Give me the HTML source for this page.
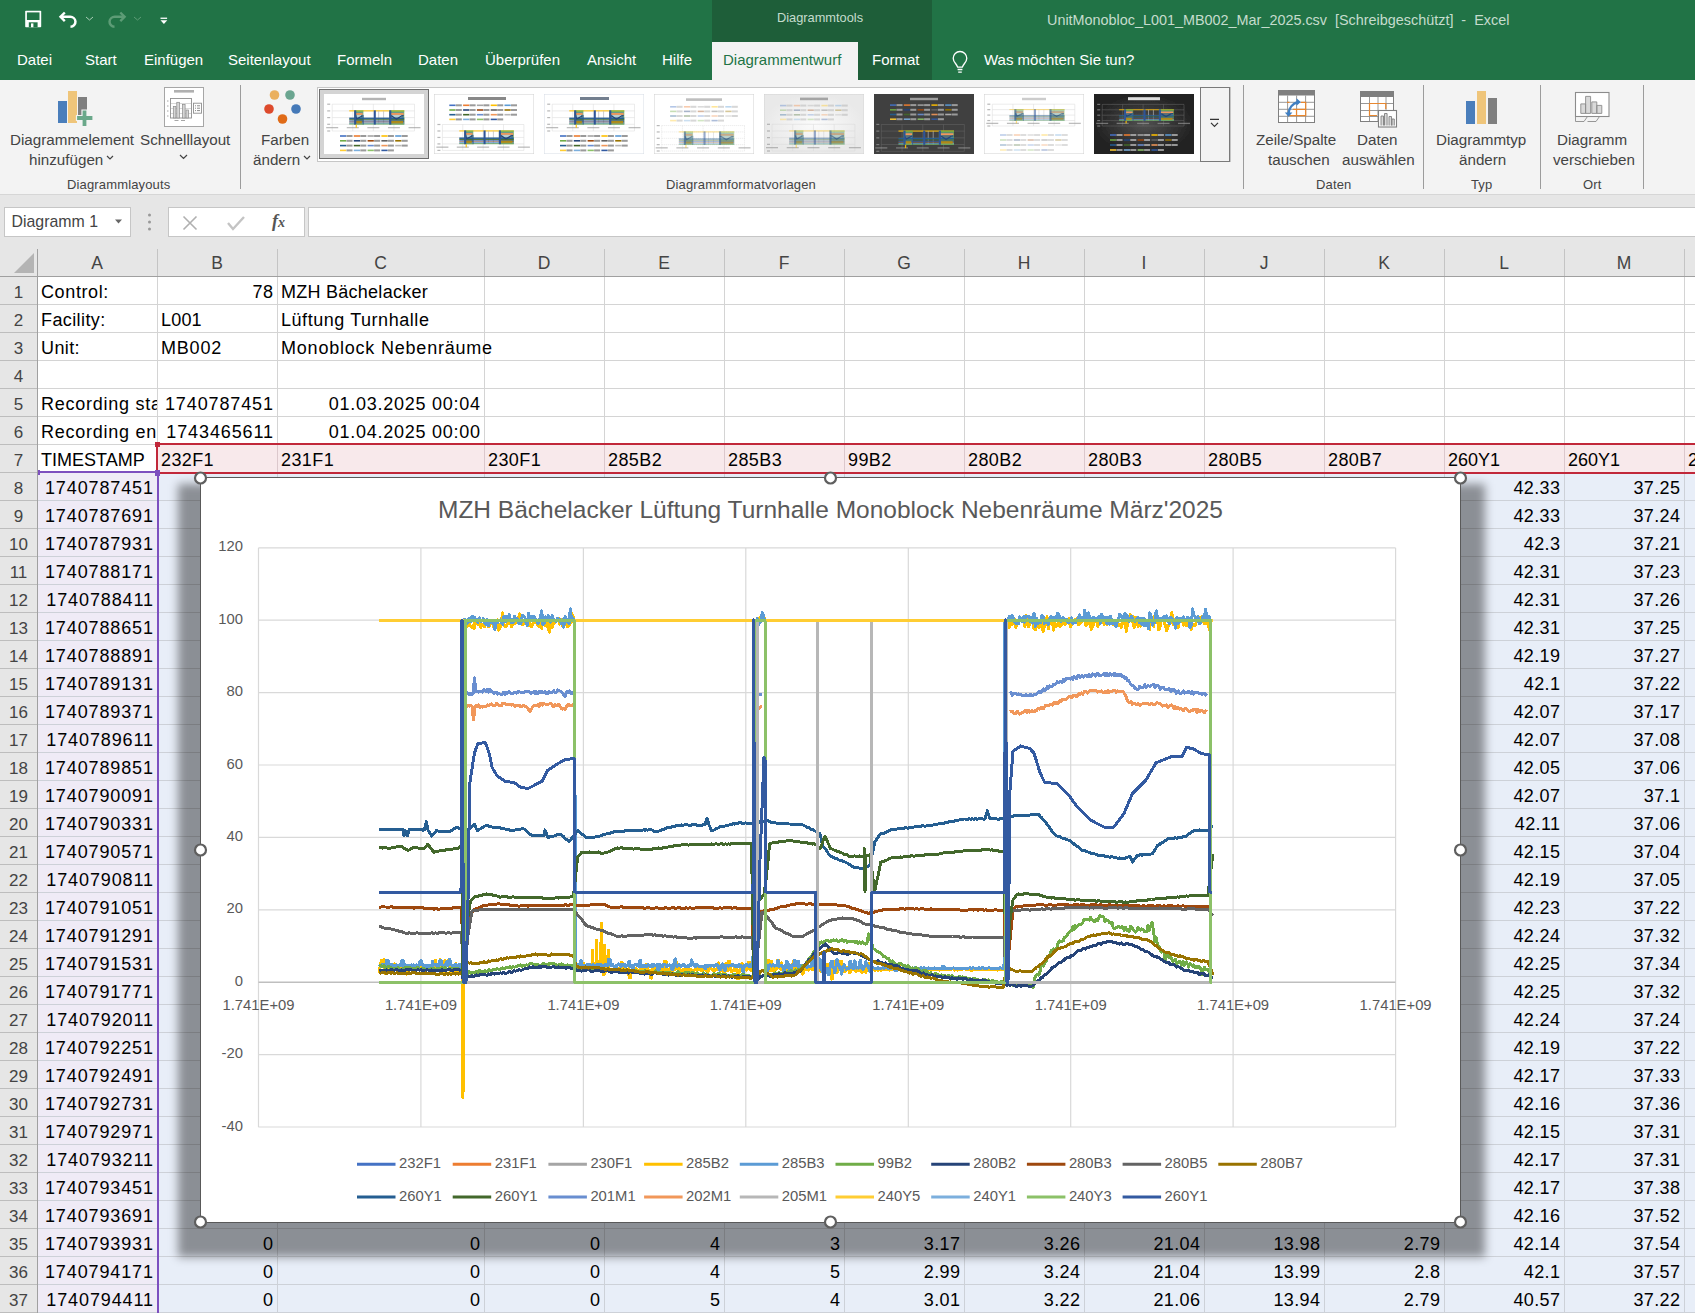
<!DOCTYPE html>
<html><head><meta charset="utf-8">
<style>
*{margin:0;padding:0;box-sizing:border-box}
html,body{width:1695px;height:1313px;overflow:hidden;background:#fff;font-family:"Liberation Sans",sans-serif}
.a{position:absolute}
.t{position:absolute;white-space:nowrap;line-height:1}
#title{left:0;top:0;width:1695px;height:80px;background:#217346}
#ctx{left:712px;top:0;width:220px;height:80px;background:#1e5e39}
#acttab{left:712px;top:42px;width:146px;height:38px;background:#f3f3f3}
.tab{color:#fff;font-size:15px;top:52px}
#ribbon{left:0;top:80px;width:1695px;height:115px;background:#f3f3f3;border-bottom:1px solid #d6d6d6}
.rl{color:#444;font-size:15.2px;text-align:center}
.gl{color:#444;font-size:13px;letter-spacing:0.15px}
.sep{position:absolute;top:85px;width:1px;height:104px;background:#9c9c9c}
#fbar{left:0;top:195px;width:1695px;height:52px;background:#e6e6e6}
.ch{top:255px;font-size:17.5px;color:#444;text-align:center}
.rn{left:0;width:37px;font-size:17px;color:#444;text-align:center}
.cell{font-size:18px;color:#000}
.ax{font-size:14.8px;color:#595959}
</style></head><body>
<div id="title" class="a"></div>
<div id="ctx" class="a"></div>
<div id="acttab" class="a"></div>
<div class="t" style="left:777px;top:12px;font-size:12.8px;color:#c5dccd">Diagrammtools</div>
<div class="t" style="left:1047px;top:13px;font-size:14.4px;color:#c5dccd;white-space:pre">UnitMonobloc_L001_MB002_Mar_2025.csv  [Schreibgeschützt]  -  Excel</div>
<!-- qat icons -->
<svg class="a" style="left:0;top:0" width="180" height="40">
  <rect x="25.2" y="10.8" width="16" height="16.4" rx="0.8" fill="#fff"/>
  <rect x="26.9" y="12.4" width="12.6" height="7.6" fill="#217346"/>
  <rect x="28.8" y="22.3" width="8.8" height="4.9" fill="#217346"/>
  <rect x="31" y="23.4" width="2.4" height="3.8" fill="#fff"/>
  <path d="M64.8 12.5l-4.3 4.3 4.3 4.3" fill="none" stroke="#fff" stroke-width="2.4"/>
  <path d="M61 16.8h9a5.2 5 0 0 1 0.5 10" fill="none" stroke="#fff" stroke-width="2.5"/>
  <path d="M86 17l3.5 3 3.5-3" fill="none" stroke="#a8cdb6" stroke-width="1"/>
  <path d="M120.3 12.5l4.3 4.3-4.3 4.3" fill="none" stroke="#5d9c76" stroke-width="2.4"/>
  <path d="M124 16.8h-9a5.2 5 0 0 0-0.5 10" fill="none" stroke="#5d9c76" stroke-width="2.5"/>
  <path d="M134 17l3.5 3 3.5-3" fill="none" stroke="#5d9c76" stroke-width="1"/>
  <rect x="160.5" y="17.6" width="6.6" height="1.3" fill="#fff"/>
  <path d="M160.5 20.3h6.8l-3.4 3.8z" fill="#fff"/>
</svg>
<div class="t tab" style="left:17px">Datei</div>
<div class="t tab" style="left:85px">Start</div>
<div class="t tab" style="left:144px">Einfügen</div>
<div class="t tab" style="left:228px">Seitenlayout</div>
<div class="t tab" style="left:337px">Formeln</div>
<div class="t tab" style="left:418px">Daten</div>
<div class="t tab" style="left:485px">Überprüfen</div>
<div class="t tab" style="left:587px">Ansicht</div>
<div class="t tab" style="left:662px">Hilfe</div>
<div class="t tab" style="left:723px;color:#217346">Diagrammentwurf</div>
<div class="t tab" style="left:872px">Format</div>
<svg class="a" style="left:948px;top:50px" width="24" height="26">
  <path d="M9.6 17.2C8.8 13.8 5.2 12.4 5.2 8.3A6.8 6.8 0 0 1 18.8 8.3C18.8 12.4 15.2 13.8 14.4 17.2Z" fill="none" stroke="#fff" stroke-width="1.3" stroke-linejoin="round"/>
  <path d="M9.6 19.5h4.8M10.2 22.2h3.6" stroke="#fff" stroke-width="1.3" fill="none"/>
</svg>
<div class="t tab" style="left:984px">Was möchten Sie tun?</div>

<div id="ribbon" class="a"></div>
<!-- ribbon content -->
<svg class="a" style="left:0;top:80px" width="1695" height="113">
  <!-- Diagrammelement icon -->
  <rect x="58" y="21" width="9" height="22" fill="#4a7ebb"/>
  <rect x="68" y="11" width="9" height="32" fill="#efc57a"/>
  <rect x="78" y="17" width="9" height="18" fill="#7f7f7f"/>
  <path d="M82 30h5v5.5h6v5h-6v6h-5v-6h-5.5v-5h5.5z" fill="#6aa88a" stroke="#f3f3f3" stroke-width="1.2"/>
  <!-- Schnelllayout icon -->
  <rect x="164.5" y="7.5" width="39" height="39" fill="#fff" stroke="#a6a6a6"/>
  <rect x="174" y="10" width="20" height="2.6" fill="#b0b0b0"/>
  <rect x="170.5" y="18.5" width="21" height="19.5" fill="#fff" stroke="#8f8f8f" stroke-width="0.9"/>
  <path d="M171 23.5h20M171 28.5h20M171 33.5h20" stroke="#c8c8c8" stroke-width="0.7"/>
  <path d="M167 21h1.5M167 26h1.5M167 31h1.5M167 36h1.5M174.5 40.5h4M181 40.5h4" stroke="#8f8f8f" stroke-width="0.8"/>
  <rect x="173.3" y="26.5" width="2.6" height="11.5" fill="#d6d6d6" stroke="#8a8a8a" stroke-width="0.7"/>
  <rect x="176.8" y="22.3" width="2.6" height="15.7" fill="#d6d6d6" stroke="#8a8a8a" stroke-width="0.7"/>
  <rect x="182.5" y="24.5" width="2.6" height="13.5" fill="#d6d6d6" stroke="#8a8a8a" stroke-width="0.7"/>
  <rect x="186" y="30" width="2.6" height="8" fill="#d6d6d6" stroke="#8a8a8a" stroke-width="0.7"/>
  <rect x="193.5" y="23.2" width="8" height="10" fill="#fff" stroke="#8f8f8f" stroke-width="0.9"/>
  <path d="M195 25.8h1M197 25.8h3M195 28.2h1M197 28.2h3M195 30.6h1M197 30.6h3" stroke="#7f7f7f" stroke-width="0.9"/>
  <!-- Farben icon -->
  <circle cx="274.5" cy="15" r="4.8" fill="#eab05f"/>
  <circle cx="290" cy="15" r="4.8" fill="#6aa590"/>
  <circle cx="269" cy="29" r="4.8" fill="#dd4a2c"/>
  <circle cx="296" cy="29" r="4.8" fill="#4579b8"/>
  <circle cx="282.5" cy="39" r="4.8" fill="#e06b17"/>
  <!-- gallery border -->
  <rect x="317.5" y="7.5" width="913" height="74" fill="#fff" stroke="#c6c6c6"/>
  <rect x="1200.5" y="7.5" width="29" height="74" fill="#f3f3f3" stroke="#7a7a7a"/>
  <path d="M1210 39.4h9M1211 42.8l3.5 3.5 3.5-3.5" fill="none" stroke="#333" stroke-width="1.2"/>
  <rect x="319.5" y="9.5" width="109" height="69" fill="#d4d4d4" stroke="#6d6d6d"/>
  <!-- Zeile/Spalte icon -->
  <rect x="1278.5" y="10.5" width="36" height="32" fill="#fff" stroke="#7f7f7f"/>
  <rect x="1278" y="10" width="37" height="5.5" fill="#7f7f7f"/>
  <path d="M1279 22.3h35M1279 29.3h35M1279 36.3h35M1287.6 15.5v27M1296.6 15.5v27M1305.6 15.5v27" stroke="#8c8c8c" stroke-width="0.9"/>
  <path d="M1287 22.4h2.5M1301 22.4h4.7v13.2h-16.8M1293 29.3h12.7M1296.5 29.3v6.3" fill="none" stroke="#e8872f" stroke-width="1.2"/>
  <path d="M1288.5 33.5a13 13 0 0 1 9.5-11.5" fill="none" stroke="#3f7fc3" stroke-width="2.4"/>
  <path d="M1296.5 18.3l4.3 3.8-4.3 3.6z M1284.8 32.5l3.8 4.3 3.8-4.3z" fill="#3f7fc3"/>
  <!-- Daten auswählen icon -->
  <rect x="1360.5" y="11.5" width="33" height="30" fill="#fff" stroke="#7f7f7f"/>
  <rect x="1360" y="11" width="34" height="6" fill="#7f7f7f"/>
  <path d="M1361 23.5h32M1361 30.5h32M1361 36.5h32M1369.5 17v24M1378 17v24M1386 17v24" stroke="#8c8c8c" stroke-width="0.9"/>
  <path d="M1377 35.5h-7.5v-12h16.3v5.5" fill="none" stroke="#e8872f" stroke-width="1.2"/>
  <rect x="1378.5" y="30.5" width="18" height="16.5" fill="#fff" stroke="#7f7f7f" stroke-width="1.1"/>
  <path d="M1381 45.5v-9.5h2.5v9.5M1384.5 45.5v-12h2.6v12M1389 45.5v-9h2.5v9M1392 45.5v-6.5h2.3v6.5" fill="#d9d9d9" stroke="#7f7f7f" stroke-width="0.9"/>
  <!-- Diagrammtyp icon -->
  <rect x="1466" y="21" width="9" height="23" fill="#4a7ebb"/>
  <rect x="1477" y="11" width="9" height="33" fill="#efc57a"/>
  <rect x="1488" y="18" width="9" height="26" fill="#7f7f7f"/>
  <!-- Diagramm verschieben icon -->
  <rect x="1575.5" y="12.5" width="33.5" height="24" fill="#fff" stroke="#8c8c8c" stroke-width="1.1"/>
  <path d="M1580.8 33.4v-9.5h4.8v9.5zM1585.6 33.4v-17h5v17zM1591.8 33.4v-11.5h5v11.5zM1596.8 33.4v-8h5v8z" fill="#d9d9d9" stroke="#8c8c8c" stroke-width="0.9"/>
  <path d="M1575.5 36.5v5h8.5l3.5-5M1587.5 41.5h8.5l3.5-5" fill="none" stroke="#8c8c8c" stroke-width="0.9"/>
  <!-- chevrons -->
  <path d="M107 76l3 3 3-3M180 75l3.5 3.5 3.5-3.5M304 76l3 3 3-3" fill="none" stroke="#444" stroke-width="1.2"/>
</svg>
<div class="sep" style="left:240px"></div>
<div class="sep" style="left:1243px"></div>
<div class="sep" style="left:1423px"></div>
<div class="sep" style="left:1540px"></div>
<div class="sep" style="left:1643px"></div>
<div class="t rl" style="left:10px;top:132px">Diagrammelement</div>
<div class="t rl" style="left:29px;top:152px">hinzufügen</div>
<div class="t rl" style="left:140px;top:132px">Schnelllayout</div>
<div class="t rl" style="left:261px;top:132px">Farben</div>
<div class="t rl" style="left:253px;top:152px">ändern</div>
<div class="t rl" style="left:1256px;top:132px">Zeile/Spalte</div>
<div class="t rl" style="left:1268px;top:152px">tauschen</div>
<div class="t rl" style="left:1357px;top:132px">Daten</div>
<div class="t rl" style="left:1342px;top:152px">auswählen</div>
<div class="t rl" style="left:1436px;top:132px">Diagrammtyp</div>
<div class="t rl" style="left:1459px;top:152px">ändern</div>
<div class="t rl" style="left:1557px;top:132px">Diagramm</div>
<div class="t rl" style="left:1553px;top:152px">verschieben</div>
<div class="t gl" style="left:67px;top:178px">Diagrammlayouts</div>
<div class="t gl" style="left:666px;top:178px">Diagrammformatvorlagen</div>
<div class="t gl" style="left:1316px;top:178px">Daten</div>
<div class="t gl" style="left:1471px;top:178px">Typ</div>
<div class="t gl" style="left:1583px;top:178px">Ort</div>

<svg width="0" height="0" style="position:absolute"><filter id="tb"><feGaussianBlur stdDeviation="0.35"/></filter></svg>
<svg class="a" style="left:324px;top:94px" width="100" height="60" viewBox="0 0 100 60"><g filter="url(#tb)"><rect width="100" height="60" fill="#fff"/><rect x="38" y="3.8" width="24" height="2.4" fill="#777" opacity="0.55"/><line x1="8.2" y1="10.20" x2="90.5" y2="10.20" stroke="#d9d9d9" stroke-width="0.5"/>
<line x1="8.20" y1="10.2" x2="8.20" y2="37.0" stroke="#d9d9d9" stroke-width="0.5"/>
<line x1="8.2" y1="16.90" x2="90.5" y2="16.90" stroke="#d9d9d9" stroke-width="0.5"/>
<line x1="28.77" y1="10.2" x2="28.77" y2="37.0" stroke="#d9d9d9" stroke-width="0.5"/>
<line x1="8.2" y1="23.60" x2="90.5" y2="23.60" stroke="#d9d9d9" stroke-width="0.5"/>
<line x1="49.35" y1="10.2" x2="49.35" y2="37.0" stroke="#d9d9d9" stroke-width="0.5"/>
<line x1="8.2" y1="30.30" x2="90.5" y2="30.30" stroke="#d9d9d9" stroke-width="0.5"/>
<line x1="69.92" y1="10.2" x2="69.92" y2="37.0" stroke="#d9d9d9" stroke-width="0.5"/>
<line x1="8.2" y1="37.00" x2="90.5" y2="37.00" stroke="#d9d9d9" stroke-width="0.5"/>
<line x1="90.50" y1="10.2" x2="90.50" y2="37.0" stroke="#d9d9d9" stroke-width="0.5"/>
<rect x="3.1999999999999993" y="9.60" width="3" height="1.2" fill="#9a9a9a" opacity="0.7"/>
<rect x="2.20" y="32.98" width="12" height="1.3" fill="#9a9a9a" opacity="0.65"/>
<rect x="3.1999999999999993" y="16.30" width="3" height="1.2" fill="#9a9a9a" opacity="0.7"/>
<rect x="22.77" y="32.98" width="12" height="1.3" fill="#9a9a9a" opacity="0.65"/>
<rect x="3.1999999999999993" y="23.00" width="3" height="1.2" fill="#9a9a9a" opacity="0.7"/>
<rect x="43.35" y="32.98" width="12" height="1.3" fill="#9a9a9a" opacity="0.65"/>
<rect x="3.1999999999999993" y="29.70" width="3" height="1.2" fill="#9a9a9a" opacity="0.7"/>
<rect x="63.92" y="32.98" width="12" height="1.3" fill="#9a9a9a" opacity="0.65"/>
<rect x="3.1999999999999993" y="36.40" width="3" height="1.2" fill="#9a9a9a" opacity="0.7"/>
<rect x="84.50" y="32.98" width="12" height="1.3" fill="#9a9a9a" opacity="0.65"/>
<rect x="25.24" y="16.23" width="55.06" height="1.21" fill="#ffc000" opacity="0.85"/>
<rect x="30.17" y="16.36" width="9.22" height="14.20" fill="#70ad47" opacity="0.85"/>
<rect x="65.23" y="16.36" width="15.06" height="14.20" fill="#70ad47" opacity="0.85"/>
<rect x="30.83" y="18.24" width="7.98" height="11.26" fill="#4472c4" opacity="0.55"/>
<rect x="65.81" y="18.24" width="13.83" height="11.26" fill="#4472c4" opacity="0.55"/>
<rect x="31.24" y="19.04" width="7.41" height="1.88" fill="#f1975a" opacity="1.00"/>
<rect x="65.81" y="19.04" width="13.83" height="1.88" fill="#f1975a" opacity="1.00"/>
<rect x="32.89" y="20.92" width="4.11" height="2.68" fill="#ffffff" opacity="0.55"/>
<rect x="68.28" y="20.92" width="9.05" height="2.68" fill="#ffffff" opacity="0.55"/>
<rect x="54.29" y="16.90" width="0.82" height="13.40" fill="#b7b7b7" opacity="0.80"/>
<rect x="59.23" y="16.90" width="0.82" height="13.40" fill="#b7b7b7" opacity="0.80"/>
<rect x="25.24" y="23.60" width="55.06" height="1.61" fill="#255e91" opacity="0.95"/>
<rect x="25.24" y="25.21" width="55.06" height="1.07" fill="#43682b" opacity="0.90"/>
<rect x="25.24" y="26.55" width="55.06" height="1.07" fill="#335aa1" opacity="0.90"/>
<rect x="25.24" y="27.62" width="55.06" height="1.07" fill="#9e480e" opacity="0.60"/>
<rect x="25.24" y="28.42" width="55.06" height="1.88" fill="#5b9bd5" opacity="0.75"/>
<rect x="25.24" y="29.50" width="55.06" height="1.07" fill="#70ad47" opacity="0.70"/>
<polyline points="31.24,21.46 32.89,24.94 36.18,23.06 38.65,21.72" fill="none" stroke="#264478" stroke-width="1.2" opacity="1.00"/>
<polyline points="65.81,21.46 68.28,22.26 72.39,25.21 77.33,21.99 79.64,21.72" fill="none" stroke="#264478" stroke-width="1.2" opacity="1.00"/>
<rect x="32.07" y="26.82" width="5.76" height="2.68" fill="#bf9000" opacity="0.80"/>
<rect x="66.63" y="26.82" width="12.35" height="2.68" fill="#bf9000" opacity="0.80"/>
<rect x="30.17" y="16.36" width="2.06" height="14.20" fill="#2f5597" opacity="1.00"/>
<rect x="49.76" y="16.36" width="2.06" height="14.20" fill="#2f5597" opacity="1.00"/>
<rect x="65.23" y="16.36" width="2.06" height="14.20" fill="#2f5597" opacity="1.00"/>
<rect x="38.82" y="20.92" width="0.82" height="9.65" fill="#2f5597" opacity="0.90"/>
<rect x="31.66" y="30.57" width="1.23" height="3.22" fill="#ffc000" opacity="0.90"/><rect x="16.00" y="41.20" width="6.2" height="1.6" fill="#4472c4" opacity="1.00"/>
<rect x="22.50" y="41.00" width="6" height="2" fill="#6f6f6f" opacity="0.70"/>
<rect x="29.80" y="41.20" width="6.2" height="1.6" fill="#ed7d31" opacity="1.00"/>
<rect x="36.30" y="41.00" width="6" height="2" fill="#6f6f6f" opacity="0.70"/>
<rect x="43.60" y="41.20" width="6.2" height="1.6" fill="#a5a5a5" opacity="1.00"/>
<rect x="50.10" y="41.00" width="6" height="2" fill="#6f6f6f" opacity="0.70"/>
<rect x="57.40" y="41.20" width="6.2" height="1.6" fill="#ffc000" opacity="1.00"/>
<rect x="63.90" y="41.00" width="6" height="2" fill="#6f6f6f" opacity="0.70"/>
<rect x="71.20" y="41.20" width="6.2" height="1.6" fill="#5b9bd5" opacity="1.00"/>
<rect x="77.70" y="41.00" width="6" height="2" fill="#6f6f6f" opacity="0.70"/>
<rect x="16.00" y="46.00" width="6.2" height="1.6" fill="#70ad47" opacity="1.00"/>
<rect x="22.50" y="45.80" width="6" height="2" fill="#6f6f6f" opacity="0.70"/>
<rect x="29.80" y="46.00" width="6.2" height="1.6" fill="#264478" opacity="1.00"/>
<rect x="36.30" y="45.80" width="6" height="2" fill="#6f6f6f" opacity="0.70"/>
<rect x="43.60" y="46.00" width="6.2" height="1.6" fill="#9e480e" opacity="1.00"/>
<rect x="50.10" y="45.80" width="6" height="2" fill="#6f6f6f" opacity="0.70"/>
<rect x="57.40" y="46.00" width="6.2" height="1.6" fill="#636363" opacity="1.00"/>
<rect x="63.90" y="45.80" width="6" height="2" fill="#6f6f6f" opacity="0.70"/>
<rect x="71.20" y="46.00" width="6.2" height="1.6" fill="#997300" opacity="1.00"/>
<rect x="77.70" y="45.80" width="6" height="2" fill="#6f6f6f" opacity="0.70"/>
<rect x="16.00" y="50.80" width="6.2" height="1.6" fill="#255e91" opacity="1.00"/>
<rect x="22.50" y="50.60" width="6" height="2" fill="#6f6f6f" opacity="0.70"/>
<rect x="29.80" y="50.80" width="6.2" height="1.6" fill="#43682b" opacity="1.00"/>
<rect x="36.30" y="50.60" width="6" height="2" fill="#6f6f6f" opacity="0.70"/>
<rect x="43.60" y="50.80" width="6.2" height="1.6" fill="#698ed0" opacity="1.00"/>
<rect x="50.10" y="50.60" width="6" height="2" fill="#6f6f6f" opacity="0.70"/>
<rect x="57.40" y="50.80" width="6.2" height="1.6" fill="#f1975a" opacity="1.00"/>
<rect x="63.90" y="50.60" width="6" height="2" fill="#6f6f6f" opacity="0.70"/>
<rect x="71.20" y="50.80" width="6.2" height="1.6" fill="#b7b7b7" opacity="1.00"/>
<rect x="77.70" y="50.60" width="6" height="2" fill="#6f6f6f" opacity="0.70"/>
<rect x="16.00" y="55.60" width="6.2" height="1.6" fill="#ffcd33" opacity="1.00"/>
<rect x="22.50" y="55.40" width="6" height="2" fill="#6f6f6f" opacity="0.70"/>
<rect x="29.80" y="55.60" width="6.2" height="1.6" fill="#7cafdd" opacity="1.00"/>
<rect x="36.30" y="55.40" width="6" height="2" fill="#6f6f6f" opacity="0.70"/>
<rect x="43.60" y="55.60" width="6.2" height="1.6" fill="#8cc168" opacity="1.00"/>
<rect x="50.10" y="55.40" width="6" height="2" fill="#6f6f6f" opacity="0.70"/>
<rect x="57.40" y="55.60" width="6.2" height="1.6" fill="#335aa1" opacity="1.00"/>
<rect x="63.90" y="55.40" width="6" height="2" fill="#6f6f6f" opacity="0.70"/></g></svg>
<svg class="a" style="left:434px;top:94px" width="100" height="60" viewBox="0 0 100 60"><g filter="url(#tb)"><rect x="0.25" y="0.25" width="99.5" height="59.5" fill="#fff" stroke="#d0d0d0" stroke-width="0.5"/><rect x="34" y="3" width="38" height="3" fill="#555" opacity="0.7"/><rect x="15.30" y="10.50" width="6.2" height="1.6" fill="#4472c4" opacity="1.00"/>
<rect x="21.80" y="10.30" width="6" height="2" fill="#6f6f6f" opacity="0.70"/>
<rect x="29.10" y="10.50" width="6.2" height="1.6" fill="#ed7d31" opacity="1.00"/>
<rect x="35.60" y="10.30" width="6" height="2" fill="#6f6f6f" opacity="0.70"/>
<rect x="42.90" y="10.50" width="6.2" height="1.6" fill="#a5a5a5" opacity="1.00"/>
<rect x="49.40" y="10.30" width="6" height="2" fill="#6f6f6f" opacity="0.70"/>
<rect x="56.70" y="10.50" width="6.2" height="1.6" fill="#ffc000" opacity="1.00"/>
<rect x="63.20" y="10.30" width="6" height="2" fill="#6f6f6f" opacity="0.70"/>
<rect x="70.50" y="10.50" width="6.2" height="1.6" fill="#5b9bd5" opacity="1.00"/>
<rect x="77.00" y="10.30" width="6" height="2" fill="#6f6f6f" opacity="0.70"/>
<rect x="15.30" y="15.20" width="6.2" height="1.6" fill="#70ad47" opacity="1.00"/>
<rect x="21.80" y="15.00" width="6" height="2" fill="#6f6f6f" opacity="0.70"/>
<rect x="29.10" y="15.20" width="6.2" height="1.6" fill="#264478" opacity="1.00"/>
<rect x="35.60" y="15.00" width="6" height="2" fill="#6f6f6f" opacity="0.70"/>
<rect x="42.90" y="15.20" width="6.2" height="1.6" fill="#9e480e" opacity="1.00"/>
<rect x="49.40" y="15.00" width="6" height="2" fill="#6f6f6f" opacity="0.70"/>
<rect x="56.70" y="15.20" width="6.2" height="1.6" fill="#636363" opacity="1.00"/>
<rect x="63.20" y="15.00" width="6" height="2" fill="#6f6f6f" opacity="0.70"/>
<rect x="70.50" y="15.20" width="6.2" height="1.6" fill="#997300" opacity="1.00"/>
<rect x="77.00" y="15.00" width="6" height="2" fill="#6f6f6f" opacity="0.70"/>
<rect x="15.30" y="19.90" width="6.2" height="1.6" fill="#255e91" opacity="1.00"/>
<rect x="21.80" y="19.70" width="6" height="2" fill="#6f6f6f" opacity="0.70"/>
<rect x="29.10" y="19.90" width="6.2" height="1.6" fill="#43682b" opacity="1.00"/>
<rect x="35.60" y="19.70" width="6" height="2" fill="#6f6f6f" opacity="0.70"/>
<rect x="42.90" y="19.90" width="6.2" height="1.6" fill="#698ed0" opacity="1.00"/>
<rect x="49.40" y="19.70" width="6" height="2" fill="#6f6f6f" opacity="0.70"/>
<rect x="56.70" y="19.90" width="6.2" height="1.6" fill="#f1975a" opacity="1.00"/>
<rect x="63.20" y="19.70" width="6" height="2" fill="#6f6f6f" opacity="0.70"/>
<rect x="70.50" y="19.90" width="6.2" height="1.6" fill="#b7b7b7" opacity="1.00"/>
<rect x="77.00" y="19.70" width="6" height="2" fill="#6f6f6f" opacity="0.70"/>
<rect x="15.30" y="24.60" width="6.2" height="1.6" fill="#ffcd33" opacity="1.00"/>
<rect x="21.80" y="24.40" width="6" height="2" fill="#6f6f6f" opacity="0.70"/>
<rect x="29.10" y="24.60" width="6.2" height="1.6" fill="#7cafdd" opacity="1.00"/>
<rect x="35.60" y="24.40" width="6" height="2" fill="#6f6f6f" opacity="0.70"/>
<rect x="42.90" y="24.60" width="6.2" height="1.6" fill="#8cc168" opacity="1.00"/>
<rect x="49.40" y="24.40" width="6" height="2" fill="#6f6f6f" opacity="0.70"/>
<rect x="56.70" y="24.60" width="6.2" height="1.6" fill="#335aa1" opacity="1.00"/>
<rect x="63.20" y="24.40" width="6" height="2" fill="#6f6f6f" opacity="0.70"/><line x1="8.4" y1="30.50" x2="89.9" y2="30.50" stroke="#d9d9d9" stroke-width="0.5"/>
<line x1="8.40" y1="30.5" x2="8.40" y2="56.4" stroke="#d9d9d9" stroke-width="0.5"/>
<line x1="8.4" y1="36.98" x2="89.9" y2="36.98" stroke="#d9d9d9" stroke-width="0.5"/>
<line x1="28.77" y1="30.5" x2="28.77" y2="56.4" stroke="#d9d9d9" stroke-width="0.5"/>
<line x1="8.4" y1="43.45" x2="89.9" y2="43.45" stroke="#d9d9d9" stroke-width="0.5"/>
<line x1="49.15" y1="30.5" x2="49.15" y2="56.4" stroke="#d9d9d9" stroke-width="0.5"/>
<line x1="8.4" y1="49.92" x2="89.9" y2="49.92" stroke="#d9d9d9" stroke-width="0.5"/>
<line x1="69.53" y1="30.5" x2="69.53" y2="56.4" stroke="#d9d9d9" stroke-width="0.5"/>
<line x1="8.4" y1="56.40" x2="89.9" y2="56.40" stroke="#d9d9d9" stroke-width="0.5"/>
<line x1="89.90" y1="30.5" x2="89.90" y2="56.4" stroke="#d9d9d9" stroke-width="0.5"/>
<rect x="3.4000000000000004" y="29.90" width="3" height="1.2" fill="#9a9a9a" opacity="0.7"/>
<rect x="2.40" y="52.52" width="12" height="1.3" fill="#9a9a9a" opacity="0.65"/>
<rect x="3.4000000000000004" y="36.38" width="3" height="1.2" fill="#9a9a9a" opacity="0.7"/>
<rect x="22.77" y="52.52" width="12" height="1.3" fill="#9a9a9a" opacity="0.65"/>
<rect x="3.4000000000000004" y="42.85" width="3" height="1.2" fill="#9a9a9a" opacity="0.7"/>
<rect x="43.15" y="52.52" width="12" height="1.3" fill="#9a9a9a" opacity="0.65"/>
<rect x="3.4000000000000004" y="49.32" width="3" height="1.2" fill="#9a9a9a" opacity="0.7"/>
<rect x="63.53" y="52.52" width="12" height="1.3" fill="#9a9a9a" opacity="0.65"/>
<rect x="3.4000000000000004" y="55.80" width="3" height="1.2" fill="#9a9a9a" opacity="0.7"/>
<rect x="83.90" y="52.52" width="12" height="1.3" fill="#9a9a9a" opacity="0.65"/>
<rect x="25.27" y="36.33" width="54.52" height="1.17" fill="#ffc000" opacity="0.85"/>
<rect x="30.16" y="36.46" width="9.13" height="13.73" fill="#70ad47" opacity="0.85"/>
<rect x="64.88" y="36.46" width="14.91" height="13.73" fill="#70ad47" opacity="0.85"/>
<rect x="30.81" y="38.27" width="7.91" height="10.88" fill="#4472c4" opacity="0.55"/>
<rect x="65.45" y="38.27" width="13.69" height="10.88" fill="#4472c4" opacity="0.55"/>
<rect x="31.22" y="39.05" width="7.33" height="1.81" fill="#f1975a" opacity="1.00"/>
<rect x="65.45" y="39.05" width="13.69" height="1.81" fill="#f1975a" opacity="1.00"/>
<rect x="32.85" y="40.86" width="4.07" height="2.59" fill="#ffffff" opacity="0.55"/>
<rect x="67.89" y="40.86" width="8.96" height="2.59" fill="#ffffff" opacity="0.55"/>
<rect x="54.04" y="36.98" width="0.81" height="12.95" fill="#b7b7b7" opacity="0.80"/>
<rect x="58.93" y="36.98" width="0.82" height="12.95" fill="#b7b7b7" opacity="0.80"/>
<rect x="25.27" y="43.45" width="54.52" height="1.55" fill="#255e91" opacity="0.95"/>
<rect x="25.27" y="45.00" width="54.52" height="1.04" fill="#43682b" opacity="0.90"/>
<rect x="25.27" y="46.30" width="54.52" height="1.04" fill="#335aa1" opacity="0.90"/>
<rect x="25.27" y="47.34" width="54.52" height="1.04" fill="#9e480e" opacity="0.60"/>
<rect x="25.27" y="48.11" width="54.52" height="1.81" fill="#5b9bd5" opacity="0.75"/>
<rect x="25.27" y="49.15" width="54.52" height="1.04" fill="#70ad47" opacity="0.70"/>
<polyline points="31.22,41.38 32.85,44.75 36.11,42.93 38.55,41.64" fill="none" stroke="#264478" stroke-width="1.2" opacity="1.00"/>
<polyline points="65.45,41.38 67.89,42.16 71.97,45.00 76.86,41.90 79.14,41.64" fill="none" stroke="#264478" stroke-width="1.2" opacity="1.00"/>
<rect x="32.03" y="46.56" width="5.71" height="2.59" fill="#bf9000" opacity="0.80"/>
<rect x="66.27" y="46.56" width="12.23" height="2.59" fill="#bf9000" opacity="0.80"/>
<rect x="30.16" y="36.46" width="2.04" height="13.73" fill="#2f5597" opacity="1.00"/>
<rect x="49.56" y="36.46" width="2.04" height="13.73" fill="#2f5597" opacity="1.00"/>
<rect x="64.88" y="36.46" width="2.04" height="13.73" fill="#2f5597" opacity="1.00"/>
<rect x="38.72" y="40.86" width="0.82" height="9.32" fill="#2f5597" opacity="0.90"/>
<rect x="31.63" y="50.18" width="1.22" height="3.11" fill="#ffc000" opacity="0.90"/></g></svg>
<svg class="a" style="left:544px;top:94px" width="100" height="60" viewBox="0 0 100 60"><g filter="url(#tb)"><rect x="0.25" y="0.25" width="99.5" height="59.5" fill="#fff" stroke="#d6dce5" stroke-width="0.5"/><rect x="36" y="3" width="29" height="3" fill="#44546a" opacity="0.75"/><line x1="8.2" y1="10.20" x2="90.5" y2="10.20" stroke="#d9d9d9" stroke-width="0.5"/>
<line x1="8.20" y1="10.2" x2="8.20" y2="37.0" stroke="#d9d9d9" stroke-width="0.5"/>
<line x1="8.2" y1="16.90" x2="90.5" y2="16.90" stroke="#d9d9d9" stroke-width="0.5"/>
<line x1="28.77" y1="10.2" x2="28.77" y2="37.0" stroke="#d9d9d9" stroke-width="0.5"/>
<line x1="8.2" y1="23.60" x2="90.5" y2="23.60" stroke="#d9d9d9" stroke-width="0.5"/>
<line x1="49.35" y1="10.2" x2="49.35" y2="37.0" stroke="#d9d9d9" stroke-width="0.5"/>
<line x1="8.2" y1="30.30" x2="90.5" y2="30.30" stroke="#d9d9d9" stroke-width="0.5"/>
<line x1="69.92" y1="10.2" x2="69.92" y2="37.0" stroke="#d9d9d9" stroke-width="0.5"/>
<line x1="8.2" y1="37.00" x2="90.5" y2="37.00" stroke="#d9d9d9" stroke-width="0.5"/>
<line x1="90.50" y1="10.2" x2="90.50" y2="37.0" stroke="#d9d9d9" stroke-width="0.5"/>
<rect x="3.1999999999999993" y="9.60" width="3" height="1.2" fill="#9a9a9a" opacity="0.7"/>
<rect x="2.20" y="32.98" width="12" height="1.3" fill="#9a9a9a" opacity="0.65"/>
<rect x="3.1999999999999993" y="16.30" width="3" height="1.2" fill="#9a9a9a" opacity="0.7"/>
<rect x="22.77" y="32.98" width="12" height="1.3" fill="#9a9a9a" opacity="0.65"/>
<rect x="3.1999999999999993" y="23.00" width="3" height="1.2" fill="#9a9a9a" opacity="0.7"/>
<rect x="43.35" y="32.98" width="12" height="1.3" fill="#9a9a9a" opacity="0.65"/>
<rect x="3.1999999999999993" y="29.70" width="3" height="1.2" fill="#9a9a9a" opacity="0.7"/>
<rect x="63.92" y="32.98" width="12" height="1.3" fill="#9a9a9a" opacity="0.65"/>
<rect x="3.1999999999999993" y="36.40" width="3" height="1.2" fill="#9a9a9a" opacity="0.7"/>
<rect x="84.50" y="32.98" width="12" height="1.3" fill="#9a9a9a" opacity="0.65"/>
<rect x="25.24" y="16.23" width="55.06" height="1.21" fill="#ffc000" opacity="0.85"/>
<rect x="30.17" y="16.36" width="9.22" height="14.20" fill="#70ad47" opacity="0.85"/>
<rect x="65.23" y="16.36" width="15.06" height="14.20" fill="#70ad47" opacity="0.85"/>
<rect x="30.83" y="18.24" width="7.98" height="11.26" fill="#4472c4" opacity="0.55"/>
<rect x="65.81" y="18.24" width="13.83" height="11.26" fill="#4472c4" opacity="0.55"/>
<rect x="31.24" y="19.04" width="7.41" height="1.88" fill="#f1975a" opacity="1.00"/>
<rect x="65.81" y="19.04" width="13.83" height="1.88" fill="#f1975a" opacity="1.00"/>
<rect x="32.89" y="20.92" width="4.11" height="2.68" fill="#ffffff" opacity="0.55"/>
<rect x="68.28" y="20.92" width="9.05" height="2.68" fill="#ffffff" opacity="0.55"/>
<rect x="54.29" y="16.90" width="0.82" height="13.40" fill="#b7b7b7" opacity="0.80"/>
<rect x="59.23" y="16.90" width="0.82" height="13.40" fill="#b7b7b7" opacity="0.80"/>
<rect x="25.24" y="23.60" width="55.06" height="1.61" fill="#255e91" opacity="0.95"/>
<rect x="25.24" y="25.21" width="55.06" height="1.07" fill="#43682b" opacity="0.90"/>
<rect x="25.24" y="26.55" width="55.06" height="1.07" fill="#335aa1" opacity="0.90"/>
<rect x="25.24" y="27.62" width="55.06" height="1.07" fill="#9e480e" opacity="0.60"/>
<rect x="25.24" y="28.42" width="55.06" height="1.88" fill="#5b9bd5" opacity="0.75"/>
<rect x="25.24" y="29.50" width="55.06" height="1.07" fill="#70ad47" opacity="0.70"/>
<polyline points="31.24,21.46 32.89,24.94 36.18,23.06 38.65,21.72" fill="none" stroke="#264478" stroke-width="1.2" opacity="1.00"/>
<polyline points="65.81,21.46 68.28,22.26 72.39,25.21 77.33,21.99 79.64,21.72" fill="none" stroke="#264478" stroke-width="1.2" opacity="1.00"/>
<rect x="32.07" y="26.82" width="5.76" height="2.68" fill="#bf9000" opacity="0.80"/>
<rect x="66.63" y="26.82" width="12.35" height="2.68" fill="#bf9000" opacity="0.80"/>
<rect x="30.17" y="16.36" width="2.06" height="14.20" fill="#2f5597" opacity="1.00"/>
<rect x="49.76" y="16.36" width="2.06" height="14.20" fill="#2f5597" opacity="1.00"/>
<rect x="65.23" y="16.36" width="2.06" height="14.20" fill="#2f5597" opacity="1.00"/>
<rect x="38.82" y="20.92" width="0.82" height="9.65" fill="#2f5597" opacity="0.90"/>
<rect x="31.66" y="30.57" width="1.23" height="3.22" fill="#ffc000" opacity="0.90"/><rect x="16.00" y="41.20" width="6.2" height="1.6" fill="#4472c4" opacity="1.00"/>
<rect x="22.50" y="41.00" width="6" height="2" fill="#6f6f6f" opacity="0.70"/>
<rect x="29.80" y="41.20" width="6.2" height="1.6" fill="#ed7d31" opacity="1.00"/>
<rect x="36.30" y="41.00" width="6" height="2" fill="#6f6f6f" opacity="0.70"/>
<rect x="43.60" y="41.20" width="6.2" height="1.6" fill="#a5a5a5" opacity="1.00"/>
<rect x="50.10" y="41.00" width="6" height="2" fill="#6f6f6f" opacity="0.70"/>
<rect x="57.40" y="41.20" width="6.2" height="1.6" fill="#ffc000" opacity="1.00"/>
<rect x="63.90" y="41.00" width="6" height="2" fill="#6f6f6f" opacity="0.70"/>
<rect x="71.20" y="41.20" width="6.2" height="1.6" fill="#5b9bd5" opacity="1.00"/>
<rect x="77.70" y="41.00" width="6" height="2" fill="#6f6f6f" opacity="0.70"/>
<rect x="16.00" y="46.00" width="6.2" height="1.6" fill="#70ad47" opacity="1.00"/>
<rect x="22.50" y="45.80" width="6" height="2" fill="#6f6f6f" opacity="0.70"/>
<rect x="29.80" y="46.00" width="6.2" height="1.6" fill="#264478" opacity="1.00"/>
<rect x="36.30" y="45.80" width="6" height="2" fill="#6f6f6f" opacity="0.70"/>
<rect x="43.60" y="46.00" width="6.2" height="1.6" fill="#9e480e" opacity="1.00"/>
<rect x="50.10" y="45.80" width="6" height="2" fill="#6f6f6f" opacity="0.70"/>
<rect x="57.40" y="46.00" width="6.2" height="1.6" fill="#636363" opacity="1.00"/>
<rect x="63.90" y="45.80" width="6" height="2" fill="#6f6f6f" opacity="0.70"/>
<rect x="71.20" y="46.00" width="6.2" height="1.6" fill="#997300" opacity="1.00"/>
<rect x="77.70" y="45.80" width="6" height="2" fill="#6f6f6f" opacity="0.70"/>
<rect x="16.00" y="50.80" width="6.2" height="1.6" fill="#255e91" opacity="1.00"/>
<rect x="22.50" y="50.60" width="6" height="2" fill="#6f6f6f" opacity="0.70"/>
<rect x="29.80" y="50.80" width="6.2" height="1.6" fill="#43682b" opacity="1.00"/>
<rect x="36.30" y="50.60" width="6" height="2" fill="#6f6f6f" opacity="0.70"/>
<rect x="43.60" y="50.80" width="6.2" height="1.6" fill="#698ed0" opacity="1.00"/>
<rect x="50.10" y="50.60" width="6" height="2" fill="#6f6f6f" opacity="0.70"/>
<rect x="57.40" y="50.80" width="6.2" height="1.6" fill="#f1975a" opacity="1.00"/>
<rect x="63.90" y="50.60" width="6" height="2" fill="#6f6f6f" opacity="0.70"/>
<rect x="71.20" y="50.80" width="6.2" height="1.6" fill="#b7b7b7" opacity="1.00"/>
<rect x="77.70" y="50.60" width="6" height="2" fill="#6f6f6f" opacity="0.70"/>
<rect x="16.00" y="55.60" width="6.2" height="1.6" fill="#ffcd33" opacity="1.00"/>
<rect x="22.50" y="55.40" width="6" height="2" fill="#6f6f6f" opacity="0.70"/>
<rect x="29.80" y="55.60" width="6.2" height="1.6" fill="#7cafdd" opacity="1.00"/>
<rect x="36.30" y="55.40" width="6" height="2" fill="#6f6f6f" opacity="0.70"/>
<rect x="43.60" y="55.60" width="6.2" height="1.6" fill="#8cc168" opacity="1.00"/>
<rect x="50.10" y="55.40" width="6" height="2" fill="#6f6f6f" opacity="0.70"/>
<rect x="57.40" y="55.60" width="6.2" height="1.6" fill="#335aa1" opacity="1.00"/>
<rect x="63.90" y="55.40" width="6" height="2" fill="#6f6f6f" opacity="0.70"/></g></svg>
<svg class="a" style="left:654px;top:94px" width="100" height="60" viewBox="0 0 100 60"><g filter="url(#tb)"><rect x="0.25" y="0.25" width="99.5" height="59.5" fill="#fff" stroke="#d0d0d0" stroke-width="0.5"/><rect x="32" y="4.3" width="36" height="2.6" fill="#888" opacity="0.55"/><rect x="16.10" y="12.00" width="6.2" height="1.6" fill="#4472c4" opacity="0.40"/>
<rect x="22.60" y="11.80" width="6" height="2" fill="#6f6f6f" opacity="0.28"/>
<rect x="29.90" y="12.00" width="6.2" height="1.6" fill="#ed7d31" opacity="0.40"/>
<rect x="36.40" y="11.80" width="6" height="2" fill="#6f6f6f" opacity="0.28"/>
<rect x="43.70" y="12.00" width="6.2" height="1.6" fill="#a5a5a5" opacity="0.40"/>
<rect x="50.20" y="11.80" width="6" height="2" fill="#6f6f6f" opacity="0.28"/>
<rect x="57.50" y="12.00" width="6.2" height="1.6" fill="#ffc000" opacity="0.40"/>
<rect x="64.00" y="11.80" width="6" height="2" fill="#6f6f6f" opacity="0.28"/>
<rect x="71.30" y="12.00" width="6.2" height="1.6" fill="#5b9bd5" opacity="0.40"/>
<rect x="77.80" y="11.80" width="6" height="2" fill="#6f6f6f" opacity="0.28"/>
<rect x="16.10" y="16.60" width="6.2" height="1.6" fill="#70ad47" opacity="0.40"/>
<rect x="22.60" y="16.40" width="6" height="2" fill="#6f6f6f" opacity="0.28"/>
<rect x="29.90" y="16.60" width="6.2" height="1.6" fill="#264478" opacity="0.40"/>
<rect x="36.40" y="16.40" width="6" height="2" fill="#6f6f6f" opacity="0.28"/>
<rect x="43.70" y="16.60" width="6.2" height="1.6" fill="#9e480e" opacity="0.40"/>
<rect x="50.20" y="16.40" width="6" height="2" fill="#6f6f6f" opacity="0.28"/>
<rect x="57.50" y="16.60" width="6.2" height="1.6" fill="#636363" opacity="0.40"/>
<rect x="64.00" y="16.40" width="6" height="2" fill="#6f6f6f" opacity="0.28"/>
<rect x="71.30" y="16.60" width="6.2" height="1.6" fill="#997300" opacity="0.40"/>
<rect x="77.80" y="16.40" width="6" height="2" fill="#6f6f6f" opacity="0.28"/>
<rect x="16.10" y="21.20" width="6.2" height="1.6" fill="#255e91" opacity="0.40"/>
<rect x="22.60" y="21.00" width="6" height="2" fill="#6f6f6f" opacity="0.28"/>
<rect x="29.90" y="21.20" width="6.2" height="1.6" fill="#43682b" opacity="0.40"/>
<rect x="36.40" y="21.00" width="6" height="2" fill="#6f6f6f" opacity="0.28"/>
<rect x="43.70" y="21.20" width="6.2" height="1.6" fill="#698ed0" opacity="0.40"/>
<rect x="50.20" y="21.00" width="6" height="2" fill="#6f6f6f" opacity="0.28"/>
<rect x="57.50" y="21.20" width="6.2" height="1.6" fill="#f1975a" opacity="0.40"/>
<rect x="64.00" y="21.00" width="6" height="2" fill="#6f6f6f" opacity="0.28"/>
<rect x="71.30" y="21.20" width="6.2" height="1.6" fill="#b7b7b7" opacity="0.40"/>
<rect x="77.80" y="21.00" width="6" height="2" fill="#6f6f6f" opacity="0.28"/>
<rect x="16.10" y="25.80" width="6.2" height="1.6" fill="#ffcd33" opacity="0.40"/>
<rect x="22.60" y="25.60" width="6" height="2" fill="#6f6f6f" opacity="0.28"/>
<rect x="29.90" y="25.80" width="6.2" height="1.6" fill="#7cafdd" opacity="0.40"/>
<rect x="36.40" y="25.60" width="6" height="2" fill="#6f6f6f" opacity="0.28"/>
<rect x="43.70" y="25.80" width="6.2" height="1.6" fill="#8cc168" opacity="0.40"/>
<rect x="50.20" y="25.60" width="6" height="2" fill="#6f6f6f" opacity="0.28"/>
<rect x="57.50" y="25.80" width="6.2" height="1.6" fill="#335aa1" opacity="0.40"/>
<rect x="64.00" y="25.60" width="6" height="2" fill="#6f6f6f" opacity="0.28"/><line x1="7.7" y1="31.60" x2="90.5" y2="31.60" stroke="#d9d9d9" stroke-width="0.5" stroke-dasharray="1.2 0.8"/>
<line x1="7.70" y1="31.6" x2="7.70" y2="57.0" stroke="#d9d9d9" stroke-width="0.5" stroke-dasharray="1.2 0.8"/>
<line x1="7.7" y1="37.95" x2="90.5" y2="37.95" stroke="#d9d9d9" stroke-width="0.5" stroke-dasharray="1.2 0.8"/>
<line x1="28.40" y1="31.6" x2="28.40" y2="57.0" stroke="#d9d9d9" stroke-width="0.5" stroke-dasharray="1.2 0.8"/>
<line x1="7.7" y1="44.30" x2="90.5" y2="44.30" stroke="#d9d9d9" stroke-width="0.5" stroke-dasharray="1.2 0.8"/>
<line x1="49.10" y1="31.6" x2="49.10" y2="57.0" stroke="#d9d9d9" stroke-width="0.5" stroke-dasharray="1.2 0.8"/>
<line x1="7.7" y1="50.65" x2="90.5" y2="50.65" stroke="#d9d9d9" stroke-width="0.5" stroke-dasharray="1.2 0.8"/>
<line x1="69.80" y1="31.6" x2="69.80" y2="57.0" stroke="#d9d9d9" stroke-width="0.5" stroke-dasharray="1.2 0.8"/>
<line x1="7.7" y1="57.00" x2="90.5" y2="57.00" stroke="#d9d9d9" stroke-width="0.5" stroke-dasharray="1.2 0.8"/>
<line x1="90.50" y1="31.6" x2="90.50" y2="57.0" stroke="#d9d9d9" stroke-width="0.5" stroke-dasharray="1.2 0.8"/>
<rect x="2.7" y="31.00" width="3" height="1.2" fill="#9a9a9a" opacity="0.7"/>
<rect x="1.70" y="53.19" width="12" height="1.3" fill="#9a9a9a" opacity="0.65"/>
<rect x="2.7" y="37.35" width="3" height="1.2" fill="#9a9a9a" opacity="0.7"/>
<rect x="22.40" y="53.19" width="12" height="1.3" fill="#9a9a9a" opacity="0.65"/>
<rect x="2.7" y="43.70" width="3" height="1.2" fill="#9a9a9a" opacity="0.7"/>
<rect x="43.10" y="53.19" width="12" height="1.3" fill="#9a9a9a" opacity="0.65"/>
<rect x="2.7" y="50.05" width="3" height="1.2" fill="#9a9a9a" opacity="0.7"/>
<rect x="63.80" y="53.19" width="12" height="1.3" fill="#9a9a9a" opacity="0.65"/>
<rect x="2.7" y="56.40" width="3" height="1.2" fill="#9a9a9a" opacity="0.7"/>
<rect x="84.50" y="53.19" width="12" height="1.3" fill="#9a9a9a" opacity="0.65"/>
<rect x="24.84" y="37.31" width="55.39" height="1.14" fill="#ffc000" opacity="0.42"/>
<rect x="29.81" y="37.44" width="9.27" height="13.46" fill="#70ad47" opacity="0.42"/>
<rect x="65.08" y="37.44" width="15.15" height="13.46" fill="#70ad47" opacity="0.42"/>
<rect x="30.47" y="39.22" width="8.03" height="10.67" fill="#4472c4" opacity="0.28"/>
<rect x="65.66" y="39.22" width="13.91" height="10.67" fill="#4472c4" opacity="0.28"/>
<rect x="30.88" y="39.98" width="7.45" height="1.78" fill="#f1975a" opacity="0.50"/>
<rect x="65.66" y="39.98" width="13.91" height="1.78" fill="#f1975a" opacity="0.50"/>
<rect x="32.54" y="41.76" width="4.14" height="2.54" fill="#ffffff" opacity="0.28"/>
<rect x="68.14" y="41.76" width="9.11" height="2.54" fill="#ffffff" opacity="0.28"/>
<rect x="54.07" y="37.95" width="0.83" height="12.70" fill="#b7b7b7" opacity="0.40"/>
<rect x="59.04" y="37.95" width="0.83" height="12.70" fill="#b7b7b7" opacity="0.40"/>
<rect x="24.84" y="44.30" width="55.39" height="1.52" fill="#255e91" opacity="0.47"/>
<rect x="24.84" y="45.82" width="55.39" height="1.02" fill="#43682b" opacity="0.45"/>
<rect x="24.84" y="47.09" width="55.39" height="1.02" fill="#335aa1" opacity="0.45"/>
<rect x="24.84" y="48.11" width="55.39" height="1.02" fill="#9e480e" opacity="0.30"/>
<rect x="24.84" y="48.87" width="55.39" height="1.78" fill="#5b9bd5" opacity="0.38"/>
<rect x="24.84" y="49.89" width="55.39" height="1.02" fill="#70ad47" opacity="0.35"/>
<polyline points="30.88,42.27 32.54,45.57 35.85,43.79 38.34,42.52" fill="none" stroke="#264478" stroke-width="1.2" opacity="0.50"/>
<polyline points="65.66,42.27 68.14,43.03 72.28,45.82 77.25,42.78 79.57,42.52" fill="none" stroke="#264478" stroke-width="1.2" opacity="0.50"/>
<rect x="31.71" y="47.35" width="5.80" height="2.54" fill="#bf9000" opacity="0.40"/>
<rect x="66.49" y="47.35" width="12.42" height="2.54" fill="#bf9000" opacity="0.40"/>
<rect x="29.81" y="37.44" width="2.07" height="13.46" fill="#2f5597" opacity="0.50"/>
<rect x="49.51" y="37.44" width="2.07" height="13.46" fill="#2f5597" opacity="0.50"/>
<rect x="65.08" y="37.44" width="2.07" height="13.46" fill="#2f5597" opacity="0.50"/>
<rect x="38.50" y="41.76" width="0.83" height="9.14" fill="#2f5597" opacity="0.45"/>
<rect x="31.30" y="50.90" width="1.24" height="3.05" fill="#ffc000" opacity="0.45"/></g></svg>
<svg class="a" style="left:764px;top:94px" width="100" height="60" viewBox="0 0 100 60"><g filter="url(#tb)"><defs><radialGradient id="lg"><stop offset="0" stop-color="#fbfbfb"/><stop offset="1" stop-color="#e9e9e9"/></radialGradient></defs><rect x="0.25" y="0.25" width="99.5" height="59.5" fill="url(#lg)" stroke="#d0d0d0" stroke-width="0.5"/><rect x="36" y="3.6" width="28" height="2.6" fill="#777" opacity="0.6"/><rect x="16.00" y="10.80" width="6.2" height="1.6" fill="#4472c4" opacity="0.35"/>
<rect x="22.50" y="10.60" width="6" height="2" fill="#6f6f6f" opacity="0.24"/>
<rect x="29.80" y="10.80" width="6.2" height="1.6" fill="#ed7d31" opacity="0.35"/>
<rect x="36.30" y="10.60" width="6" height="2" fill="#6f6f6f" opacity="0.24"/>
<rect x="43.60" y="10.80" width="6.2" height="1.6" fill="#a5a5a5" opacity="0.35"/>
<rect x="50.10" y="10.60" width="6" height="2" fill="#6f6f6f" opacity="0.24"/>
<rect x="57.40" y="10.80" width="6.2" height="1.6" fill="#ffc000" opacity="0.35"/>
<rect x="63.90" y="10.60" width="6" height="2" fill="#6f6f6f" opacity="0.24"/>
<rect x="71.20" y="10.80" width="6.2" height="1.6" fill="#5b9bd5" opacity="0.35"/>
<rect x="77.70" y="10.60" width="6" height="2" fill="#6f6f6f" opacity="0.24"/>
<rect x="16.00" y="15.40" width="6.2" height="1.6" fill="#70ad47" opacity="0.35"/>
<rect x="22.50" y="15.20" width="6" height="2" fill="#6f6f6f" opacity="0.24"/>
<rect x="29.80" y="15.40" width="6.2" height="1.6" fill="#264478" opacity="0.35"/>
<rect x="36.30" y="15.20" width="6" height="2" fill="#6f6f6f" opacity="0.24"/>
<rect x="43.60" y="15.40" width="6.2" height="1.6" fill="#9e480e" opacity="0.35"/>
<rect x="50.10" y="15.20" width="6" height="2" fill="#6f6f6f" opacity="0.24"/>
<rect x="57.40" y="15.40" width="6.2" height="1.6" fill="#636363" opacity="0.35"/>
<rect x="63.90" y="15.20" width="6" height="2" fill="#6f6f6f" opacity="0.24"/>
<rect x="71.20" y="15.40" width="6.2" height="1.6" fill="#997300" opacity="0.35"/>
<rect x="77.70" y="15.20" width="6" height="2" fill="#6f6f6f" opacity="0.24"/>
<rect x="16.00" y="20.00" width="6.2" height="1.6" fill="#255e91" opacity="0.35"/>
<rect x="22.50" y="19.80" width="6" height="2" fill="#6f6f6f" opacity="0.24"/>
<rect x="29.80" y="20.00" width="6.2" height="1.6" fill="#43682b" opacity="0.35"/>
<rect x="36.30" y="19.80" width="6" height="2" fill="#6f6f6f" opacity="0.24"/>
<rect x="43.60" y="20.00" width="6.2" height="1.6" fill="#698ed0" opacity="0.35"/>
<rect x="50.10" y="19.80" width="6" height="2" fill="#6f6f6f" opacity="0.24"/>
<rect x="57.40" y="20.00" width="6.2" height="1.6" fill="#f1975a" opacity="0.35"/>
<rect x="63.90" y="19.80" width="6" height="2" fill="#6f6f6f" opacity="0.24"/>
<rect x="71.20" y="20.00" width="6.2" height="1.6" fill="#b7b7b7" opacity="0.35"/>
<rect x="77.70" y="19.80" width="6" height="2" fill="#6f6f6f" opacity="0.24"/>
<rect x="16.00" y="24.60" width="6.2" height="1.6" fill="#ffcd33" opacity="0.35"/>
<rect x="22.50" y="24.40" width="6" height="2" fill="#6f6f6f" opacity="0.24"/>
<rect x="29.80" y="24.60" width="6.2" height="1.6" fill="#7cafdd" opacity="0.35"/>
<rect x="36.30" y="24.40" width="6" height="2" fill="#6f6f6f" opacity="0.24"/>
<rect x="43.60" y="24.60" width="6.2" height="1.6" fill="#8cc168" opacity="0.35"/>
<rect x="50.10" y="24.40" width="6" height="2" fill="#6f6f6f" opacity="0.24"/>
<rect x="57.40" y="24.60" width="6.2" height="1.6" fill="#335aa1" opacity="0.35"/>
<rect x="63.90" y="24.40" width="6" height="2" fill="#6f6f6f" opacity="0.24"/><line x1="8" y1="30.30" x2="90.9" y2="30.30" stroke="#d9d9d9" stroke-width="0.5"/>
<line x1="8.00" y1="30.3" x2="8.00" y2="57.0" stroke="#d9d9d9" stroke-width="0.5"/>
<line x1="8" y1="36.98" x2="90.9" y2="36.98" stroke="#d9d9d9" stroke-width="0.5"/>
<line x1="28.73" y1="30.3" x2="28.73" y2="57.0" stroke="#d9d9d9" stroke-width="0.5"/>
<line x1="8" y1="43.65" x2="90.9" y2="43.65" stroke="#d9d9d9" stroke-width="0.5"/>
<line x1="49.45" y1="30.3" x2="49.45" y2="57.0" stroke="#d9d9d9" stroke-width="0.5"/>
<line x1="8" y1="50.33" x2="90.9" y2="50.33" stroke="#d9d9d9" stroke-width="0.5"/>
<line x1="70.18" y1="30.3" x2="70.18" y2="57.0" stroke="#d9d9d9" stroke-width="0.5"/>
<line x1="8" y1="57.00" x2="90.9" y2="57.00" stroke="#d9d9d9" stroke-width="0.5"/>
<line x1="90.90" y1="30.3" x2="90.90" y2="57.0" stroke="#d9d9d9" stroke-width="0.5"/>
<rect x="3" y="29.70" width="3" height="1.2" fill="#9a9a9a" opacity="0.7"/>
<rect x="2.00" y="53.00" width="12" height="1.3" fill="#9a9a9a" opacity="0.65"/>
<rect x="3" y="36.38" width="3" height="1.2" fill="#9a9a9a" opacity="0.7"/>
<rect x="22.73" y="53.00" width="12" height="1.3" fill="#9a9a9a" opacity="0.65"/>
<rect x="3" y="43.05" width="3" height="1.2" fill="#9a9a9a" opacity="0.7"/>
<rect x="43.45" y="53.00" width="12" height="1.3" fill="#9a9a9a" opacity="0.65"/>
<rect x="3" y="49.73" width="3" height="1.2" fill="#9a9a9a" opacity="0.7"/>
<rect x="64.18" y="53.00" width="12" height="1.3" fill="#9a9a9a" opacity="0.65"/>
<rect x="3" y="56.40" width="3" height="1.2" fill="#9a9a9a" opacity="0.7"/>
<rect x="84.90" y="53.00" width="12" height="1.3" fill="#9a9a9a" opacity="0.65"/>
<rect x="25.16" y="36.31" width="55.46" height="1.20" fill="#ffc000" opacity="0.42"/>
<rect x="30.13" y="36.44" width="9.28" height="14.15" fill="#70ad47" opacity="0.42"/>
<rect x="65.45" y="36.44" width="15.17" height="14.15" fill="#70ad47" opacity="0.42"/>
<rect x="30.80" y="38.31" width="8.04" height="11.21" fill="#4472c4" opacity="0.28"/>
<rect x="66.03" y="38.31" width="13.93" height="11.21" fill="#4472c4" opacity="0.28"/>
<rect x="31.21" y="39.11" width="7.46" height="1.87" fill="#f1975a" opacity="0.50"/>
<rect x="66.03" y="39.11" width="13.93" height="1.87" fill="#f1975a" opacity="0.50"/>
<rect x="32.87" y="40.98" width="4.14" height="2.67" fill="#ffffff" opacity="0.28"/>
<rect x="68.52" y="40.98" width="9.12" height="2.67" fill="#ffffff" opacity="0.28"/>
<rect x="54.42" y="36.98" width="0.83" height="13.35" fill="#b7b7b7" opacity="0.40"/>
<rect x="59.40" y="36.98" width="0.83" height="13.35" fill="#b7b7b7" opacity="0.40"/>
<rect x="25.16" y="43.65" width="55.46" height="1.60" fill="#255e91" opacity="0.47"/>
<rect x="25.16" y="45.25" width="55.46" height="1.07" fill="#43682b" opacity="0.45"/>
<rect x="25.16" y="46.59" width="55.46" height="1.07" fill="#335aa1" opacity="0.45"/>
<rect x="25.16" y="47.66" width="55.46" height="1.07" fill="#9e480e" opacity="0.30"/>
<rect x="25.16" y="48.46" width="55.46" height="1.87" fill="#5b9bd5" opacity="0.38"/>
<rect x="25.16" y="49.52" width="55.46" height="1.07" fill="#70ad47" opacity="0.35"/>
<polyline points="31.21,41.51 32.87,44.98 36.19,43.12 38.67,41.78" fill="none" stroke="#264478" stroke-width="1.2" opacity="0.50"/>
<polyline points="66.03,41.51 68.52,42.31 72.66,45.25 77.64,42.05 79.96,41.78" fill="none" stroke="#264478" stroke-width="1.2" opacity="0.50"/>
<rect x="32.04" y="46.85" width="5.80" height="2.67" fill="#bf9000" opacity="0.40"/>
<rect x="66.86" y="46.85" width="12.44" height="2.67" fill="#bf9000" opacity="0.40"/>
<rect x="30.13" y="36.44" width="2.07" height="14.15" fill="#2f5597" opacity="0.50"/>
<rect x="49.86" y="36.44" width="2.07" height="14.15" fill="#2f5597" opacity="0.50"/>
<rect x="65.45" y="36.44" width="2.07" height="14.15" fill="#2f5597" opacity="0.50"/>
<rect x="38.84" y="40.98" width="0.83" height="9.61" fill="#2f5597" opacity="0.45"/>
<rect x="31.63" y="50.59" width="1.24" height="3.20" fill="#ffc000" opacity="0.45"/></g></svg>
<svg class="a" style="left:874px;top:94px" width="100" height="60" viewBox="0 0 100 60"><g filter="url(#tb)"><rect width="100" height="60" fill="#404040"/><rect x="36" y="3.8" width="28" height="2.4" fill="#ddd" opacity="0.6"/><rect x="16.00" y="10.30" width="6.2" height="1.6" fill="#4472c4" opacity="0.90"/>
<rect x="22.50" y="10.10" width="6" height="2" fill="#d0d0d0" opacity="0.63"/>
<rect x="29.80" y="10.30" width="6.2" height="1.6" fill="#ed7d31" opacity="0.90"/>
<rect x="36.30" y="10.10" width="6" height="2" fill="#d0d0d0" opacity="0.63"/>
<rect x="43.60" y="10.30" width="6.2" height="1.6" fill="#a5a5a5" opacity="0.90"/>
<rect x="50.10" y="10.10" width="6" height="2" fill="#d0d0d0" opacity="0.63"/>
<rect x="57.40" y="10.30" width="6.2" height="1.6" fill="#ffc000" opacity="0.90"/>
<rect x="63.90" y="10.10" width="6" height="2" fill="#d0d0d0" opacity="0.63"/>
<rect x="71.20" y="10.30" width="6.2" height="1.6" fill="#5b9bd5" opacity="0.90"/>
<rect x="77.70" y="10.10" width="6" height="2" fill="#d0d0d0" opacity="0.63"/>
<rect x="16.00" y="15.00" width="6.2" height="1.6" fill="#70ad47" opacity="0.90"/>
<rect x="22.50" y="14.80" width="6" height="2" fill="#d0d0d0" opacity="0.63"/>
<rect x="29.80" y="15.00" width="6.2" height="1.6" fill="#264478" opacity="0.90"/>
<rect x="36.30" y="14.80" width="6" height="2" fill="#d0d0d0" opacity="0.63"/>
<rect x="43.60" y="15.00" width="6.2" height="1.6" fill="#9e480e" opacity="0.90"/>
<rect x="50.10" y="14.80" width="6" height="2" fill="#d0d0d0" opacity="0.63"/>
<rect x="57.40" y="15.00" width="6.2" height="1.6" fill="#636363" opacity="0.90"/>
<rect x="63.90" y="14.80" width="6" height="2" fill="#d0d0d0" opacity="0.63"/>
<rect x="71.20" y="15.00" width="6.2" height="1.6" fill="#997300" opacity="0.90"/>
<rect x="77.70" y="14.80" width="6" height="2" fill="#d0d0d0" opacity="0.63"/>
<rect x="16.00" y="19.70" width="6.2" height="1.6" fill="#255e91" opacity="0.90"/>
<rect x="22.50" y="19.50" width="6" height="2" fill="#d0d0d0" opacity="0.63"/>
<rect x="29.80" y="19.70" width="6.2" height="1.6" fill="#43682b" opacity="0.90"/>
<rect x="36.30" y="19.50" width="6" height="2" fill="#d0d0d0" opacity="0.63"/>
<rect x="43.60" y="19.70" width="6.2" height="1.6" fill="#698ed0" opacity="0.90"/>
<rect x="50.10" y="19.50" width="6" height="2" fill="#d0d0d0" opacity="0.63"/>
<rect x="57.40" y="19.70" width="6.2" height="1.6" fill="#f1975a" opacity="0.90"/>
<rect x="63.90" y="19.50" width="6" height="2" fill="#d0d0d0" opacity="0.63"/>
<rect x="71.20" y="19.70" width="6.2" height="1.6" fill="#b7b7b7" opacity="0.90"/>
<rect x="77.70" y="19.50" width="6" height="2" fill="#d0d0d0" opacity="0.63"/>
<rect x="16.00" y="24.40" width="6.2" height="1.6" fill="#ffcd33" opacity="0.90"/>
<rect x="22.50" y="24.20" width="6" height="2" fill="#d0d0d0" opacity="0.63"/>
<rect x="29.80" y="24.40" width="6.2" height="1.6" fill="#7cafdd" opacity="0.90"/>
<rect x="36.30" y="24.20" width="6" height="2" fill="#d0d0d0" opacity="0.63"/>
<rect x="43.60" y="24.40" width="6.2" height="1.6" fill="#8cc168" opacity="0.90"/>
<rect x="50.10" y="24.20" width="6" height="2" fill="#d0d0d0" opacity="0.63"/>
<rect x="57.40" y="24.40" width="6.2" height="1.6" fill="#335aa1" opacity="0.90"/>
<rect x="63.90" y="24.20" width="6" height="2" fill="#d0d0d0" opacity="0.63"/><line x1="7.3" y1="30.40" x2="90.3" y2="30.40" stroke="#6a6a6a" stroke-width="0.5"/>
<line x1="7.30" y1="30.4" x2="7.30" y2="57.3" stroke="#6a6a6a" stroke-width="0.5"/>
<line x1="7.3" y1="37.12" x2="90.3" y2="37.12" stroke="#6a6a6a" stroke-width="0.5"/>
<line x1="28.05" y1="30.4" x2="28.05" y2="57.3" stroke="#6a6a6a" stroke-width="0.5"/>
<line x1="7.3" y1="43.85" x2="90.3" y2="43.85" stroke="#6a6a6a" stroke-width="0.5"/>
<line x1="48.80" y1="30.4" x2="48.80" y2="57.3" stroke="#6a6a6a" stroke-width="0.5"/>
<line x1="7.3" y1="50.57" x2="90.3" y2="50.57" stroke="#6a6a6a" stroke-width="0.5"/>
<line x1="69.55" y1="30.4" x2="69.55" y2="57.3" stroke="#6a6a6a" stroke-width="0.5"/>
<line x1="7.3" y1="57.30" x2="90.3" y2="57.30" stroke="#6a6a6a" stroke-width="0.5"/>
<line x1="90.30" y1="30.4" x2="90.30" y2="57.3" stroke="#6a6a6a" stroke-width="0.5"/>
<rect x="2.3" y="29.80" width="3" height="1.2" fill="#999" opacity="0.7"/>
<rect x="1.30" y="53.27" width="12" height="1.3" fill="#999" opacity="0.65"/>
<rect x="2.3" y="36.52" width="3" height="1.2" fill="#999" opacity="0.7"/>
<rect x="22.05" y="53.27" width="12" height="1.3" fill="#999" opacity="0.65"/>
<rect x="2.3" y="43.25" width="3" height="1.2" fill="#999" opacity="0.7"/>
<rect x="42.80" y="53.27" width="12" height="1.3" fill="#999" opacity="0.65"/>
<rect x="2.3" y="49.97" width="3" height="1.2" fill="#999" opacity="0.7"/>
<rect x="63.55" y="53.27" width="12" height="1.3" fill="#999" opacity="0.65"/>
<rect x="2.3" y="56.70" width="3" height="1.2" fill="#999" opacity="0.7"/>
<rect x="84.30" y="53.27" width="12" height="1.3" fill="#999" opacity="0.65"/>
<rect x="24.48" y="36.45" width="55.53" height="1.21" fill="#ffc000" opacity="0.85"/>
<rect x="29.46" y="36.59" width="9.30" height="14.26" fill="#70ad47" opacity="0.85"/>
<rect x="64.82" y="36.59" width="15.19" height="14.26" fill="#70ad47" opacity="0.85"/>
<rect x="30.13" y="38.47" width="8.05" height="11.30" fill="#4472c4" opacity="0.55"/>
<rect x="65.40" y="38.47" width="13.94" height="11.30" fill="#4472c4" opacity="0.55"/>
<rect x="30.54" y="39.28" width="7.47" height="1.88" fill="#f1975a" opacity="1.00"/>
<rect x="65.40" y="39.28" width="13.94" height="1.88" fill="#f1975a" opacity="1.00"/>
<rect x="32.20" y="41.16" width="4.15" height="2.69" fill="#606060" opacity="0.55"/>
<rect x="67.89" y="41.16" width="9.13" height="2.69" fill="#606060" opacity="0.55"/>
<rect x="53.78" y="37.12" width="0.83" height="13.45" fill="#b7b7b7" opacity="0.80"/>
<rect x="58.76" y="37.12" width="0.83" height="13.45" fill="#b7b7b7" opacity="0.80"/>
<rect x="24.48" y="43.85" width="55.53" height="1.61" fill="#255e91" opacity="0.95"/>
<rect x="24.48" y="45.46" width="55.53" height="1.08" fill="#43682b" opacity="0.90"/>
<rect x="24.48" y="46.81" width="55.53" height="1.08" fill="#335aa1" opacity="0.90"/>
<rect x="24.48" y="47.88" width="55.53" height="1.08" fill="#9e480e" opacity="0.60"/>
<rect x="24.48" y="48.69" width="55.53" height="1.88" fill="#5b9bd5" opacity="0.75"/>
<rect x="24.48" y="49.77" width="55.53" height="1.08" fill="#70ad47" opacity="0.70"/>
<polyline points="30.54,41.70 32.20,45.20 35.52,43.31 38.01,41.97" fill="none" stroke="#264478" stroke-width="1.2" opacity="1.00"/>
<polyline points="65.40,41.70 67.89,42.50 72.04,45.46 77.02,42.24 79.34,41.97" fill="none" stroke="#264478" stroke-width="1.2" opacity="1.00"/>
<rect x="31.37" y="47.08" width="5.81" height="2.69" fill="#bf9000" opacity="0.80"/>
<rect x="66.23" y="47.08" width="12.45" height="2.69" fill="#bf9000" opacity="0.80"/>
<rect x="29.46" y="36.59" width="2.08" height="14.26" fill="#2f5597" opacity="1.00"/>
<rect x="49.21" y="36.59" width="2.08" height="14.26" fill="#2f5597" opacity="1.00"/>
<rect x="64.82" y="36.59" width="2.08" height="14.26" fill="#2f5597" opacity="1.00"/>
<rect x="38.18" y="41.16" width="0.83" height="9.68" fill="#2f5597" opacity="0.90"/>
<rect x="30.95" y="50.84" width="1.25" height="3.23" fill="#ffc000" opacity="0.90"/></g></svg>
<svg class="a" style="left:984px;top:94px" width="100" height="60" viewBox="0 0 100 60"><g filter="url(#tb)"><rect x="0.25" y="0.25" width="99.5" height="59.5" fill="#fff" stroke="#d0d0d0" stroke-width="0.5"/><rect x="38" y="3.8" width="24" height="2.4" fill="#999" opacity="0.5"/><line x1="8.3" y1="10.20" x2="90.8" y2="10.20" stroke="#d9d9d9" stroke-width="0.5"/>
<line x1="8.30" y1="10.2" x2="8.30" y2="32.0" stroke="#d9d9d9" stroke-width="0.5"/>
<line x1="8.3" y1="15.65" x2="90.8" y2="15.65" stroke="#d9d9d9" stroke-width="0.5"/>
<line x1="28.93" y1="10.2" x2="28.93" y2="32.0" stroke="#d9d9d9" stroke-width="0.5"/>
<line x1="8.3" y1="21.10" x2="90.8" y2="21.10" stroke="#d9d9d9" stroke-width="0.5"/>
<line x1="49.55" y1="10.2" x2="49.55" y2="32.0" stroke="#d9d9d9" stroke-width="0.5"/>
<line x1="8.3" y1="26.55" x2="90.8" y2="26.55" stroke="#d9d9d9" stroke-width="0.5"/>
<line x1="70.17" y1="10.2" x2="70.17" y2="32.0" stroke="#d9d9d9" stroke-width="0.5"/>
<line x1="8.3" y1="32.00" x2="90.8" y2="32.00" stroke="#d9d9d9" stroke-width="0.5"/>
<line x1="90.80" y1="10.2" x2="90.80" y2="32.0" stroke="#d9d9d9" stroke-width="0.5"/>
<rect x="3.3000000000000007" y="9.60" width="3" height="1.2" fill="#9a9a9a" opacity="0.7"/>
<rect x="2.30" y="28.73" width="12" height="1.3" fill="#9a9a9a" opacity="0.65"/>
<rect x="3.3000000000000007" y="15.05" width="3" height="1.2" fill="#9a9a9a" opacity="0.7"/>
<rect x="22.93" y="28.73" width="12" height="1.3" fill="#9a9a9a" opacity="0.65"/>
<rect x="3.3000000000000007" y="20.50" width="3" height="1.2" fill="#9a9a9a" opacity="0.7"/>
<rect x="43.55" y="28.73" width="12" height="1.3" fill="#9a9a9a" opacity="0.65"/>
<rect x="3.3000000000000007" y="25.95" width="3" height="1.2" fill="#9a9a9a" opacity="0.7"/>
<rect x="64.17" y="28.73" width="12" height="1.3" fill="#9a9a9a" opacity="0.65"/>
<rect x="3.3000000000000007" y="31.40" width="3" height="1.2" fill="#9a9a9a" opacity="0.7"/>
<rect x="84.80" y="28.73" width="12" height="1.3" fill="#9a9a9a" opacity="0.65"/>
<rect x="25.38" y="15.11" width="55.19" height="0.98" fill="#ffc000" opacity="0.47"/>
<rect x="30.33" y="15.21" width="9.24" height="11.55" fill="#70ad47" opacity="0.47"/>
<rect x="65.47" y="15.21" width="15.10" height="11.55" fill="#70ad47" opacity="0.47"/>
<rect x="30.99" y="16.74" width="8.00" height="9.16" fill="#4472c4" opacity="0.30"/>
<rect x="66.05" y="16.74" width="13.86" height="9.16" fill="#4472c4" opacity="0.30"/>
<rect x="31.40" y="17.39" width="7.42" height="1.53" fill="#f1975a" opacity="0.55"/>
<rect x="66.05" y="17.39" width="13.86" height="1.53" fill="#f1975a" opacity="0.55"/>
<rect x="33.05" y="18.92" width="4.12" height="2.18" fill="#ffffff" opacity="0.30"/>
<rect x="68.53" y="18.92" width="9.07" height="2.18" fill="#ffffff" opacity="0.30"/>
<rect x="54.50" y="15.65" width="0.82" height="10.90" fill="#b7b7b7" opacity="0.44"/>
<rect x="59.45" y="15.65" width="0.83" height="10.90" fill="#b7b7b7" opacity="0.44"/>
<rect x="25.38" y="21.10" width="55.19" height="1.31" fill="#255e91" opacity="0.52"/>
<rect x="25.38" y="22.41" width="55.19" height="0.87" fill="#43682b" opacity="0.50"/>
<rect x="25.38" y="23.50" width="55.19" height="0.87" fill="#335aa1" opacity="0.50"/>
<rect x="25.38" y="24.37" width="55.19" height="0.87" fill="#9e480e" opacity="0.33"/>
<rect x="25.38" y="25.02" width="55.19" height="1.53" fill="#5b9bd5" opacity="0.41"/>
<rect x="25.38" y="25.90" width="55.19" height="0.87" fill="#70ad47" opacity="0.39"/>
<polyline points="31.40,19.36 33.05,22.19 36.35,20.66 38.83,19.57" fill="none" stroke="#264478" stroke-width="1.2" opacity="0.55"/>
<polyline points="66.05,19.36 68.53,20.01 72.65,22.41 77.60,19.79 79.91,19.57" fill="none" stroke="#264478" stroke-width="1.2" opacity="0.55"/>
<rect x="32.22" y="23.72" width="5.78" height="2.18" fill="#bf9000" opacity="0.44"/>
<rect x="66.88" y="23.72" width="12.38" height="2.18" fill="#bf9000" opacity="0.44"/>
<rect x="30.33" y="15.21" width="2.06" height="11.55" fill="#2f5597" opacity="0.55"/>
<rect x="49.96" y="15.21" width="2.06" height="11.55" fill="#2f5597" opacity="0.55"/>
<rect x="65.47" y="15.21" width="2.06" height="11.55" fill="#2f5597" opacity="0.55"/>
<rect x="38.99" y="18.92" width="0.83" height="7.85" fill="#2f5597" opacity="0.50"/>
<rect x="31.81" y="26.77" width="1.24" height="2.62" fill="#ffc000" opacity="0.50"/><rect x="16.00" y="40.20" width="6.2" height="1.6" fill="#4472c4" opacity="0.35"/>
<rect x="22.50" y="40.00" width="6" height="2" fill="#6f6f6f" opacity="0.24"/>
<rect x="29.80" y="40.20" width="6.2" height="1.6" fill="#ed7d31" opacity="0.35"/>
<rect x="36.30" y="40.00" width="6" height="2" fill="#6f6f6f" opacity="0.24"/>
<rect x="43.60" y="40.20" width="6.2" height="1.6" fill="#a5a5a5" opacity="0.35"/>
<rect x="50.10" y="40.00" width="6" height="2" fill="#6f6f6f" opacity="0.24"/>
<rect x="57.40" y="40.20" width="6.2" height="1.6" fill="#ffc000" opacity="0.35"/>
<rect x="63.90" y="40.00" width="6" height="2" fill="#6f6f6f" opacity="0.24"/>
<rect x="71.20" y="40.20" width="6.2" height="1.6" fill="#5b9bd5" opacity="0.35"/>
<rect x="77.70" y="40.00" width="6" height="2" fill="#6f6f6f" opacity="0.24"/>
<rect x="16.00" y="45.20" width="6.2" height="1.6" fill="#70ad47" opacity="0.35"/>
<rect x="22.50" y="45.00" width="6" height="2" fill="#6f6f6f" opacity="0.24"/>
<rect x="29.80" y="45.20" width="6.2" height="1.6" fill="#264478" opacity="0.35"/>
<rect x="36.30" y="45.00" width="6" height="2" fill="#6f6f6f" opacity="0.24"/>
<rect x="43.60" y="45.20" width="6.2" height="1.6" fill="#9e480e" opacity="0.35"/>
<rect x="50.10" y="45.00" width="6" height="2" fill="#6f6f6f" opacity="0.24"/>
<rect x="57.40" y="45.20" width="6.2" height="1.6" fill="#636363" opacity="0.35"/>
<rect x="63.90" y="45.00" width="6" height="2" fill="#6f6f6f" opacity="0.24"/>
<rect x="71.20" y="45.20" width="6.2" height="1.6" fill="#997300" opacity="0.35"/>
<rect x="77.70" y="45.00" width="6" height="2" fill="#6f6f6f" opacity="0.24"/>
<rect x="16.00" y="50.20" width="6.2" height="1.6" fill="#255e91" opacity="0.35"/>
<rect x="22.50" y="50.00" width="6" height="2" fill="#6f6f6f" opacity="0.24"/>
<rect x="29.80" y="50.20" width="6.2" height="1.6" fill="#43682b" opacity="0.35"/>
<rect x="36.30" y="50.00" width="6" height="2" fill="#6f6f6f" opacity="0.24"/>
<rect x="43.60" y="50.20" width="6.2" height="1.6" fill="#698ed0" opacity="0.35"/>
<rect x="50.10" y="50.00" width="6" height="2" fill="#6f6f6f" opacity="0.24"/>
<rect x="57.40" y="50.20" width="6.2" height="1.6" fill="#f1975a" opacity="0.35"/>
<rect x="63.90" y="50.00" width="6" height="2" fill="#6f6f6f" opacity="0.24"/>
<rect x="71.20" y="50.20" width="6.2" height="1.6" fill="#b7b7b7" opacity="0.35"/>
<rect x="77.70" y="50.00" width="6" height="2" fill="#6f6f6f" opacity="0.24"/>
<rect x="16.00" y="55.20" width="6.2" height="1.6" fill="#ffcd33" opacity="0.35"/>
<rect x="22.50" y="55.00" width="6" height="2" fill="#6f6f6f" opacity="0.24"/>
<rect x="29.80" y="55.20" width="6.2" height="1.6" fill="#7cafdd" opacity="0.35"/>
<rect x="36.30" y="55.00" width="6" height="2" fill="#6f6f6f" opacity="0.24"/>
<rect x="43.60" y="55.20" width="6.2" height="1.6" fill="#8cc168" opacity="0.35"/>
<rect x="50.10" y="55.00" width="6" height="2" fill="#6f6f6f" opacity="0.24"/>
<rect x="57.40" y="55.20" width="6.2" height="1.6" fill="#335aa1" opacity="0.35"/>
<rect x="63.90" y="55.00" width="6" height="2" fill="#6f6f6f" opacity="0.24"/></g></svg>
<svg class="a" style="left:1094px;top:94px" width="100" height="60" viewBox="0 0 100 60"><g filter="url(#tb)"><defs><radialGradient id="dg"><stop offset="0" stop-color="#505050"/><stop offset="1" stop-color="#222"/></radialGradient></defs><rect width="100" height="60" fill="url(#dg)"/><rect x="34" y="3.2" width="32" height="3" fill="#fff" opacity="0.85"/><line x1="8.2" y1="10.40" x2="90.0" y2="10.40" stroke="#6a6a6a" stroke-width="0.5"/>
<line x1="8.20" y1="10.4" x2="8.20" y2="32.0" stroke="#6a6a6a" stroke-width="0.5"/>
<line x1="8.2" y1="15.80" x2="90.0" y2="15.80" stroke="#6a6a6a" stroke-width="0.5"/>
<line x1="28.65" y1="10.4" x2="28.65" y2="32.0" stroke="#6a6a6a" stroke-width="0.5"/>
<line x1="8.2" y1="21.20" x2="90.0" y2="21.20" stroke="#6a6a6a" stroke-width="0.5"/>
<line x1="49.10" y1="10.4" x2="49.10" y2="32.0" stroke="#6a6a6a" stroke-width="0.5"/>
<line x1="8.2" y1="26.60" x2="90.0" y2="26.60" stroke="#6a6a6a" stroke-width="0.5"/>
<line x1="69.55" y1="10.4" x2="69.55" y2="32.0" stroke="#6a6a6a" stroke-width="0.5"/>
<line x1="8.2" y1="32.00" x2="90.0" y2="32.00" stroke="#6a6a6a" stroke-width="0.5"/>
<line x1="90.00" y1="10.4" x2="90.00" y2="32.0" stroke="#6a6a6a" stroke-width="0.5"/>
<rect x="3.1999999999999993" y="9.80" width="3" height="1.2" fill="#999" opacity="0.7"/>
<rect x="2.20" y="28.76" width="12" height="1.3" fill="#999" opacity="0.65"/>
<rect x="3.1999999999999993" y="15.20" width="3" height="1.2" fill="#999" opacity="0.7"/>
<rect x="22.65" y="28.76" width="12" height="1.3" fill="#999" opacity="0.65"/>
<rect x="3.1999999999999993" y="20.60" width="3" height="1.2" fill="#999" opacity="0.7"/>
<rect x="43.10" y="28.76" width="12" height="1.3" fill="#999" opacity="0.65"/>
<rect x="3.1999999999999993" y="26.00" width="3" height="1.2" fill="#999" opacity="0.7"/>
<rect x="63.55" y="28.76" width="12" height="1.3" fill="#999" opacity="0.65"/>
<rect x="3.1999999999999993" y="31.40" width="3" height="1.2" fill="#999" opacity="0.7"/>
<rect x="84.00" y="28.76" width="12" height="1.3" fill="#999" opacity="0.65"/>
<rect x="25.13" y="15.26" width="54.72" height="0.97" fill="#ffc000" opacity="0.85"/>
<rect x="30.04" y="15.37" width="9.16" height="11.45" fill="#70ad47" opacity="0.85"/>
<rect x="64.89" y="15.37" width="14.97" height="11.45" fill="#70ad47" opacity="0.85"/>
<rect x="30.70" y="16.88" width="7.93" height="9.07" fill="#4472c4" opacity="0.55"/>
<rect x="65.46" y="16.88" width="13.74" height="9.07" fill="#4472c4" opacity="0.55"/>
<rect x="31.10" y="17.53" width="7.36" height="1.51" fill="#f1975a" opacity="1.00"/>
<rect x="65.46" y="17.53" width="13.74" height="1.51" fill="#f1975a" opacity="1.00"/>
<rect x="32.74" y="19.04" width="4.09" height="2.16" fill="#606060" opacity="0.55"/>
<rect x="67.91" y="19.04" width="9.00" height="2.16" fill="#606060" opacity="0.55"/>
<rect x="54.01" y="15.80" width="0.82" height="10.80" fill="#b7b7b7" opacity="0.80"/>
<rect x="58.92" y="15.80" width="0.82" height="10.80" fill="#b7b7b7" opacity="0.80"/>
<rect x="25.13" y="21.20" width="54.72" height="1.30" fill="#255e91" opacity="0.95"/>
<rect x="25.13" y="22.50" width="54.72" height="0.86" fill="#43682b" opacity="0.90"/>
<rect x="25.13" y="23.58" width="54.72" height="0.86" fill="#335aa1" opacity="0.90"/>
<rect x="25.13" y="24.44" width="54.72" height="0.86" fill="#9e480e" opacity="0.60"/>
<rect x="25.13" y="25.09" width="54.72" height="1.51" fill="#5b9bd5" opacity="0.75"/>
<rect x="25.13" y="25.95" width="54.72" height="0.86" fill="#70ad47" opacity="0.70"/>
<polyline points="31.10,19.47 32.74,22.28 36.01,20.77 38.47,19.69" fill="none" stroke="#264478" stroke-width="1.2" opacity="1.00"/>
<polyline points="65.46,19.47 67.91,20.12 72.00,22.50 76.91,19.90 79.20,19.69" fill="none" stroke="#264478" stroke-width="1.2" opacity="1.00"/>
<rect x="31.92" y="23.79" width="5.73" height="2.16" fill="#bf9000" opacity="0.80"/>
<rect x="66.28" y="23.79" width="12.27" height="2.16" fill="#bf9000" opacity="0.80"/>
<rect x="30.04" y="15.37" width="2.05" height="11.45" fill="#2f5597" opacity="1.00"/>
<rect x="49.51" y="15.37" width="2.05" height="11.45" fill="#2f5597" opacity="1.00"/>
<rect x="64.89" y="15.37" width="2.05" height="11.45" fill="#2f5597" opacity="1.00"/>
<rect x="38.63" y="19.04" width="0.82" height="7.78" fill="#2f5597" opacity="0.90"/>
<rect x="31.51" y="26.82" width="1.23" height="2.59" fill="#ffc000" opacity="0.90"/><rect x="16.00" y="40.20" width="6.2" height="1.6" fill="#4472c4" opacity="0.95"/>
<rect x="22.50" y="40.00" width="6" height="2" fill="#d0d0d0" opacity="0.66"/>
<rect x="29.80" y="40.20" width="6.2" height="1.6" fill="#ed7d31" opacity="0.95"/>
<rect x="36.30" y="40.00" width="6" height="2" fill="#d0d0d0" opacity="0.66"/>
<rect x="43.60" y="40.20" width="6.2" height="1.6" fill="#a5a5a5" opacity="0.95"/>
<rect x="50.10" y="40.00" width="6" height="2" fill="#d0d0d0" opacity="0.66"/>
<rect x="57.40" y="40.20" width="6.2" height="1.6" fill="#ffc000" opacity="0.95"/>
<rect x="63.90" y="40.00" width="6" height="2" fill="#d0d0d0" opacity="0.66"/>
<rect x="71.20" y="40.20" width="6.2" height="1.6" fill="#5b9bd5" opacity="0.95"/>
<rect x="77.70" y="40.00" width="6" height="2" fill="#d0d0d0" opacity="0.66"/>
<rect x="16.00" y="45.20" width="6.2" height="1.6" fill="#70ad47" opacity="0.95"/>
<rect x="22.50" y="45.00" width="6" height="2" fill="#d0d0d0" opacity="0.66"/>
<rect x="29.80" y="45.20" width="6.2" height="1.6" fill="#264478" opacity="0.95"/>
<rect x="36.30" y="45.00" width="6" height="2" fill="#d0d0d0" opacity="0.66"/>
<rect x="43.60" y="45.20" width="6.2" height="1.6" fill="#9e480e" opacity="0.95"/>
<rect x="50.10" y="45.00" width="6" height="2" fill="#d0d0d0" opacity="0.66"/>
<rect x="57.40" y="45.20" width="6.2" height="1.6" fill="#636363" opacity="0.95"/>
<rect x="63.90" y="45.00" width="6" height="2" fill="#d0d0d0" opacity="0.66"/>
<rect x="71.20" y="45.20" width="6.2" height="1.6" fill="#997300" opacity="0.95"/>
<rect x="77.70" y="45.00" width="6" height="2" fill="#d0d0d0" opacity="0.66"/>
<rect x="16.00" y="50.20" width="6.2" height="1.6" fill="#255e91" opacity="0.95"/>
<rect x="22.50" y="50.00" width="6" height="2" fill="#d0d0d0" opacity="0.66"/>
<rect x="29.80" y="50.20" width="6.2" height="1.6" fill="#43682b" opacity="0.95"/>
<rect x="36.30" y="50.00" width="6" height="2" fill="#d0d0d0" opacity="0.66"/>
<rect x="43.60" y="50.20" width="6.2" height="1.6" fill="#698ed0" opacity="0.95"/>
<rect x="50.10" y="50.00" width="6" height="2" fill="#d0d0d0" opacity="0.66"/>
<rect x="57.40" y="50.20" width="6.2" height="1.6" fill="#f1975a" opacity="0.95"/>
<rect x="63.90" y="50.00" width="6" height="2" fill="#d0d0d0" opacity="0.66"/>
<rect x="71.20" y="50.20" width="6.2" height="1.6" fill="#b7b7b7" opacity="0.95"/>
<rect x="77.70" y="50.00" width="6" height="2" fill="#d0d0d0" opacity="0.66"/>
<rect x="16.00" y="55.20" width="6.2" height="1.6" fill="#ffcd33" opacity="0.95"/>
<rect x="22.50" y="55.00" width="6" height="2" fill="#d0d0d0" opacity="0.66"/>
<rect x="29.80" y="55.20" width="6.2" height="1.6" fill="#7cafdd" opacity="0.95"/>
<rect x="36.30" y="55.00" width="6" height="2" fill="#d0d0d0" opacity="0.66"/>
<rect x="43.60" y="55.20" width="6.2" height="1.6" fill="#8cc168" opacity="0.95"/>
<rect x="50.10" y="55.00" width="6" height="2" fill="#d0d0d0" opacity="0.66"/>
<rect x="57.40" y="55.20" width="6.2" height="1.6" fill="#335aa1" opacity="0.95"/>
<rect x="63.90" y="55.00" width="6" height="2" fill="#d0d0d0" opacity="0.66"/></g></svg>
<div id="fbar" class="a"></div>
<div class="a" style="left:4px;top:207px;width:127px;height:30px;background:#fff;border:1px solid #c6c6c6"></div>
<div class="t" style="left:11.5px;top:214px;font-size:15.9px;color:#444">Diagramm 1</div>
<svg class="a" style="left:110px;top:215px" width="16" height="12"><path d="M5 4.5h7l-3.5 4z" fill="#666"/></svg>
<svg class="a" style="left:145px;top:210px" width="10" height="24"><circle cx="4.5" cy="5" r="1.5" fill="#999"/><circle cx="4.5" cy="12" r="1.5" fill="#999"/><circle cx="4.5" cy="19" r="1.5" fill="#999"/></svg>
<div class="a" style="left:168px;top:207px;width:137px;height:30px;background:#fff;border:1px solid #c6c6c6"></div>
<svg class="a" style="left:168px;top:207px" width="137" height="30">
<path d="M15.5 9.5l13 13M28.5 9.5l-13 13" stroke="#b0b0b0" stroke-width="1.6"/>
<path d="M60 16l5 6 11-12" fill="none" stroke="#c4c4c4" stroke-width="2.4"/>
</svg>
<div class="t" style="left:272px;top:212px;font-size:18px;color:#555;font-family:'Liberation Serif',serif;font-style:italic;font-weight:bold">f<span style="font-size:14px">x</span></div>
<div class="a" style="left:308px;top:207px;width:1387px;height:30px;background:#fff;border:1px solid #c6c6c6;border-right:none"></div>

<div class="a" style="left:0;top:247px;width:1695px;height:30px;background:#e6e6e6"></div>
<div class="a" style="left:0;top:276px;width:1695px;height:1px;background:#a0a0a0"></div>
<div class="a" style="left:0;top:277px;width:37px;height:1036px;background:#e6e6e6"></div>
<div class="a" style="left:37px;top:249px;width:1px;height:1064px;background:#a0a0a0"></div>
<svg class="a" style="left:14px;top:253px" width="21" height="21"><path d="M20 0V20H0z" fill="#b4b4b4"/></svg>
<div class="t ch" style="left:37px;width:120px">A</div>
<div class="a" style="left:157px;top:249px;width:1px;height:27px;background:#c4c4c4"></div>
<div class="t ch" style="left:157px;width:120px">B</div>
<div class="a" style="left:277px;top:249px;width:1px;height:27px;background:#c4c4c4"></div>
<div class="t ch" style="left:277px;width:207px">C</div>
<div class="a" style="left:484px;top:249px;width:1px;height:27px;background:#c4c4c4"></div>
<div class="t ch" style="left:484px;width:120px">D</div>
<div class="a" style="left:604px;top:249px;width:1px;height:27px;background:#c4c4c4"></div>
<div class="t ch" style="left:604px;width:120px">E</div>
<div class="a" style="left:724px;top:249px;width:1px;height:27px;background:#c4c4c4"></div>
<div class="t ch" style="left:724px;width:120px">F</div>
<div class="a" style="left:844px;top:249px;width:1px;height:27px;background:#c4c4c4"></div>
<div class="t ch" style="left:844px;width:120px">G</div>
<div class="a" style="left:964px;top:249px;width:1px;height:27px;background:#c4c4c4"></div>
<div class="t ch" style="left:964px;width:120px">H</div>
<div class="a" style="left:1084px;top:249px;width:1px;height:27px;background:#c4c4c4"></div>
<div class="t ch" style="left:1084px;width:120px">I</div>
<div class="a" style="left:1204px;top:249px;width:1px;height:27px;background:#c4c4c4"></div>
<div class="t ch" style="left:1204px;width:120px">J</div>
<div class="a" style="left:1324px;top:249px;width:1px;height:27px;background:#c4c4c4"></div>
<div class="t ch" style="left:1324px;width:120px">K</div>
<div class="a" style="left:1444px;top:249px;width:1px;height:27px;background:#c4c4c4"></div>
<div class="t ch" style="left:1444px;width:120px">L</div>
<div class="a" style="left:1564px;top:249px;width:1px;height:27px;background:#c4c4c4"></div>
<div class="t ch" style="left:1564px;width:120px">M</div>
<div class="a" style="left:1684px;top:249px;width:1px;height:27px;background:#c4c4c4"></div>
<div class="t ch" style="left:1684px;width:120px">N</div>
<div class="a" style="left:38px;top:277px;width:1657px;height:1036px;background:#fff"></div>
<div class="a" style="left:158px;top:445px;width:1537px;height:28px;background:#f8e9eb"></div>
<div class="a" style="left:38px;top:473px;width:120px;height:840px;background:#efebf6"></div>
<div class="a" style="left:158px;top:473px;width:1537px;height:840px;background:#e8eef8"></div>
<div class="a" style="left:0;top:304px;width:37px;height:1px;background:#bdbdbd"></div>
<div class="a" style="left:38px;top:304px;width:1657px;height:1px;background:#d4d4d4"></div>
<div class="a" style="left:0;top:332px;width:37px;height:1px;background:#bdbdbd"></div>
<div class="a" style="left:38px;top:332px;width:1657px;height:1px;background:#d4d4d4"></div>
<div class="a" style="left:0;top:360px;width:37px;height:1px;background:#bdbdbd"></div>
<div class="a" style="left:38px;top:360px;width:1657px;height:1px;background:#d4d4d4"></div>
<div class="a" style="left:0;top:388px;width:37px;height:1px;background:#bdbdbd"></div>
<div class="a" style="left:38px;top:388px;width:1657px;height:1px;background:#d4d4d4"></div>
<div class="a" style="left:0;top:416px;width:37px;height:1px;background:#bdbdbd"></div>
<div class="a" style="left:38px;top:416px;width:1657px;height:1px;background:#d4d4d4"></div>
<div class="a" style="left:0;top:444px;width:37px;height:1px;background:#bdbdbd"></div>
<div class="a" style="left:38px;top:444px;width:1657px;height:1px;background:#d4d4d4"></div>
<div class="a" style="left:0;top:472px;width:37px;height:1px;background:#bdbdbd"></div>
<div class="a" style="left:0;top:500px;width:37px;height:1px;background:#bdbdbd"></div>
<div class="a" style="left:38px;top:500px;width:1657px;height:1px;background:#cdd1d8"></div>
<div class="a" style="left:0;top:528px;width:37px;height:1px;background:#bdbdbd"></div>
<div class="a" style="left:38px;top:528px;width:1657px;height:1px;background:#cdd1d8"></div>
<div class="a" style="left:0;top:556px;width:37px;height:1px;background:#bdbdbd"></div>
<div class="a" style="left:38px;top:556px;width:1657px;height:1px;background:#cdd1d8"></div>
<div class="a" style="left:0;top:584px;width:37px;height:1px;background:#bdbdbd"></div>
<div class="a" style="left:38px;top:584px;width:1657px;height:1px;background:#cdd1d8"></div>
<div class="a" style="left:0;top:612px;width:37px;height:1px;background:#bdbdbd"></div>
<div class="a" style="left:38px;top:612px;width:1657px;height:1px;background:#cdd1d8"></div>
<div class="a" style="left:0;top:640px;width:37px;height:1px;background:#bdbdbd"></div>
<div class="a" style="left:38px;top:640px;width:1657px;height:1px;background:#cdd1d8"></div>
<div class="a" style="left:0;top:668px;width:37px;height:1px;background:#bdbdbd"></div>
<div class="a" style="left:38px;top:668px;width:1657px;height:1px;background:#cdd1d8"></div>
<div class="a" style="left:0;top:696px;width:37px;height:1px;background:#bdbdbd"></div>
<div class="a" style="left:38px;top:696px;width:1657px;height:1px;background:#cdd1d8"></div>
<div class="a" style="left:0;top:724px;width:37px;height:1px;background:#bdbdbd"></div>
<div class="a" style="left:38px;top:724px;width:1657px;height:1px;background:#cdd1d8"></div>
<div class="a" style="left:0;top:752px;width:37px;height:1px;background:#bdbdbd"></div>
<div class="a" style="left:38px;top:752px;width:1657px;height:1px;background:#cdd1d8"></div>
<div class="a" style="left:0;top:780px;width:37px;height:1px;background:#bdbdbd"></div>
<div class="a" style="left:38px;top:780px;width:1657px;height:1px;background:#cdd1d8"></div>
<div class="a" style="left:0;top:808px;width:37px;height:1px;background:#bdbdbd"></div>
<div class="a" style="left:38px;top:808px;width:1657px;height:1px;background:#cdd1d8"></div>
<div class="a" style="left:0;top:836px;width:37px;height:1px;background:#bdbdbd"></div>
<div class="a" style="left:38px;top:836px;width:1657px;height:1px;background:#cdd1d8"></div>
<div class="a" style="left:0;top:864px;width:37px;height:1px;background:#bdbdbd"></div>
<div class="a" style="left:38px;top:864px;width:1657px;height:1px;background:#cdd1d8"></div>
<div class="a" style="left:0;top:892px;width:37px;height:1px;background:#bdbdbd"></div>
<div class="a" style="left:38px;top:892px;width:1657px;height:1px;background:#cdd1d8"></div>
<div class="a" style="left:0;top:920px;width:37px;height:1px;background:#bdbdbd"></div>
<div class="a" style="left:38px;top:920px;width:1657px;height:1px;background:#cdd1d8"></div>
<div class="a" style="left:0;top:948px;width:37px;height:1px;background:#bdbdbd"></div>
<div class="a" style="left:38px;top:948px;width:1657px;height:1px;background:#cdd1d8"></div>
<div class="a" style="left:0;top:976px;width:37px;height:1px;background:#bdbdbd"></div>
<div class="a" style="left:38px;top:976px;width:1657px;height:1px;background:#cdd1d8"></div>
<div class="a" style="left:0;top:1004px;width:37px;height:1px;background:#bdbdbd"></div>
<div class="a" style="left:38px;top:1004px;width:1657px;height:1px;background:#cdd1d8"></div>
<div class="a" style="left:0;top:1032px;width:37px;height:1px;background:#bdbdbd"></div>
<div class="a" style="left:38px;top:1032px;width:1657px;height:1px;background:#cdd1d8"></div>
<div class="a" style="left:0;top:1060px;width:37px;height:1px;background:#bdbdbd"></div>
<div class="a" style="left:38px;top:1060px;width:1657px;height:1px;background:#cdd1d8"></div>
<div class="a" style="left:0;top:1088px;width:37px;height:1px;background:#bdbdbd"></div>
<div class="a" style="left:38px;top:1088px;width:1657px;height:1px;background:#cdd1d8"></div>
<div class="a" style="left:0;top:1116px;width:37px;height:1px;background:#bdbdbd"></div>
<div class="a" style="left:38px;top:1116px;width:1657px;height:1px;background:#cdd1d8"></div>
<div class="a" style="left:0;top:1144px;width:37px;height:1px;background:#bdbdbd"></div>
<div class="a" style="left:38px;top:1144px;width:1657px;height:1px;background:#cdd1d8"></div>
<div class="a" style="left:0;top:1172px;width:37px;height:1px;background:#bdbdbd"></div>
<div class="a" style="left:38px;top:1172px;width:1657px;height:1px;background:#cdd1d8"></div>
<div class="a" style="left:0;top:1200px;width:37px;height:1px;background:#bdbdbd"></div>
<div class="a" style="left:38px;top:1200px;width:1657px;height:1px;background:#cdd1d8"></div>
<div class="a" style="left:0;top:1228px;width:37px;height:1px;background:#bdbdbd"></div>
<div class="a" style="left:38px;top:1228px;width:1657px;height:1px;background:#cdd1d8"></div>
<div class="a" style="left:0;top:1256px;width:37px;height:1px;background:#bdbdbd"></div>
<div class="a" style="left:38px;top:1256px;width:1657px;height:1px;background:#cdd1d8"></div>
<div class="a" style="left:0;top:1284px;width:37px;height:1px;background:#bdbdbd"></div>
<div class="a" style="left:38px;top:1284px;width:1657px;height:1px;background:#cdd1d8"></div>
<div class="a" style="left:0;top:1312px;width:37px;height:1px;background:#bdbdbd"></div>
<div class="a" style="left:38px;top:1312px;width:1657px;height:1px;background:#cdd1d8"></div>
<div class="a" style="left:157px;top:277px;width:1px;height:168px;background:#d4d4d4"></div>
<div class="a" style="left:157px;top:445px;width:1px;height:28px;background:#dcc8cc"></div>
<div class="a" style="left:157px;top:473px;width:1px;height:840px;background:#cdd1d8"></div>
<div class="a" style="left:277px;top:277px;width:1px;height:168px;background:#d4d4d4"></div>
<div class="a" style="left:277px;top:445px;width:1px;height:28px;background:#dcc8cc"></div>
<div class="a" style="left:277px;top:473px;width:1px;height:840px;background:#cdd1d8"></div>
<div class="a" style="left:484px;top:277px;width:1px;height:168px;background:#d4d4d4"></div>
<div class="a" style="left:484px;top:445px;width:1px;height:28px;background:#dcc8cc"></div>
<div class="a" style="left:484px;top:473px;width:1px;height:840px;background:#cdd1d8"></div>
<div class="a" style="left:604px;top:277px;width:1px;height:168px;background:#d4d4d4"></div>
<div class="a" style="left:604px;top:445px;width:1px;height:28px;background:#dcc8cc"></div>
<div class="a" style="left:604px;top:473px;width:1px;height:840px;background:#cdd1d8"></div>
<div class="a" style="left:724px;top:277px;width:1px;height:168px;background:#d4d4d4"></div>
<div class="a" style="left:724px;top:445px;width:1px;height:28px;background:#dcc8cc"></div>
<div class="a" style="left:724px;top:473px;width:1px;height:840px;background:#cdd1d8"></div>
<div class="a" style="left:844px;top:277px;width:1px;height:168px;background:#d4d4d4"></div>
<div class="a" style="left:844px;top:445px;width:1px;height:28px;background:#dcc8cc"></div>
<div class="a" style="left:844px;top:473px;width:1px;height:840px;background:#cdd1d8"></div>
<div class="a" style="left:964px;top:277px;width:1px;height:168px;background:#d4d4d4"></div>
<div class="a" style="left:964px;top:445px;width:1px;height:28px;background:#dcc8cc"></div>
<div class="a" style="left:964px;top:473px;width:1px;height:840px;background:#cdd1d8"></div>
<div class="a" style="left:1084px;top:277px;width:1px;height:168px;background:#d4d4d4"></div>
<div class="a" style="left:1084px;top:445px;width:1px;height:28px;background:#dcc8cc"></div>
<div class="a" style="left:1084px;top:473px;width:1px;height:840px;background:#cdd1d8"></div>
<div class="a" style="left:1204px;top:277px;width:1px;height:168px;background:#d4d4d4"></div>
<div class="a" style="left:1204px;top:445px;width:1px;height:28px;background:#dcc8cc"></div>
<div class="a" style="left:1204px;top:473px;width:1px;height:840px;background:#cdd1d8"></div>
<div class="a" style="left:1324px;top:277px;width:1px;height:168px;background:#d4d4d4"></div>
<div class="a" style="left:1324px;top:445px;width:1px;height:28px;background:#dcc8cc"></div>
<div class="a" style="left:1324px;top:473px;width:1px;height:840px;background:#cdd1d8"></div>
<div class="a" style="left:1444px;top:277px;width:1px;height:168px;background:#d4d4d4"></div>
<div class="a" style="left:1444px;top:445px;width:1px;height:28px;background:#dcc8cc"></div>
<div class="a" style="left:1444px;top:473px;width:1px;height:840px;background:#cdd1d8"></div>
<div class="a" style="left:1564px;top:277px;width:1px;height:168px;background:#d4d4d4"></div>
<div class="a" style="left:1564px;top:445px;width:1px;height:28px;background:#dcc8cc"></div>
<div class="a" style="left:1564px;top:473px;width:1px;height:840px;background:#cdd1d8"></div>
<div class="a" style="left:1684px;top:277px;width:1px;height:168px;background:#d4d4d4"></div>
<div class="a" style="left:1684px;top:445px;width:1px;height:28px;background:#dcc8cc"></div>
<div class="a" style="left:1684px;top:473px;width:1px;height:840px;background:#cdd1d8"></div>
<div class="t rn" style="top:283.5px">1</div>
<div class="t rn" style="top:311.5px">2</div>
<div class="t rn" style="top:339.5px">3</div>
<div class="t rn" style="top:367.5px">4</div>
<div class="t rn" style="top:395.5px">5</div>
<div class="t rn" style="top:423.5px">6</div>
<div class="t rn" style="top:451.5px">7</div>
<div class="t rn" style="top:479.5px">8</div>
<div class="t rn" style="top:507.5px">9</div>
<div class="t rn" style="top:535.5px">10</div>
<div class="t rn" style="top:563.5px">11</div>
<div class="t rn" style="top:591.5px">12</div>
<div class="t rn" style="top:619.5px">13</div>
<div class="t rn" style="top:647.5px">14</div>
<div class="t rn" style="top:675.5px">15</div>
<div class="t rn" style="top:703.5px">16</div>
<div class="t rn" style="top:731.5px">17</div>
<div class="t rn" style="top:759.5px">18</div>
<div class="t rn" style="top:787.5px">19</div>
<div class="t rn" style="top:815.5px">20</div>
<div class="t rn" style="top:843.5px">21</div>
<div class="t rn" style="top:871.5px">22</div>
<div class="t rn" style="top:899.5px">23</div>
<div class="t rn" style="top:927.5px">24</div>
<div class="t rn" style="top:955.5px">25</div>
<div class="t rn" style="top:983.5px">26</div>
<div class="t rn" style="top:1011.5px">27</div>
<div class="t rn" style="top:1039.5px">28</div>
<div class="t rn" style="top:1067.5px">29</div>
<div class="t rn" style="top:1095.5px">30</div>
<div class="t rn" style="top:1123.5px">31</div>
<div class="t rn" style="top:1151.5px">32</div>
<div class="t rn" style="top:1179.5px">33</div>
<div class="t rn" style="top:1207.5px">34</div>
<div class="t rn" style="top:1235.5px">35</div>
<div class="t rn" style="top:1263.5px">36</div>
<div class="t rn" style="top:1291.5px">37</div>
<div class="t cell" style="left:41px;top:283px;letter-spacing:0.62px">Control:</div>
<div class="t cell" style="right:1421.63px;top:283px;letter-spacing:0.37px">78</div>
<div class="t cell" style="left:281px;top:283px;letter-spacing:0.26px">MZH Bächelacker</div>
<div class="t cell" style="left:41px;top:311px;letter-spacing:0.4px">Facility:</div>
<div class="t cell" style="left:161px;top:311px;letter-spacing:0.18px">L001</div>
<div class="t cell" style="left:281px;top:311px;letter-spacing:0.55px">Lüftung Turnhalle</div>
<div class="t cell" style="left:41px;top:339px;letter-spacing:0.4px">Unit:</div>
<div class="t cell" style="left:161px;top:339px;letter-spacing:0.79px">MB002</div>
<div class="t cell" style="left:281px;top:339px;letter-spacing:0.79px">Monoblock Nebenräume</div>
<div class="a" style="left:38px;top:389px;width:119px;height:27px;overflow:hidden"><div class="t cell" style="left:3px;top:6px;letter-spacing:0.75px">Recording start:</div></div>
<div class="a" style="left:38px;top:417px;width:119px;height:27px;overflow:hidden"><div class="t cell" style="left:3px;top:6px;letter-spacing:0.75px">Recording end:</div></div>
<div class="t cell" style="right:1421.12px;top:395px;letter-spacing:0.88px">1740787451</div>
<div class="t cell" style="right:1214.26px;top:395px;letter-spacing:0.74px">01.03.2025 00:04</div>
<div class="t cell" style="right:1421.12px;top:423px;letter-spacing:0.88px">1743465611</div>
<div class="t cell" style="right:1214.26px;top:423px;letter-spacing:0.74px">01.04.2025 00:00</div>
<div class="t cell" style="left:41px;top:451px;letter-spacing:0px">TIMESTAMP</div>
<div class="t cell" style="left:161px;top:451px;letter-spacing:0.39px">232F1</div>
<div class="t cell" style="left:281px;top:451px;letter-spacing:0.4px">231F1</div>
<div class="t cell" style="left:488px;top:451px;letter-spacing:0.4px">230F1</div>
<div class="t cell" style="left:608px;top:451px;letter-spacing:0.4px">285B2</div>
<div class="t cell" style="left:728px;top:451px;letter-spacing:0.4px">285B3</div>
<div class="t cell" style="left:848px;top:451px;letter-spacing:0.4px">99B2</div>
<div class="t cell" style="left:968px;top:451px;letter-spacing:0.4px">280B2</div>
<div class="t cell" style="left:1088px;top:451px;letter-spacing:0.4px">280B3</div>
<div class="t cell" style="left:1208px;top:451px;letter-spacing:0.4px">280B5</div>
<div class="t cell" style="left:1328px;top:451px;letter-spacing:0.4px">280B7</div>
<div class="t cell" style="left:1448px;top:451px;letter-spacing:0px">260Y1</div>
<div class="t cell" style="left:1568px;top:451px;letter-spacing:0px">260Y1</div>
<div class="t cell" style="left:1688px;top:451px;letter-spacing:0.4px">201M1</div>
<div class="t cell" style="right:1541.12px;top:479px;letter-spacing:0.88px">1740787451</div>
<div class="t cell" style="right:1541.12px;top:507px;letter-spacing:0.88px">1740787691</div>
<div class="t cell" style="right:1541.12px;top:535px;letter-spacing:0.88px">1740787931</div>
<div class="t cell" style="right:1541.12px;top:563px;letter-spacing:0.88px">1740788171</div>
<div class="t cell" style="right:1541.12px;top:591px;letter-spacing:0.88px">1740788411</div>
<div class="t cell" style="right:1541.12px;top:619px;letter-spacing:0.88px">1740788651</div>
<div class="t cell" style="right:1541.12px;top:647px;letter-spacing:0.88px">1740788891</div>
<div class="t cell" style="right:1541.12px;top:675px;letter-spacing:0.88px">1740789131</div>
<div class="t cell" style="right:1541.12px;top:703px;letter-spacing:0.88px">1740789371</div>
<div class="t cell" style="right:1541.12px;top:731px;letter-spacing:0.88px">1740789611</div>
<div class="t cell" style="right:1541.12px;top:759px;letter-spacing:0.88px">1740789851</div>
<div class="t cell" style="right:1541.12px;top:787px;letter-spacing:0.88px">1740790091</div>
<div class="t cell" style="right:1541.12px;top:815px;letter-spacing:0.88px">1740790331</div>
<div class="t cell" style="right:1541.12px;top:843px;letter-spacing:0.88px">1740790571</div>
<div class="t cell" style="right:1541.12px;top:871px;letter-spacing:0.88px">1740790811</div>
<div class="t cell" style="right:1541.12px;top:899px;letter-spacing:0.88px">1740791051</div>
<div class="t cell" style="right:1541.12px;top:927px;letter-spacing:0.88px">1740791291</div>
<div class="t cell" style="right:1541.12px;top:955px;letter-spacing:0.88px">1740791531</div>
<div class="t cell" style="right:1541.12px;top:983px;letter-spacing:0.88px">1740791771</div>
<div class="t cell" style="right:1541.12px;top:1011px;letter-spacing:0.88px">1740792011</div>
<div class="t cell" style="right:1541.12px;top:1039px;letter-spacing:0.88px">1740792251</div>
<div class="t cell" style="right:1541.12px;top:1067px;letter-spacing:0.88px">1740792491</div>
<div class="t cell" style="right:1541.12px;top:1095px;letter-spacing:0.88px">1740792731</div>
<div class="t cell" style="right:1541.12px;top:1123px;letter-spacing:0.88px">1740792971</div>
<div class="t cell" style="right:1541.12px;top:1151px;letter-spacing:0.88px">1740793211</div>
<div class="t cell" style="right:1541.12px;top:1179px;letter-spacing:0.88px">1740793451</div>
<div class="t cell" style="right:1541.12px;top:1207px;letter-spacing:0.88px">1740793691</div>
<div class="t cell" style="right:1541.12px;top:1235px;letter-spacing:0.88px">1740793931</div>
<div class="t cell" style="right:1541.12px;top:1263px;letter-spacing:0.88px">1740794171</div>
<div class="t cell" style="right:1541.12px;top:1291px;letter-spacing:0.88px">1740794411</div>
<div class="t cell" style="right:134.63px;top:479px;letter-spacing:0.37px">42.33</div>
<div class="t cell" style="right:14.63px;top:479px;letter-spacing:0.37px">37.25</div>
<div class="t cell" style="right:134.63px;top:507px;letter-spacing:0.37px">42.33</div>
<div class="t cell" style="right:14.63px;top:507px;letter-spacing:0.37px">37.24</div>
<div class="t cell" style="right:134.63px;top:535px;letter-spacing:0.37px">42.3</div>
<div class="t cell" style="right:14.63px;top:535px;letter-spacing:0.37px">37.21</div>
<div class="t cell" style="right:134.63px;top:563px;letter-spacing:0.37px">42.31</div>
<div class="t cell" style="right:14.63px;top:563px;letter-spacing:0.37px">37.23</div>
<div class="t cell" style="right:134.63px;top:591px;letter-spacing:0.37px">42.31</div>
<div class="t cell" style="right:14.63px;top:591px;letter-spacing:0.37px">37.26</div>
<div class="t cell" style="right:134.63px;top:619px;letter-spacing:0.37px">42.31</div>
<div class="t cell" style="right:14.63px;top:619px;letter-spacing:0.37px">37.25</div>
<div class="t cell" style="right:134.63px;top:647px;letter-spacing:0.37px">42.19</div>
<div class="t cell" style="right:14.63px;top:647px;letter-spacing:0.37px">37.27</div>
<div class="t cell" style="right:134.63px;top:675px;letter-spacing:0.37px">42.1</div>
<div class="t cell" style="right:14.63px;top:675px;letter-spacing:0.37px">37.22</div>
<div class="t cell" style="right:134.63px;top:703px;letter-spacing:0.37px">42.07</div>
<div class="t cell" style="right:14.63px;top:703px;letter-spacing:0.37px">37.17</div>
<div class="t cell" style="right:134.63px;top:731px;letter-spacing:0.37px">42.07</div>
<div class="t cell" style="right:14.63px;top:731px;letter-spacing:0.37px">37.08</div>
<div class="t cell" style="right:134.63px;top:759px;letter-spacing:0.37px">42.05</div>
<div class="t cell" style="right:14.63px;top:759px;letter-spacing:0.37px">37.06</div>
<div class="t cell" style="right:134.63px;top:787px;letter-spacing:0.37px">42.07</div>
<div class="t cell" style="right:14.63px;top:787px;letter-spacing:0.37px">37.1</div>
<div class="t cell" style="right:134.63px;top:815px;letter-spacing:0.37px">42.11</div>
<div class="t cell" style="right:14.63px;top:815px;letter-spacing:0.37px">37.06</div>
<div class="t cell" style="right:134.63px;top:843px;letter-spacing:0.37px">42.15</div>
<div class="t cell" style="right:14.63px;top:843px;letter-spacing:0.37px">37.04</div>
<div class="t cell" style="right:134.63px;top:871px;letter-spacing:0.37px">42.19</div>
<div class="t cell" style="right:14.63px;top:871px;letter-spacing:0.37px">37.05</div>
<div class="t cell" style="right:134.63px;top:899px;letter-spacing:0.37px">42.23</div>
<div class="t cell" style="right:14.63px;top:899px;letter-spacing:0.37px">37.22</div>
<div class="t cell" style="right:134.63px;top:927px;letter-spacing:0.37px">42.24</div>
<div class="t cell" style="right:14.63px;top:927px;letter-spacing:0.37px">37.32</div>
<div class="t cell" style="right:134.63px;top:955px;letter-spacing:0.37px">42.25</div>
<div class="t cell" style="right:14.63px;top:955px;letter-spacing:0.37px">37.34</div>
<div class="t cell" style="right:134.63px;top:983px;letter-spacing:0.37px">42.25</div>
<div class="t cell" style="right:14.63px;top:983px;letter-spacing:0.37px">37.32</div>
<div class="t cell" style="right:134.63px;top:1011px;letter-spacing:0.37px">42.24</div>
<div class="t cell" style="right:14.63px;top:1011px;letter-spacing:0.37px">37.24</div>
<div class="t cell" style="right:134.63px;top:1039px;letter-spacing:0.37px">42.19</div>
<div class="t cell" style="right:14.63px;top:1039px;letter-spacing:0.37px">37.22</div>
<div class="t cell" style="right:134.63px;top:1067px;letter-spacing:0.37px">42.17</div>
<div class="t cell" style="right:14.63px;top:1067px;letter-spacing:0.37px">37.33</div>
<div class="t cell" style="right:134.63px;top:1095px;letter-spacing:0.37px">42.16</div>
<div class="t cell" style="right:14.63px;top:1095px;letter-spacing:0.37px">37.36</div>
<div class="t cell" style="right:134.63px;top:1123px;letter-spacing:0.37px">42.15</div>
<div class="t cell" style="right:14.63px;top:1123px;letter-spacing:0.37px">37.31</div>
<div class="t cell" style="right:134.63px;top:1151px;letter-spacing:0.37px">42.17</div>
<div class="t cell" style="right:14.63px;top:1151px;letter-spacing:0.37px">37.31</div>
<div class="t cell" style="right:134.63px;top:1179px;letter-spacing:0.37px">42.17</div>
<div class="t cell" style="right:14.63px;top:1179px;letter-spacing:0.37px">37.38</div>
<div class="t cell" style="right:134.63px;top:1207px;letter-spacing:0.37px">42.16</div>
<div class="t cell" style="right:14.63px;top:1207px;letter-spacing:0.37px">37.52</div>
<div class="t cell" style="right:134.63px;top:1235px;letter-spacing:0.37px">42.14</div>
<div class="t cell" style="right:14.63px;top:1235px;letter-spacing:0.37px">37.54</div>
<div class="t cell" style="right:134.63px;top:1263px;letter-spacing:0.37px">42.1</div>
<div class="t cell" style="right:14.63px;top:1263px;letter-spacing:0.37px">37.57</div>
<div class="t cell" style="right:134.63px;top:1291px;letter-spacing:0.37px">40.57</div>
<div class="t cell" style="right:14.63px;top:1291px;letter-spacing:0.37px">37.22</div>
<div class="t cell" style="right:1421.63px;top:1235px;letter-spacing:0.37px">0</div>
<div class="t cell" style="right:1214.63px;top:1235px;letter-spacing:0.37px">0</div>
<div class="t cell" style="right:1094.63px;top:1235px;letter-spacing:0.37px">0</div>
<div class="t cell" style="right:974.63px;top:1235px;letter-spacing:0.37px">4</div>
<div class="t cell" style="right:854.63px;top:1235px;letter-spacing:0.37px">3</div>
<div class="t cell" style="right:734.63px;top:1235px;letter-spacing:0.37px">3.17</div>
<div class="t cell" style="right:614.63px;top:1235px;letter-spacing:0.37px">3.26</div>
<div class="t cell" style="right:494.63px;top:1235px;letter-spacing:0.37px">21.04</div>
<div class="t cell" style="right:374.63px;top:1235px;letter-spacing:0.37px">13.98</div>
<div class="t cell" style="right:254.63px;top:1235px;letter-spacing:0.37px">2.79</div>
<div class="t cell" style="right:1421.63px;top:1263px;letter-spacing:0.37px">0</div>
<div class="t cell" style="right:1214.63px;top:1263px;letter-spacing:0.37px">0</div>
<div class="t cell" style="right:1094.63px;top:1263px;letter-spacing:0.37px">0</div>
<div class="t cell" style="right:974.63px;top:1263px;letter-spacing:0.37px">4</div>
<div class="t cell" style="right:854.63px;top:1263px;letter-spacing:0.37px">5</div>
<div class="t cell" style="right:734.63px;top:1263px;letter-spacing:0.37px">2.99</div>
<div class="t cell" style="right:614.63px;top:1263px;letter-spacing:0.37px">3.24</div>
<div class="t cell" style="right:494.63px;top:1263px;letter-spacing:0.37px">21.04</div>
<div class="t cell" style="right:374.63px;top:1263px;letter-spacing:0.37px">13.99</div>
<div class="t cell" style="right:254.63px;top:1263px;letter-spacing:0.37px">2.8</div>
<div class="t cell" style="right:1421.63px;top:1291px;letter-spacing:0.37px">0</div>
<div class="t cell" style="right:1214.63px;top:1291px;letter-spacing:0.37px">0</div>
<div class="t cell" style="right:1094.63px;top:1291px;letter-spacing:0.37px">0</div>
<div class="t cell" style="right:974.63px;top:1291px;letter-spacing:0.37px">5</div>
<div class="t cell" style="right:854.63px;top:1291px;letter-spacing:0.37px">4</div>
<div class="t cell" style="right:734.63px;top:1291px;letter-spacing:0.37px">3.01</div>
<div class="t cell" style="right:614.63px;top:1291px;letter-spacing:0.37px">3.22</div>
<div class="t cell" style="right:494.63px;top:1291px;letter-spacing:0.37px">21.06</div>
<div class="t cell" style="right:374.63px;top:1291px;letter-spacing:0.37px">13.94</div>
<div class="t cell" style="right:254.63px;top:1291px;letter-spacing:0.37px">2.79</div>
<div class="a" style="left:156px;top:443px;width:1539px;height:2px;background:#c1283a"></div>
<div class="a" style="left:156px;top:472px;width:1539px;height:2px;background:#c1283a"></div>
<div class="a" style="left:156px;top:445px;width:2px;height:27px;background:#c1283a"></div>
<div class="a" style="left:155px;top:442px;width:5px;height:5px;background:#c1283a"></div>
<div class="a" style="left:38px;top:471px;width:121px;height:2px;background:#7d4fbf"></div>
<div class="a" style="left:157px;top:473px;width:2px;height:840px;background:#7d4fbf"></div>
<div class="a" style="left:38px;top:470px;width:2px;height:5px;background:#7d4fbf"></div>
<div class="a" style="left:155px;top:470px;width:5px;height:6px;background:#7d4fbf"></div>
<div class="a" style="left:178px;top:484px;width:1307px;height:773px;background:rgba(0,0,0,0.40);filter:blur(5px)"></div>
<div class="a" style="left:200px;top:477px;width:1261px;height:746px;background:#fff;border:1px solid #595959"></div>
<svg class="a" style="left:0;top:0" width="1695" height="1313">
<path d="M258.5 547.8H1395.5 M258.5 620.2H1395.5 M258.5 692.6H1395.5 M258.5 765.0H1395.5 M258.5 837.4H1395.5 M258.5 909.8H1395.5 M258.5 1054.6H1395.5 M258.5 1127.0H1395.5 M258.5 547.8V1127.3 M420.9 547.8V1127.3 M583.4 547.8V1127.3 M745.8 547.8V1127.3 M908.3 547.8V1127.3 M1070.7 547.8V1127.3 M1233.1 547.8V1127.3 M1395.6 547.8V1127.3" stroke="#d9d9d9" stroke-width="1.2" fill="none"/>
<path d="M258.5 982.2H1395.5" stroke="#bfbfbf" stroke-width="1.5"/>
<g fill="none" stroke-width="3" stroke-linejoin="round" stroke-linecap="butt" shape-rendering="crispEdges">
<polyline points="379.0,982.2 1212.0,982.2" stroke="#4472C4"/>
<polyline points="379.0,982.2 1212.0,982.2" stroke="#ED7D31"/>
<polyline points="379.0,982.2 1212.0,982.2" stroke="#A5A5A5"/>
<polyline points="379.0,972.7 380.2,965.9 381.4,960.3 382.6,965.7 383.8,959.3 385.0,973.4 386.2,968.6 387.4,968.4 388.6,961.2 389.8,970.2 391.0,967.0 392.2,966.4 393.4,968.7 394.6,963.9 395.8,966.5 397.0,967.6 398.2,968.4 399.4,967.0 400.6,969.0 401.8,968.4 403.0,969.9 404.2,966.9 405.4,966.1 406.6,974.1 407.8,965.7 409.0,969.3 410.2,969.9 411.4,969.0 412.6,968.4 413.8,969.7 415.0,967.9 416.2,965.8 417.4,968.7 418.6,969.6 419.8,967.4 421.0,965.6 422.2,969.4 423.4,973.2 424.6,967.5 425.8,965.9 427.0,968.2 428.2,969.6 429.4,966.9 430.6,967.3 431.8,973.8 433.0,966.7 434.2,967.9 435.4,960.3 436.6,967.3 437.8,970.3 439.0,968.1 440.2,959.5 441.4,969.4 442.6,969.5 443.8,973.0 445.0,960.6 446.2,966.3 447.4,960.9 448.6,966.0 449.8,965.6 451.0,972.4 452.2,967.2 453.4,966.1 454.6,970.5 455.8,963.3 457.0,967.2 458.2,972.5 459.4,970.3 460.6,966.2 461.8,965.6 462.0,968.0 462.5,969.0 463.0,1098.0 463.5,1000.0 464.0,620.0 465.0,627.3 466.3,624.8 467.6,626.0 468.9,623.3 470.2,625.8 471.5,627.4 472.8,625.8 474.1,628.6 475.4,618.8 476.7,621.0 478.0,624.7 479.3,622.5 480.6,627.4 481.9,624.4 483.2,624.1 484.5,626.6 485.8,622.8 487.1,620.1 488.4,626.7 489.7,625.3 491.0,620.1 492.3,621.5 493.6,627.2 494.9,622.1 496.2,627.4 497.5,619.9 498.8,630.1 500.1,627.3 501.4,621.7 502.7,612.8 504.0,624.3 505.3,626.9 506.6,626.3 507.9,620.4 509.2,621.1 510.5,623.8 511.8,626.9 513.1,621.7 514.4,623.8 515.7,622.3 517.0,623.0 518.3,618.6 519.6,614.0 520.9,620.1 522.2,625.0 523.5,621.4 524.8,623.5 526.1,619.5 527.4,620.7 528.7,625.5 530.0,623.6 531.3,626.7 532.6,624.0 533.9,623.1 535.2,622.6 536.5,622.8 537.8,624.8 539.1,627.0 540.4,623.5 541.7,628.4 543.0,618.7 544.3,619.2 545.6,625.6 546.9,619.9 548.2,629.0 549.5,632.0 550.8,622.1 552.1,627.4 553.4,620.0 554.7,623.1 556.0,620.3 557.3,619.9 558.6,618.3 559.9,624.1 561.2,619.1 562.5,625.6 563.8,619.4 565.1,618.9 566.4,624.1 567.7,626.7 569.0,625.5 570.3,623.6 571.6,613.6 572.9,615.6 574.0,623.0 574.5,630.0 575.5,960.0 576.0,969.9 577.0,968.9 577.5,964.2 578.1,964.2 578.6,968.5 579.6,970.3 580.6,967.9 581.6,968.2 582.6,968.1 583.1,963.3 583.7,963.3 584.2,968.4 585.2,969.8 586.2,969.0 587.2,968.5 588.2,969.7 588.7,964.3 589.7,964.3 590.2,969.2 591.2,968.9 592.2,967.8 593.2,968.8 594.2,970.0 595.2,969.0 596.2,970.4 597.2,970.0 598.2,969.4 599.2,968.5 600.0,969.0 592.0,968.0 592.6,950.0 593.2,968.0 596.0,968.0 596.6,940.0 597.2,968.0 600.5,968.0 601.4,923.0 602.3,968.0 604.0,968.0 604.7,945.0 605.4,968.0 607.5,968.0 608.2,950.0 609.0,968.0 603.0,970.7 603.5,974.6 604.1,974.6 604.6,969.3 605.6,968.8 606.6,971.1 607.6,969.3 608.6,969.4 609.6,969.0 610.6,969.3 611.6,971.4 612.6,969.2 613.6,969.4 614.6,968.5 615.6,969.9 616.6,969.1 617.6,968.5 618.6,968.8 619.6,968.6 620.6,970.3 621.1,962.7 622.1,962.7 622.6,970.1 623.6,970.5 624.6,971.1 625.6,969.5 626.6,968.9 627.6,970.4 628.6,968.9 629.1,977.8 630.6,977.8 631.1,970.1 632.1,971.0 633.1,971.0 634.1,971.2 635.1,970.6 636.1,968.6 637.1,969.6 638.1,971.0 639.1,970.4 640.1,970.5 641.1,968.5 642.1,970.7 643.1,970.1 644.1,968.7 645.1,969.3 646.1,969.2 646.6,964.4 647.6,964.4 648.1,970.4 649.1,971.0 650.1,970.4 650.6,978.0 651.6,978.0 652.1,969.1 653.1,969.5 654.1,970.6 655.1,968.9 656.1,970.0 657.1,968.8 658.1,970.0 659.1,969.4 660.1,970.8 661.1,970.1 662.1,968.8 663.1,969.4 664.1,969.1 664.6,961.0 666.1,961.0 666.6,971.3 667.6,970.2 668.6,970.1 669.6,968.9 670.6,970.0 671.6,970.6 672.6,971.2 673.6,968.6 674.6,969.4 675.1,962.4 676.6,962.4 677.1,968.9 678.1,969.4 679.1,968.5 680.1,971.0 681.1,971.3 682.1,971.2 683.1,969.6 684.1,971.5 685.1,969.6 686.1,969.3 687.1,969.4 687.6,974.7 687.9,974.7 688.4,971.3 689.4,969.3 690.4,969.1 691.4,971.4 692.4,970.9 693.4,971.2 694.4,970.1 695.4,968.6 696.4,969.9 697.4,970.4 698.4,968.6 699.4,968.9 700.4,969.5 701.4,970.7 702.4,969.3 703.4,969.4 704.4,969.7 705.4,969.0 706.4,971.2 707.4,969.2 708.4,971.5 709.4,968.9 710.4,968.8 711.4,968.8 712.4,969.3 713.4,971.2 714.4,969.7 715.4,970.1 716.4,969.5 717.4,968.9 717.9,962.9 718.9,962.9 719.4,970.0 720.4,971.1 721.4,969.3 722.4,969.7 723.4,971.4 724.4,971.1 725.4,971.4 725.9,963.6 726.2,963.6 726.7,970.0 727.7,970.8 728.2,961.1 729.7,961.1 730.2,969.2 731.2,971.4 732.2,971.0 733.2,971.0 734.2,968.8 735.2,968.5 736.2,970.2 737.2,969.3 737.7,978.8 738.7,978.8 739.2,970.4 740.2,968.8 741.2,970.9 741.7,963.8 742.3,963.8 742.8,968.5 743.8,971.5 744.8,969.4 745.8,969.2 746.8,970.1 747.8,968.7 748.3,962.3 749.8,962.3 750.3,969.1 751.3,970.4 752.3,969.2 753.0,970.0 753.5,620.0 755.0,622.5 756.2,621.2 757.4,620.9 758.6,618.8 759.8,617.4 761.0,618.2 762.2,618.2 763.4,618.6 764.6,617.7 765.0,620.0 765.5,965.0 766.0,970.6 767.0,970.6 768.0,967.9 768.5,960.4 769.1,960.4 769.6,970.9 770.6,968.6 771.1,961.3 771.4,961.3 771.9,970.6 772.9,969.9 773.9,970.7 774.9,967.7 775.9,970.0 776.9,968.8 777.4,960.7 778.9,960.7 779.4,967.4 780.4,969.2 780.9,962.9 781.2,962.9 781.7,970.0 782.7,970.1 783.7,970.2 784.7,970.7 785.2,974.4 786.7,974.4 787.2,967.8 788.2,970.6 789.2,970.1 789.7,974.6 791.2,974.6 791.7,967.2 792.7,968.0 793.2,960.9 793.5,960.9 794.0,970.0 795.0,968.4 796.0,970.8 797.0,968.0 798.0,968.3 799.0,967.0 800.0,970.7 801.0,970.8 802.0,970.8 802.5,974.0 803.1,974.0 803.6,970.8 804.6,968.0 805.6,969.0 806.6,967.7 807.6,970.0 808.6,970.1 809.6,968.3 810.6,968.4 811.6,967.3 812.6,969.6 813.1,963.4 813.7,963.4 814.2,968.9 815.0,969.0 815.0,968.0 816.0,967.6 817.0,970.0 817.5,964.6 817.8,964.6 818.3,971.3 819.3,968.4 820.3,970.7 821.3,971.5 822.3,971.0 823.3,968.6 823.8,975.8 824.8,975.8 825.3,968.5 826.3,968.4 826.8,964.4 828.3,964.4 828.8,968.7 829.8,968.1 830.8,970.2 831.3,979.0 832.3,979.0 832.8,970.9 833.8,967.0 834.3,961.0 835.8,961.0 836.3,972.3 837.3,972.3 837.8,961.4 839.3,961.4 839.8,968.4 840.8,970.1 841.3,961.3 841.9,961.3 842.4,968.1 843.4,971.6 844.4,967.0 845.4,971.3 846.4,967.2 847.4,967.3 848.4,967.2 849.4,972.5 850.4,971.9 851.4,969.2 852.4,967.5 853.4,969.4 853.9,963.0 855.4,963.0 855.9,971.8 856.9,967.9 857.9,970.9 858.9,968.6 859.9,971.0 860.9,967.3 861.9,972.3 862.9,967.1 863.9,971.8 864.9,969.3 865.9,972.7 866.9,967.9 867.9,969.8 868.4,963.7 868.7,963.7 869.2,968.0 870.2,967.5 870.7,962.6 871.3,962.6 871.8,970.7 872.0,970.0 872.0,969.5 873.5,969.2 875.0,970.2 876.5,969.5 878.0,970.2 879.5,968.9 881.0,970.3 882.5,968.8 884.0,969.3 885.5,969.7 887.0,969.0 888.5,969.1 890.0,970.1 891.5,969.0 893.0,969.3 894.5,969.3 896.0,969.1 897.5,970.1 899.0,968.9 899.5,966.2 899.8,966.2 900.3,969.7 901.8,969.7 903.3,969.4 904.8,969.4 906.3,969.4 907.8,968.7 909.3,969.5 910.8,969.9 912.3,969.4 913.8,969.5 915.3,968.9 916.8,968.8 918.3,969.5 919.8,969.2 920.3,971.7 920.9,971.7 921.4,969.9 922.9,969.9 924.4,969.7 925.9,968.7 927.4,969.7 928.9,968.9 930.4,970.1 931.9,970.0 933.4,969.8 934.9,969.1 936.4,969.7 937.9,969.2 939.4,970.1 940.9,969.1 942.4,969.5 943.9,969.7 945.4,969.3 946.9,969.3 948.4,969.1 949.9,969.3 951.4,969.1 952.9,968.8 954.4,970.2 955.9,969.5 957.4,970.1 958.9,969.6 960.4,969.9 961.9,969.3 963.4,968.9 964.9,968.8 966.4,969.7 967.9,969.2 969.4,969.2 970.9,970.1 972.4,970.1 973.9,969.9 975.4,969.2 976.9,969.4 978.4,968.8 979.9,969.7 981.4,969.2 981.9,967.5 982.2,967.5 982.7,969.5 984.2,969.4 985.7,968.9 987.2,970.0 988.7,968.7 990.2,969.8 991.7,968.8 993.2,969.8 994.7,970.0 996.2,968.8 997.7,970.1 999.2,969.6 1000.7,969.5 1002.2,969.0 1003.7,969.0 1004.2,966.4 1004.5,966.4 1005.0,969.0 1004.0,969.5 1005.0,620.0 1008.0,621.3 1009.3,627.6 1010.6,623.2 1011.9,624.3 1013.2,624.0 1014.5,619.1 1015.8,627.4 1017.1,622.8 1018.4,621.9 1019.7,621.2 1021.0,620.1 1022.3,620.9 1023.6,619.6 1024.9,626.8 1026.2,615.4 1027.5,624.6 1028.8,626.8 1030.1,621.2 1031.4,621.6 1032.7,620.0 1034.0,628.5 1035.3,629.8 1036.6,623.9 1037.9,626.2 1039.2,627.3 1040.5,623.3 1041.8,620.4 1043.1,631.7 1044.4,625.6 1045.7,623.8 1047.0,616.8 1048.3,628.9 1049.6,621.4 1050.9,621.2 1052.2,618.9 1053.5,630.1 1054.8,623.3 1056.1,626.4 1057.4,624.9 1058.7,622.8 1060.0,627.0 1061.3,619.3 1062.6,624.2 1063.9,619.7 1065.2,624.3 1066.5,621.5 1067.8,621.7 1069.1,618.9 1070.4,626.7 1071.7,623.9 1073.0,621.1 1074.3,620.6 1075.6,619.4 1076.9,618.9 1078.2,624.9 1079.5,623.7 1080.8,622.4 1082.1,621.1 1083.4,619.0 1084.7,619.4 1086.0,625.9 1087.3,623.8 1088.6,623.1 1089.9,619.9 1091.2,629.4 1092.5,626.9 1093.8,622.9 1095.1,619.4 1096.4,619.4 1097.7,626.5 1099.0,622.3 1100.3,621.8 1101.6,622.4 1102.9,620.0 1104.2,624.2 1105.5,619.6 1106.8,624.7 1108.1,618.8 1109.4,623.2 1110.7,622.6 1112.0,621.4 1113.3,624.7 1114.6,620.6 1115.9,624.3 1117.2,623.1 1118.5,625.3 1119.8,624.1 1121.1,627.3 1122.4,623.9 1123.7,620.6 1125.0,620.8 1126.3,631.3 1127.6,622.7 1128.9,621.2 1130.2,614.3 1131.5,621.0 1132.8,616.3 1134.1,627.3 1135.4,617.3 1136.7,621.3 1138.0,626.2 1139.3,623.8 1140.6,626.1 1141.9,624.4 1143.2,624.3 1144.5,622.9 1145.8,622.4 1147.1,624.8 1148.4,620.7 1149.7,629.4 1151.0,616.4 1152.3,623.2 1153.6,626.4 1154.9,615.2 1156.2,622.8 1157.5,620.5 1158.8,630.0 1160.1,626.1 1161.4,620.3 1162.7,618.6 1164.0,621.8 1165.3,625.2 1166.6,630.9 1167.9,626.9 1169.2,624.0 1170.5,620.8 1171.8,612.4 1173.1,624.2 1174.4,619.6 1175.7,622.1 1177.0,627.2 1178.3,627.1 1179.6,620.0 1180.9,619.1 1182.2,620.2 1183.5,625.0 1184.8,619.8 1186.1,626.0 1187.4,622.2 1188.7,625.3 1190.0,625.5 1191.3,629.6 1192.6,624.7 1193.9,624.6 1195.2,625.7 1196.5,621.7 1197.8,621.4 1199.1,617.5 1200.4,619.9 1201.7,616.8 1203.0,621.4 1204.3,623.3 1205.6,623.7 1206.9,616.4 1208.2,624.0 1209.5,629.5 1210.0,623.0 1211.0,620.5" stroke="#FFC000"/>
<polyline points="379.0,964.6 380.0,965.6 381.0,966.1 382.0,964.2 383.0,965.7 384.0,964.9 385.0,964.6 386.0,965.7 386.5,960.5 388.0,960.5 388.5,964.7 389.5,964.3 390.5,964.1 391.5,964.4 392.5,965.5 393.5,966.7 394.5,965.5 395.0,969.9 396.0,969.9 396.5,964.8 397.5,965.3 398.5,966.1 399.5,965.1 400.5,964.0 401.5,965.5 402.0,960.1 403.0,960.1 403.5,965.5 404.5,964.0 405.5,965.9 406.5,966.7 407.5,965.4 408.5,966.4 409.5,965.3 410.5,965.7 411.5,964.8 412.5,965.2 413.5,964.8 414.5,967.0 415.5,966.4 416.5,964.9 417.5,965.8 418.5,966.4 419.5,965.2 420.0,960.9 421.5,960.9 422.0,964.2 423.0,964.1 423.5,970.3 425.0,970.3 425.5,965.5 426.5,965.1 427.5,965.9 428.0,969.1 428.3,969.1 428.8,965.9 429.8,966.0 430.8,965.2 431.8,966.4 432.3,961.4 432.6,961.4 433.1,965.7 434.1,964.9 435.1,964.9 436.1,966.0 437.1,964.1 438.1,964.0 439.1,965.3 439.6,960.8 441.1,960.8 441.6,963.9 442.6,965.8 443.6,967.0 444.6,965.2 445.6,965.9 446.1,961.9 447.6,961.9 448.1,965.3 449.1,964.6 449.6,959.5 449.9,959.5 450.4,964.3 451.4,964.8 452.4,965.3 453.4,966.9 454.4,966.3 455.4,964.4 456.4,964.8 457.4,965.5 458.4,966.7 459.4,964.1 460.4,966.1 460.9,968.5 461.2,968.5 461.7,965.9 462.0,965.5 463.0,966.0 464.0,620.0 465.0,619.0 466.3,620.9 467.6,623.0 468.9,618.3 470.2,622.0 471.5,617.0 472.8,616.6 474.1,617.0 475.4,619.8 476.7,619.6 478.0,622.3 479.3,618.0 480.6,621.4 481.9,620.9 483.2,618.6 484.5,623.0 485.8,624.3 487.1,619.0 488.4,625.7 489.7,621.7 491.0,622.6 492.3,622.4 493.6,622.7 494.9,629.3 496.2,622.7 497.5,622.5 498.8,620.3 500.1,619.9 501.4,622.6 502.7,624.3 504.0,616.0 505.3,621.9 506.6,616.4 507.9,620.4 509.2,614.2 510.5,620.2 511.8,623.0 513.1,622.6 514.4,616.3 515.7,618.1 517.0,618.7 518.3,623.2 519.6,623.8 520.9,623.3 522.2,615.5 523.5,615.8 524.8,617.3 526.1,623.3 527.4,625.5 528.7,613.3 530.0,620.8 531.3,616.7 532.6,618.5 533.9,616.0 535.2,618.8 536.5,619.9 537.8,623.6 539.1,621.3 540.4,617.7 541.7,610.9 543.0,624.5 544.3,622.9 545.6,617.0 546.9,618.8 548.2,615.8 549.5,617.8 550.8,622.2 552.1,615.7 553.4,619.7 554.7,620.8 556.0,621.4 557.3,618.8 558.6,618.9 559.9,619.5 561.2,623.7 562.5,619.7 563.8,627.1 565.1,616.2 566.4,618.9 567.7,622.5 569.0,623.8 570.3,608.8 571.6,620.7 572.9,618.8 574.0,620.0 574.5,621.0 575.5,966.0 576.0,964.5 577.0,966.7 578.0,964.4 579.0,964.7 580.0,964.8 580.5,960.8 581.5,960.8 582.0,964.3 583.0,965.4 584.0,965.5 585.0,966.4 586.0,965.7 587.0,964.4 588.0,966.9 589.0,964.8 590.0,964.7 591.0,965.2 592.0,966.5 593.0,964.4 594.0,965.3 595.0,965.5 596.0,966.4 597.0,964.9 598.0,964.1 599.0,964.8 600.0,966.5 601.0,964.7 602.0,965.8 603.0,966.7 604.0,966.3 605.0,964.4 606.0,965.9 607.0,964.9 608.0,965.6 608.5,959.1 610.0,959.1 610.5,965.0 611.5,965.9 612.5,964.3 613.5,966.3 614.5,966.5 615.0,969.9 616.0,969.9 616.5,965.1 617.5,965.1 618.5,964.0 619.5,965.3 620.5,964.4 621.5,966.4 622.5,965.0 623.5,965.1 624.5,964.2 625.5,966.9 626.5,965.5 627.5,965.6 628.5,964.5 629.0,961.2 629.3,961.2 629.8,964.9 630.8,966.9 631.8,965.9 632.3,969.9 632.9,969.9 633.4,965.4 634.4,965.3 635.4,964.3 636.4,964.8 637.4,965.8 638.4,964.3 639.4,966.6 639.9,960.1 640.5,960.1 641.0,964.4 642.0,966.2 643.0,966.5 644.0,965.2 645.0,966.5 646.0,965.2 647.0,966.3 648.0,964.7 649.0,965.3 650.0,966.4 651.0,966.4 652.0,964.2 653.0,966.9 654.0,964.7 655.0,965.9 656.0,965.6 657.0,964.1 657.5,969.7 659.0,969.7 659.5,964.4 660.5,966.3 661.5,965.9 662.5,966.7 663.5,964.1 664.5,964.8 665.5,964.8 666.5,966.8 667.5,964.8 668.5,965.3 669.5,964.9 670.5,965.9 671.5,965.6 672.0,969.3 673.0,969.3 673.5,964.4 674.5,965.7 675.0,958.9 675.6,958.9 676.1,964.8 677.1,966.2 678.1,965.4 679.1,964.7 680.1,965.6 681.1,966.7 682.1,965.4 683.1,964.1 684.1,964.6 685.1,966.9 686.1,966.8 687.1,966.9 688.1,965.0 689.1,966.6 690.1,964.2 691.1,965.3 691.6,959.9 691.9,959.9 692.4,964.2 693.4,965.3 694.4,964.3 695.4,966.9 696.4,964.5 697.4,965.1 698.4,965.8 699.4,966.5 700.4,966.2 701.4,966.3 702.4,966.4 703.4,966.7 704.4,965.8 704.9,969.0 705.2,969.0 705.7,965.5 706.7,965.7 707.7,966.4 708.7,965.8 709.7,965.4 710.7,966.2 711.7,965.2 712.7,965.2 713.7,966.4 714.7,965.5 715.7,964.6 716.7,964.4 717.7,965.7 718.7,966.5 719.2,970.1 720.2,970.1 720.7,966.9 721.7,965.3 722.7,964.0 723.7,966.3 724.2,970.0 725.7,970.0 726.2,965.6 727.2,965.6 728.2,966.1 729.2,965.1 730.2,965.1 731.2,966.0 732.2,964.3 733.2,965.2 734.2,965.7 735.2,966.9 736.2,965.3 737.2,967.0 738.2,965.6 739.2,964.5 740.2,966.9 741.2,965.5 742.2,966.7 742.7,971.4 743.7,971.4 744.2,965.3 745.2,964.9 746.2,965.5 747.2,964.5 748.2,965.8 749.2,967.0 750.2,964.1 751.2,966.4 752.2,966.1 753.0,965.5 753.5,620.0 755.0,620.8 756.2,621.7 757.4,618.6 758.6,624.7 759.8,621.3 761.0,621.6 762.2,612.8 763.4,614.8 764.6,621.2 765.0,621.0 765.5,966.0 766.0,966.9 767.0,965.5 767.5,972.7 767.8,972.7 768.3,966.6 769.3,965.0 770.3,964.8 771.3,966.2 772.3,965.8 773.3,964.7 774.3,966.2 775.3,965.8 776.3,965.2 777.3,965.4 777.8,960.7 778.4,960.7 778.9,966.3 779.9,966.0 780.9,965.2 781.9,966.7 782.9,966.0 783.4,971.6 784.4,971.6 784.9,966.9 785.9,965.1 786.4,961.3 787.0,961.3 787.5,967.4 788.5,966.2 789.5,964.7 790.0,971.3 791.5,971.3 792.0,964.9 793.0,965.6 794.0,965.2 794.5,960.1 795.1,960.1 795.6,964.6 796.6,965.5 797.6,966.1 798.1,961.6 798.7,961.6 799.2,966.9 800.2,965.9 801.2,965.2 802.2,965.1 803.2,966.4 804.2,965.4 805.2,965.1 806.2,966.5 807.2,967.5 808.2,965.8 809.2,966.1 810.2,966.0 811.2,966.1 811.7,959.3 812.0,959.3 812.5,965.3 813.5,965.7 814.5,966.2 815.0,966.0 815.0,966.3 816.0,965.9 816.5,959.0 817.1,959.0 817.6,968.0 818.6,965.2 819.1,958.9 820.1,958.9 820.6,968.3 821.6,966.4 822.1,972.1 823.1,972.1 823.6,966.1 824.6,966.8 825.6,967.8 826.6,969.6 827.6,968.1 828.1,974.6 829.1,974.6 829.6,969.4 830.6,966.1 831.1,961.4 832.6,961.4 833.1,967.8 834.1,968.4 834.6,972.7 834.9,972.7 835.4,968.3 836.4,965.2 836.9,959.8 837.2,959.8 837.7,965.8 838.7,964.2 839.7,967.8 840.7,967.1 841.2,974.1 841.8,974.1 842.3,969.6 843.3,967.5 844.3,964.7 845.3,967.9 846.3,969.3 847.3,968.2 848.3,968.1 849.3,968.5 849.8,961.6 850.8,961.6 851.3,964.5 852.3,966.4 853.3,969.0 854.3,966.7 854.8,960.9 855.1,960.9 855.6,966.0 856.6,968.1 857.6,967.8 858.6,968.1 859.6,964.3 860.1,960.3 860.7,960.3 861.2,968.2 862.2,965.6 863.2,969.8 864.2,967.3 865.2,966.5 865.7,961.7 866.0,961.7 866.5,965.2 867.5,964.8 868.5,968.0 869.5,966.7 870.0,971.5 870.6,971.5 871.1,969.6 872.0,967.0 872.0,968.1 873.5,967.9 875.0,968.1 876.5,968.4 878.0,967.9 879.5,968.4 881.0,968.6 882.5,967.8 884.0,968.1 885.5,967.8 887.0,967.9 888.5,968.2 890.0,968.1 891.5,968.1 893.0,967.8 894.5,968.1 895.0,970.5 896.5,970.5 897.0,968.6 898.5,968.5 900.0,968.3 901.5,968.1 903.0,967.8 904.5,968.4 906.0,968.5 907.5,967.8 909.0,967.7 910.5,967.9 912.0,968.9 913.5,968.8 915.0,967.8 916.5,968.1 918.0,968.2 919.5,968.1 921.0,967.9 922.5,968.7 924.0,967.8 925.5,968.7 927.0,968.9 928.5,967.8 930.0,968.2 931.5,968.9 933.0,968.5 934.5,968.0 936.0,968.5 937.5,968.9 939.0,968.3 940.5,968.1 942.0,968.5 942.5,966.0 944.0,966.0 944.5,968.3 946.0,968.1 947.5,968.5 949.0,968.8 950.5,968.1 952.0,968.4 953.5,967.9 955.0,968.1 956.5,968.9 958.0,968.7 959.5,968.9 961.0,968.7 962.5,968.5 964.0,968.1 965.5,968.8 967.0,968.5 968.5,968.1 970.0,967.7 971.5,968.5 973.0,967.8 974.5,968.1 976.0,968.2 977.5,968.4 979.0,967.8 980.5,968.8 982.0,967.8 983.5,968.0 985.0,968.3 986.5,968.3 988.0,968.0 989.5,967.8 991.0,968.4 992.5,968.2 994.0,968.2 995.5,968.4 997.0,968.6 998.5,968.9 1000.0,967.8 1001.5,968.2 1003.0,968.9 1004.0,968.3 1005.0,620.0 1008.0,620.6 1009.3,616.7 1010.6,619.1 1011.9,615.6 1013.2,617.4 1014.5,621.9 1015.8,623.5 1017.1,623.3 1018.4,623.8 1019.7,617.0 1021.0,618.6 1022.3,621.6 1023.6,616.6 1024.9,622.1 1026.2,616.7 1027.5,616.4 1028.8,616.0 1030.1,621.6 1031.4,617.2 1032.7,623.0 1034.0,613.3 1035.3,626.3 1036.6,618.1 1037.9,623.5 1039.2,620.3 1040.5,622.8 1041.8,615.6 1043.1,616.9 1044.4,623.4 1045.7,620.2 1047.0,621.6 1048.3,624.2 1049.6,619.0 1050.9,616.8 1052.2,617.4 1053.5,617.3 1054.8,618.7 1056.1,620.7 1057.4,613.5 1058.7,613.8 1060.0,621.0 1061.3,621.5 1062.6,618.0 1063.9,617.9 1065.2,620.3 1066.5,619.3 1067.8,622.4 1069.1,622.5 1070.4,621.2 1071.7,618.0 1073.0,623.4 1074.3,621.6 1075.6,622.4 1076.9,620.1 1078.2,618.7 1079.5,614.9 1080.8,618.4 1082.1,619.8 1083.4,620.7 1084.7,610.3 1086.0,619.6 1087.3,620.6 1088.6,613.0 1089.9,618.3 1091.2,620.5 1092.5,618.6 1093.8,617.2 1095.1,620.7 1096.4,618.7 1097.7,619.4 1099.0,616.1 1100.3,623.6 1101.6,614.3 1102.9,617.9 1104.2,617.5 1105.5,617.3 1106.8,623.3 1108.1,617.3 1109.4,624.2 1110.7,616.2 1112.0,623.4 1113.3,620.3 1114.6,623.4 1115.9,626.7 1117.2,622.2 1118.5,619.1 1119.8,614.0 1121.1,615.9 1122.4,618.5 1123.7,620.9 1125.0,613.0 1126.3,620.6 1127.6,616.0 1128.9,622.0 1130.2,618.7 1131.5,616.2 1132.8,619.3 1134.1,620.8 1135.4,621.4 1136.7,618.5 1138.0,617.8 1139.3,622.4 1140.6,618.3 1141.9,624.3 1143.2,618.0 1144.5,626.0 1145.8,619.8 1147.1,622.5 1148.4,628.6 1149.7,612.9 1151.0,616.0 1152.3,625.2 1153.6,621.3 1154.9,622.1 1156.2,610.9 1157.5,617.7 1158.8,620.0 1160.1,618.6 1161.4,619.6 1162.7,617.8 1164.0,616.1 1165.3,619.1 1166.6,616.0 1167.9,619.2 1169.2,624.0 1170.5,617.5 1171.8,617.9 1173.1,621.8 1174.4,621.3 1175.7,628.1 1177.0,616.9 1178.3,623.3 1179.6,622.3 1180.9,618.0 1182.2,619.9 1183.5,617.0 1184.8,620.9 1186.1,620.7 1187.4,617.4 1188.7,618.7 1190.0,627.8 1191.3,624.5 1192.6,608.8 1193.9,615.6 1195.2,616.9 1196.5,620.3 1197.8,616.3 1199.1,623.8 1200.4,623.4 1201.7,620.1 1203.0,616.8 1204.3,617.6 1205.6,609.5 1206.9,618.3 1208.2,616.6 1209.5,616.7 1210.0,620.0 1211.0,621.0" stroke="#5B9BD5"/>
<polyline points="379.0,966.0 380.6,965.4 382.2,967.0 383.8,965.8 385.4,967.6 387.0,967.3 388.6,966.5 390.2,967.4 391.8,968.0 393.4,969.3 395.0,968.5 396.5,968.1 398.0,967.8 399.5,969.8 401.0,969.5 402.6,969.2 404.1,968.0 405.6,967.7 407.1,968.0 408.6,967.5 410.1,967.4 411.6,968.7 413.1,968.4 414.7,968.8 416.2,968.3 417.7,967.4 419.2,969.2 420.7,969.1 422.2,968.8 423.7,968.8 425.2,969.2 426.7,970.0 428.3,969.7 429.8,969.3 431.3,968.5 432.8,968.3 434.3,968.6 435.8,970.0 437.3,968.5 438.8,968.5 440.3,968.6 441.9,967.9 443.4,970.2 444.9,967.6 446.4,969.2 447.9,970.0 449.4,968.3 450.9,969.2 452.4,968.6 454.0,968.3 455.5,968.2 457.0,968.0 458.5,969.9 460.0,969.0 462.0,975.0 464.0,975.0 466.0,973.5 467.5,974.3 469.0,971.9 470.6,973.4 472.1,972.2 473.6,972.8 475.1,972.3 476.6,971.5 478.1,973.0 479.7,970.3 481.2,972.0 482.7,972.0 484.2,970.9 485.7,970.9 487.3,971.8 488.8,969.6 490.3,970.4 491.8,970.5 493.3,969.3 494.8,969.9 496.4,968.9 497.9,969.0 499.4,969.0 500.9,969.0 502.4,967.9 504.0,968.4 505.5,968.0 507.0,967.0 508.5,967.7 510.0,966.6 511.5,968.1 513.1,966.7 514.6,967.2 516.1,966.4 517.6,966.1 519.1,965.2 520.7,964.8 522.2,966.6 523.7,965.4 525.2,965.1 526.7,964.9 528.2,965.5 529.8,963.8 531.3,963.4 532.8,964.0 534.3,964.9 535.8,964.0 537.3,964.5 538.8,965.0 540.3,965.3 541.8,965.2 543.4,963.1 544.9,964.1 546.4,965.3 547.9,965.3 549.4,963.5 550.9,963.7 552.4,964.0 553.9,963.6 555.4,964.3 556.9,965.6 558.4,964.9 559.9,964.7 561.4,963.8 562.9,964.7 564.5,966.3 566.0,965.6 567.5,965.0 569.0,965.1 570.5,966.0 572.0,965.9 573.5,965.3 576.0,968.0 577.5,967.2 579.0,968.7 580.5,968.0 582.0,968.6 583.5,967.9 585.0,968.4 586.5,968.5 588.0,968.7 589.5,967.9 591.0,968.5 592.5,969.6 594.0,968.4 595.5,968.8 597.0,970.3 598.5,969.3 600.0,970.0 601.5,969.6 603.0,969.4 604.5,971.0 606.0,969.2 607.5,970.7 609.0,971.3 610.5,969.6 612.0,970.3 613.5,971.3 615.0,970.9 616.5,970.3 618.0,969.5 619.5,970.6 621.0,970.5 622.5,971.5 624.0,970.4 625.5,970.8 627.0,971.5 628.5,971.9 630.0,970.8 631.5,971.0 633.0,971.5 634.5,972.5 636.0,970.6 637.5,972.7 639.0,972.1 640.5,971.3 642.0,972.1 643.5,971.3 645.0,970.7 646.5,972.5 648.0,971.6 649.5,972.0 651.0,972.0 652.5,973.1 654.0,972.8 655.5,971.0 657.0,972.5 658.5,972.2 660.0,972.3 661.5,973.3 663.0,972.3 664.5,972.5 666.0,973.7 667.5,972.5 669.0,972.7 670.5,972.9 672.0,973.7 673.5,973.4 675.0,973.6 676.5,972.8 678.0,971.9 679.5,973.6 681.0,973.4 682.5,974.0 684.0,974.1 685.5,972.4 687.0,972.8 688.5,972.4 690.0,974.4 691.5,972.6 693.0,972.6 694.5,974.4 696.0,974.0 697.5,972.7 699.0,974.4 700.5,974.6 702.0,974.0 703.5,973.0 705.0,974.7 706.5,974.0 708.0,974.5 709.5,975.7 711.0,975.3 712.5,975.5 714.0,973.6 715.5,974.2 717.0,974.7 718.5,973.5 720.0,976.1 721.5,974.3 723.0,974.3 724.5,974.5 726.0,974.4 727.5,976.0 729.0,975.3 730.5,975.2 732.0,975.1 733.5,974.2 735.0,974.9 736.5,976.4 738.0,976.3 739.5,976.5 741.0,975.0 742.5,974.9 744.0,974.6 745.5,975.9 747.0,975.6 748.5,975.8 750.0,976.0 751.8,976.2 753.5,976.7 755.2,976.4 757.0,977.0 758.6,977.4 760.2,975.4 761.8,976.9 763.4,975.5 765.0,975.0 766.5,973.6 768.0,974.1 769.6,974.5 771.1,974.0 772.6,974.2 774.1,973.4 775.7,973.0 777.2,974.2 778.7,972.7 780.2,973.6 781.7,973.6 783.3,972.9 784.8,972.3 786.3,973.4 787.8,971.9 789.3,972.9 790.9,970.5 792.4,971.3 793.9,971.6 795.4,969.9 797.0,971.8 798.5,969.6 800.0,970.5 801.5,968.8 803.0,965.7 804.6,965.7 806.1,962.8 807.6,961.4 809.1,958.7 810.6,957.2 812.2,955.2 813.7,952.2 815.2,950.8 816.7,947.5 818.3,946.5 819.8,943.1 821.3,941.8 822.8,943.4 824.4,941.2 825.9,940.6 827.4,940.2 829.0,941.6 830.5,941.6 832.0,940.1 833.5,940.0 835.0,940.8 836.6,939.9 838.1,941.7 839.6,941.2 841.1,940.0 842.7,939.9 844.2,941.7 845.7,940.1 847.2,942.3 848.7,941.0 850.3,941.0 851.8,942.0 853.3,941.5 854.8,942.2 856.3,941.3 857.9,943.4 859.4,942.0 860.9,943.5 862.4,941.8 864.0,943.6 865.5,944.2 867.0,943.1 868.5,934.0 870.0,938.6 871.5,942.5 873.0,948.5 874.5,949.3 876.1,951.0 877.6,951.0 879.1,952.9 880.7,952.8 882.2,954.9 883.7,956.6 885.3,956.9 886.8,958.6 888.3,958.2 889.9,961.2 891.4,961.4 892.9,960.9 894.4,963.4 896.0,964.1 897.5,964.4 899.0,963.8 900.5,963.6 902.0,964.2 903.6,965.7 905.1,965.5 906.6,967.1 908.1,965.4 909.6,966.8 911.2,968.3 912.7,968.0 914.2,968.4 915.7,967.6 917.2,968.2 918.8,969.0 920.3,971.1 921.8,971.4 923.3,970.3 924.8,972.6 926.4,970.7 927.9,972.6 929.4,974.0 930.9,972.9 932.4,974.9 934.0,974.6 935.5,973.5 937.0,975.1 938.5,974.8 940.0,975.3 941.5,975.0 943.0,976.4 944.5,975.1 946.0,976.9 947.5,975.8 949.1,975.4 950.6,976.8 952.1,975.8 953.6,977.1 955.1,977.9 956.6,977.6 958.1,977.4 959.6,976.5 961.1,977.9 962.6,977.0 964.1,978.6 965.6,977.4 967.1,978.8 968.6,978.3 970.1,978.6 971.7,979.5 973.2,978.4 974.7,978.6 976.2,980.7 977.7,979.3 979.2,980.8 980.7,981.1 982.2,980.2 983.7,979.5 985.2,979.6 986.7,981.8 988.2,980.0 989.7,981.1 991.2,981.4 992.8,980.5 994.3,981.6 995.8,981.0 997.3,982.1 998.8,982.2 1000.3,982.0 1001.8,981.7 1003.3,982.7 1006.0,984.5 1007.5,984.2 1009.1,983.7 1010.6,983.5 1012.1,983.8 1013.6,985.5 1015.2,984.5 1016.7,985.5 1018.2,983.2 1019.8,985.7 1021.3,984.5 1022.8,985.3 1024.4,984.7 1025.9,985.0 1027.4,983.8 1028.9,985.2 1030.5,983.6 1032.0,984.5 1033.3,987.6 1034.6,978.1 1035.9,976.0 1037.1,974.3 1038.4,975.0 1039.7,973.0 1041.0,966.9 1042.3,964.9 1043.6,966.2 1044.8,961.6 1046.1,961.7 1047.4,956.5 1048.7,956.0 1049.9,956.8 1051.1,950.8 1052.3,950.0 1053.5,948.7 1054.7,950.4 1055.9,949.8 1057.1,947.3 1058.3,942.2 1059.6,941.0 1060.8,941.1 1062.0,941.1 1063.2,941.1 1064.4,937.1 1065.6,937.2 1066.8,935.4 1068.0,933.6 1069.2,932.2 1070.4,930.8 1071.6,930.9 1072.8,926.7 1074.1,929.6 1075.3,925.5 1076.5,927.0 1077.7,925.5 1078.9,925.0 1080.1,924.3 1081.3,924.2 1082.6,923.1 1083.8,919.5 1085.0,920.0 1086.4,919.7 1087.8,919.1 1089.2,920.1 1090.6,917.4 1092.1,919.8 1093.5,921.1 1095.0,922.0 1096.2,919.4 1097.5,920.8 1098.8,917.6 1100.0,915.0 1101.2,916.8 1102.4,916.6 1103.7,916.9 1104.9,921.2 1106.1,919.7 1107.3,920.8 1108.5,920.7 1109.7,923.0 1110.9,923.1 1112.1,922.2 1113.3,928.1 1114.5,928.6 1115.7,927.5 1116.9,927.8 1118.2,926.3 1119.4,927.2 1120.7,927.4 1121.9,926.3 1123.1,927.5 1124.4,930.3 1125.6,927.5 1126.9,930.6 1128.1,929.3 1129.3,931.3 1130.6,926.4 1131.8,927.0 1133.1,929.6 1134.3,930.6 1135.6,932.0 1136.8,930.9 1138.0,927.8 1139.3,928.5 1140.5,930.0 1141.8,928.9 1143.0,929.2 1144.2,931.3 1145.5,932.0 1146.7,931.4 1148.0,925.4 1149.2,930.8 1150.6,926.1 1152.0,922.0 1153.4,930.0 1154.8,941.2 1156.2,937.4 1157.6,946.0 1158.9,946.0 1160.2,950.5 1161.5,952.0 1162.7,951.1 1164.0,952.4 1165.3,960.9 1166.6,955.7 1167.9,954.6 1169.2,957.5 1170.4,956.4 1171.7,959.1 1173.0,961.4 1174.3,961.0 1175.5,959.4 1176.7,963.6 1177.9,963.1 1179.1,961.2 1180.3,961.4 1181.5,965.2 1182.7,961.5 1183.9,965.7 1185.1,962.8 1186.3,962.0 1187.5,963.7 1188.7,967.0 1189.9,963.4 1191.1,964.9 1192.3,966.2 1193.5,964.8 1194.7,967.4 1195.9,966.7 1197.1,968.0 1198.3,966.3 1199.5,967.5 1200.7,968.3 1201.9,974.7 1203.1,970.5 1204.3,967.2 1205.5,969.1 1206.7,970.0 1207.9,969.4 1209.3,971.9 1210.6,970.1 1212.0,972.0" stroke="#70AD47"/>
<polyline points="379.0,970.0 380.5,970.8 382.0,970.2 383.5,970.3 385.0,970.5 386.5,969.8 388.0,970.8 389.5,970.4 391.0,969.7 392.5,969.8 394.0,970.6 395.5,969.7 397.0,969.4 398.5,970.7 400.0,970.1 401.5,970.0 403.0,970.3 404.5,970.7 406.0,969.3 407.5,969.7 409.0,969.2 410.5,969.8 412.0,970.0 413.5,970.6 415.0,970.3 416.5,970.1 418.0,969.8 419.5,970.1 421.0,969.6 422.5,970.6 424.0,970.5 425.5,970.6 427.0,969.4 428.5,970.3 430.0,970.5 431.5,970.0 433.0,970.7 434.5,970.7 436.0,970.4 437.5,970.6 439.0,970.3 440.5,970.7 442.0,969.3 443.5,970.4 445.0,970.4 446.5,970.2 448.0,969.6 449.5,969.2 451.0,970.2 452.5,970.6 454.0,969.6 455.5,969.5 457.0,969.5 458.5,969.3 460.0,970.3 461.5,970.0 462.5,978.0 464.2,978.3 466.0,976.9 467.5,977.3 469.0,976.3 470.5,976.8 472.0,975.5 473.5,976.7 475.0,975.6 476.5,974.9 478.0,975.9 479.5,974.8 481.0,974.9 482.5,974.4 484.0,974.9 485.5,974.9 487.0,975.2 488.5,973.7 490.0,975.0 491.5,973.5 493.0,973.6 494.5,974.1 496.0,973.5 497.5,973.3 499.0,973.5 500.5,972.8 502.0,973.6 503.5,972.4 505.0,973.4 506.5,973.2 508.0,972.5 509.5,971.5 511.0,972.7 512.5,972.0 514.1,970.7 515.6,971.2 517.2,970.6 518.7,969.6 520.3,970.2 521.9,970.0 523.4,969.3 525.0,968.6 526.6,968.4 528.1,968.1 529.7,967.0 531.2,967.8 532.8,966.7 534.3,967.6 535.8,967.3 537.3,967.7 538.8,966.6 540.3,967.8 541.8,966.2 543.4,967.0 544.9,966.4 546.4,967.1 547.9,967.5 549.4,967.6 550.9,967.2 552.4,967.0 553.9,966.8 555.4,967.2 556.9,967.1 558.4,967.0 559.9,968.0 561.4,967.6 562.9,967.6 564.5,967.2 566.0,968.1 567.5,967.3 569.0,967.4 570.5,968.0 572.0,968.3 573.5,968.0 576.0,970.0 577.5,970.9 579.0,970.6 580.5,971.0 582.0,971.0 583.5,970.7 585.0,970.8 586.5,969.7 588.0,970.0 589.5,969.7 591.0,971.3 592.5,971.1 594.0,971.0 595.5,970.4 597.0,970.6 598.5,970.3 600.0,971.0 601.5,971.3 603.0,972.0 604.5,970.9 606.0,970.5 607.5,970.8 609.0,971.2 610.5,972.2 612.0,972.1 613.5,971.6 615.0,971.0 616.5,971.1 618.0,971.3 619.5,972.5 621.0,972.0 622.5,973.0 624.0,972.9 625.5,972.8 627.0,972.3 628.5,973.0 630.0,971.8 631.5,971.9 633.0,972.7 634.5,972.7 636.0,972.3 637.5,972.4 639.0,972.1 640.5,973.7 642.0,973.5 643.5,973.9 645.0,974.1 646.5,973.2 648.0,973.8 649.5,973.2 651.0,974.1 652.5,974.2 654.0,973.0 655.5,972.9 657.0,973.3 658.5,974.0 660.0,973.7 661.5,973.2 663.0,974.7 664.5,974.7 666.0,974.2 667.5,973.5 669.0,975.1 670.5,974.5 672.0,973.8 673.5,974.3 675.0,974.9 676.5,975.5 678.0,974.8 679.5,975.2 681.0,975.0 682.5,974.5 684.0,974.6 685.6,975.9 687.1,975.0 688.6,974.5 690.1,975.4 691.7,974.6 693.2,974.8 694.7,975.3 696.2,975.6 697.7,975.7 699.3,975.9 700.8,975.5 702.3,974.8 703.8,976.1 705.3,974.9 706.9,975.7 708.4,975.6 709.9,976.1 711.4,976.3 713.0,975.4 714.5,976.2 716.0,976.3 717.5,976.0 719.0,975.4 720.6,976.9 722.1,976.4 723.6,975.4 725.1,975.8 726.7,977.2 728.2,975.9 729.7,976.2 731.2,977.0 732.7,977.1 734.3,976.8 735.8,977.0 737.3,975.8 738.8,975.9 740.3,977.6 741.9,977.3 743.4,976.0 744.9,976.0 746.4,976.4 748.0,977.7 749.5,976.5 751.0,977.0 752.5,977.6 754.0,978.3 755.5,978.0 757.0,978.0 758.6,978.4 760.2,976.8 761.8,976.2 763.4,975.5 765.0,976.0 766.5,976.3 768.0,974.9 769.6,976.3 771.1,975.7 772.6,974.6 774.1,975.5 775.7,974.2 777.2,974.6 778.7,973.7 780.2,974.8 781.7,974.8 783.3,974.7 784.8,972.8 786.3,974.2 787.8,973.5 789.3,973.8 790.9,973.0 792.4,973.1 793.9,972.9 795.4,973.1 797.0,971.6 798.5,971.4 800.0,972.0 801.5,970.1 803.0,967.7 804.6,965.9 806.1,963.2 807.6,962.6 809.1,959.3 810.6,958.8 812.2,956.8 813.7,954.2 815.2,952.3 816.7,950.4 818.3,950.2 819.8,948.2 821.3,947.4 822.8,945.6 824.4,946.0 825.9,943.9 827.4,945.8 828.9,947.3 830.5,948.6 832.0,951.6 833.5,953.0 835.0,953.7 836.5,953.7 838.1,952.4 839.6,953.0 841.1,952.9 842.6,953.8 844.2,952.7 845.7,953.6 847.2,954.3 848.8,954.0 850.3,952.7 851.8,952.8 853.3,953.0 854.9,954.0 856.4,953.9 857.9,953.8 859.4,954.5 860.9,955.1 862.5,955.7 864.0,956.8 865.5,957.5 867.0,958.7 868.6,959.0 870.1,959.8 871.6,960.0 873.1,961.1 874.6,961.4 876.2,961.6 877.7,960.7 879.2,962.3 880.7,963.0 882.3,962.6 883.8,963.8 885.3,962.9 886.8,964.7 888.3,964.2 889.9,965.1 891.4,964.6 892.9,965.1 894.4,965.6 895.9,965.9 897.5,965.9 899.0,966.9 900.5,968.3 902.0,968.1 903.6,969.0 905.1,969.1 906.6,969.0 908.1,970.0 909.6,970.6 911.2,970.6 912.7,970.1 914.2,970.4 915.7,971.1 917.2,970.8 918.8,971.6 920.3,973.1 921.8,973.6 923.3,972.9 924.8,974.0 926.4,974.4 927.9,975.0 929.4,975.2 930.9,975.1 932.4,974.7 934.0,976.4 935.5,975.9 937.0,976.6 938.5,977.0 940.0,976.6 941.6,977.1 943.1,978.0 944.6,976.7 946.1,977.5 947.7,977.8 949.2,977.8 950.7,978.6 952.2,977.8 953.8,978.9 955.3,978.6 956.8,979.3 958.3,977.8 959.9,978.2 961.4,978.4 962.9,979.7 964.4,978.2 966.0,978.8 967.5,979.8 969.0,980.4 970.5,979.1 972.1,979.7 973.6,980.3 975.1,980.4 976.6,980.7 978.2,980.8 979.7,980.1 981.2,980.2 982.7,979.9 984.3,981.3 985.8,980.5 987.3,981.2 988.9,981.1 990.5,982.6 992.1,982.4 993.7,982.6 995.3,983.0 996.9,983.2 998.5,983.7 1000.1,983.2 1001.7,983.1 1003.3,984.2 1005.0,984.0 1006.8,985.3 1008.4,984.5 1009.9,985.2 1011.5,984.8 1013.1,984.8 1014.7,985.5 1016.2,986.4 1017.8,986.0 1019.4,985.3 1021.0,986.2 1022.5,985.2 1024.1,985.1 1025.7,985.5 1027.3,985.8 1028.8,986.3 1030.4,986.0 1032.0,986.1 1033.6,985.1 1035.1,982.6 1036.7,982.8 1038.2,980.4 1039.8,979.9 1041.4,977.1 1042.9,977.2 1044.5,974.7 1046.1,974.5 1047.6,973.0 1049.2,971.4 1050.8,969.3 1052.3,967.5 1053.9,966.5 1055.4,966.4 1057.0,964.3 1058.6,962.7 1060.2,962.7 1061.7,961.6 1063.3,960.8 1064.9,959.0 1066.5,958.0 1068.0,957.0 1069.6,957.7 1071.2,955.7 1072.8,955.2 1074.3,954.1 1075.9,952.6 1077.5,951.3 1079.0,950.3 1080.6,950.9 1082.2,949.3 1083.8,948.2 1085.3,949.2 1086.9,947.6 1088.5,947.8 1090.0,946.3 1091.6,947.0 1093.2,945.5 1094.8,945.3 1096.3,945.1 1097.9,943.9 1099.5,943.6 1101.0,944.1 1102.6,942.7 1104.2,942.4 1105.7,942.7 1107.3,941.7 1108.9,941.4 1110.5,941.6 1112.0,941.8 1113.6,942.3 1115.2,942.5 1116.8,943.2 1118.3,943.1 1119.9,944.1 1121.5,942.8 1123.0,944.1 1124.6,944.6 1126.2,943.8 1127.8,943.6 1129.3,944.6 1130.9,944.2 1132.5,945.1 1134.1,945.8 1135.6,947.0 1137.2,946.7 1138.8,947.5 1140.3,949.0 1141.9,949.2 1143.5,950.1 1145.0,951.2 1146.6,951.4 1148.2,952.1 1149.8,953.4 1151.3,954.4 1152.9,956.0 1154.5,956.1 1156.0,956.0 1157.6,957.6 1159.2,957.8 1160.7,959.5 1162.3,959.9 1163.9,961.2 1165.4,962.1 1167.0,962.7 1168.6,962.1 1170.2,964.3 1171.7,964.3 1173.3,964.5 1174.9,965.1 1176.4,967.1 1178.0,966.7 1179.6,967.2 1181.1,968.2 1182.7,969.4 1184.2,970.5 1185.7,970.1 1187.2,971.0 1188.7,970.2 1190.2,971.2 1191.8,971.4 1193.3,971.5 1194.8,972.7 1196.3,972.6 1197.8,972.5 1199.3,974.5 1200.8,973.9 1202.3,973.8 1203.8,973.8 1205.4,975.4 1206.9,975.5 1208.4,975.0 1209.9,976.2 1211.4,977.1 1212.9,977.0" stroke="#264478"/>
<polyline points="379.0,907.0 381.1,907.0 383.2,906.8 385.3,907.0 387.4,907.1 389.5,907.1 391.6,906.7 393.7,907.3 395.8,907.4 397.9,907.2 400.0,907.0 402.0,907.4 404.0,907.1 406.0,907.7 408.0,907.1 410.0,907.3 412.0,907.7 414.0,908.1 416.0,907.4 418.0,907.6 420.0,908.0 422.0,907.7 424.0,908.1 426.0,908.0 428.0,908.1 430.0,908.7 432.0,908.7 434.0,909.1 436.0,908.7 438.0,909.1 440.0,909.0 442.0,908.4 444.0,909.0 446.0,908.2 448.0,908.2 450.0,908.0 452.0,908.2 454.0,907.6 456.0,907.8 458.0,907.3 460.0,907.0 461.8,907.0 462.6,970.0 464.5,950.0 468.0,925.0 470.5,917.2 473.0,910.0 475.0,909.5 477.0,908.1 479.0,907.9 481.0,906.6 483.0,905.6 485.0,905.0 487.1,905.3 489.3,904.6 491.4,904.5 493.6,904.3 495.7,904.4 497.9,903.7 500.0,904.0 502.0,904.1 504.0,904.1 506.0,904.9 508.0,904.4 510.0,905.1 512.0,905.0 514.0,905.4 516.0,905.7 518.0,906.0 520.0,906.0 522.0,905.6 524.0,905.7 526.0,905.5 528.0,906.3 530.0,905.5 532.0,905.5 534.0,905.8 536.0,905.8 538.0,906.0 540.0,905.2 542.0,905.4 544.0,905.3 546.0,905.6 548.0,905.4 550.0,905.4 552.0,905.8 554.0,905.5 556.0,905.7 558.0,905.7 560.0,905.1 562.0,905.6 564.0,905.1 566.0,904.7 568.0,905.5 570.0,904.7 572.0,904.6 574.0,905.0 577.0,906.0 579.2,905.6 581.3,905.5 583.5,905.9 585.7,905.7 587.8,905.1 590.0,905.0 592.0,904.9 594.0,905.0 596.0,904.8 598.0,904.5 600.0,904.2 602.0,904.0 604.0,904.4 606.0,905.3 608.0,906.4 610.0,907.0 612.0,907.1 614.0,907.4 616.0,907.5 618.0,907.6 620.0,907.0 622.0,906.9 624.0,907.7 626.0,907.5 628.0,907.2 630.0,907.7 632.0,907.3 634.0,907.4 636.0,907.5 638.0,907.7 640.0,907.9 642.0,907.4 644.0,908.1 646.0,908.0 648.0,907.9 650.0,908.0 652.0,908.2 654.0,908.3 656.0,907.6 658.0,908.0 660.0,908.2 662.0,908.2 664.0,908.1 666.0,907.7 668.0,908.4 670.0,908.3 672.0,907.8 674.0,907.9 676.0,908.4 678.0,907.7 680.0,907.9 682.0,908.4 684.0,908.4 686.0,907.8 688.0,908.2 690.0,907.9 692.0,908.1 694.0,908.2 696.0,907.7 698.0,907.8 700.0,907.7 702.0,907.8 704.0,907.6 706.0,907.7 708.0,907.9 710.0,907.9 712.0,907.6 714.0,908.1 716.0,908.4 718.0,908.1 720.0,907.9 722.0,908.2 724.0,907.9 726.0,907.7 728.0,908.0 730.0,907.6 732.0,908.2 734.0,907.7 736.0,907.9 738.0,908.4 740.0,908.2 742.0,908.3 744.0,908.1 746.0,908.1 748.0,908.2 750.0,908.4 752.0,908.0 754.0,970.0 756.0,950.4 758.0,931.6 760.0,912.0 762.2,911.3 764.4,910.7 766.6,910.4 768.6,910.3 770.6,909.6 772.6,909.4 774.6,909.0 776.6,908.3 778.6,907.5 780.6,906.9 782.6,907.0 784.6,906.7 786.6,905.9 788.6,905.3 790.6,904.8 792.6,904.5 794.6,904.5 796.6,903.5 798.6,903.5 800.7,903.4 802.8,903.5 804.9,904.0 807.0,904.3 809.1,903.6 811.2,903.8 813.3,904.6 815.3,904.7 817.4,904.1 819.5,904.4 821.6,904.6 823.7,904.5 825.8,904.7 827.9,904.9 830.0,905.0 832.2,904.9 834.5,904.8 836.7,905.0 839.0,905.2 841.2,905.2 843.5,905.8 845.7,905.8 847.8,906.7 849.8,907.0 851.9,908.1 854.0,908.8 856.1,909.1 858.1,909.9 860.2,910.4 862.3,911.7 864.4,912.1 866.4,912.3 868.5,913.4 870.7,912.5 872.9,912.5 875.1,911.7 877.2,911.4 879.4,910.4 881.6,910.4 883.8,909.6 885.9,909.8 887.9,909.1 890.0,909.5 892.1,909.1 894.2,909.5 896.2,909.5 898.3,909.4 900.4,908.8 902.5,908.7 904.5,909.1 906.6,908.9 908.6,909.0 910.7,908.6 912.7,908.7 914.8,909.1 916.8,908.7 918.8,909.2 920.9,908.9 922.9,908.9 925.0,909.1 927.0,909.2 929.0,909.4 931.1,908.9 933.1,909.5 935.2,909.1 937.2,909.2 939.2,909.5 941.3,909.6 943.3,909.6 945.4,909.9 947.4,909.3 949.4,909.4 951.5,909.7 953.5,909.4 955.5,909.3 957.6,909.4 959.6,910.0 961.7,910.0 963.7,910.0 965.7,910.2 967.8,910.1 969.8,909.7 971.9,909.7 973.9,910.1 975.9,909.6 978.0,910.1 980.0,909.7 982.1,909.7 984.1,910.1 986.1,909.8 988.2,910.5 990.2,910.5 992.3,910.2 994.3,910.0 996.3,909.9 998.4,910.3 1000.4,910.4 1002.5,910.2 1004.5,910.4 1005.5,970.0 1008.0,960.0 1010.0,940.0 1013.0,910.0 1016.0,906.6 1018.1,906.6 1020.2,906.3 1022.3,906.3 1024.4,905.6 1026.5,905.4 1028.6,905.5 1030.7,905.4 1032.8,905.0 1034.9,905.2 1037.0,904.9 1039.0,904.6 1041.1,904.7 1043.1,904.9 1045.2,905.1 1047.2,905.1 1049.3,904.8 1051.3,904.9 1053.4,905.3 1055.4,905.3 1057.4,905.0 1059.5,904.5 1061.5,904.9 1063.6,905.0 1065.6,904.7 1067.7,904.5 1069.7,905.3 1071.8,905.3 1073.8,904.9 1075.8,904.6 1077.8,904.9 1079.8,905.1 1081.8,904.8 1083.8,904.6 1085.8,905.3 1087.8,905.3 1089.8,905.0 1091.8,904.7 1093.8,905.0 1095.8,904.8 1097.8,905.6 1099.8,904.8 1101.8,905.0 1103.8,905.5 1105.8,905.0 1107.8,905.0 1109.8,904.9 1111.8,905.1 1113.8,905.4 1115.8,905.7 1117.8,905.1 1119.8,905.2 1121.8,905.7 1123.8,905.4 1125.8,905.4 1127.8,905.2 1129.8,905.3 1131.8,906.0 1133.8,905.3 1135.8,905.4 1137.8,905.9 1139.8,906.0 1141.9,906.1 1143.9,905.7 1145.9,906.2 1147.9,905.9 1149.9,905.6 1151.9,905.8 1153.9,906.0 1155.9,906.1 1157.9,905.6 1159.9,905.7 1161.9,906.4 1163.9,905.6 1165.9,906.3 1167.9,905.9 1169.9,905.8 1171.9,905.8 1173.9,906.1 1175.9,906.6 1177.9,905.8 1179.9,906.5 1181.9,906.0 1183.9,905.9 1185.9,906.5 1187.9,906.1 1189.9,906.0 1191.9,906.2 1193.9,906.6 1195.9,906.7 1197.9,906.4 1199.9,906.0 1201.9,906.7 1203.9,906.5 1205.9,906.8 1207.9,906.5 1210.0,907.7 1212.0,908.0" stroke="#9E480E"/>
<polyline points="379.2,926.7 381.5,927.0 383.7,928.0 386.0,928.4 388.2,928.4 390.5,928.9 392.7,929.4 395.0,930.0 397.0,930.5 399.0,931.1 401.0,931.4 403.0,932.1 405.0,933.0 407.0,933.4 409.1,932.9 411.1,933.1 413.2,933.4 415.2,933.3 417.3,932.7 419.3,933.4 421.4,933.3 423.4,933.5 425.5,933.2 427.5,933.3 429.5,933.3 431.6,932.8 433.6,933.2 435.7,932.9 437.7,933.3 439.8,932.6 441.8,933.0 443.9,932.8 445.9,933.3 448.0,932.8 450.0,933.0 452.3,933.0 454.7,932.7 457.0,932.0 459.4,932.9 461.8,933.0 462.6,975.0 464.0,975.0 466.0,954.6 468.0,935.0 470.0,923.4 472.0,911.0 474.0,910.9 476.0,910.5 478.0,910.2 480.0,909.7 482.0,909.2 484.0,910.0 486.0,909.7 488.0,909.6 490.0,909.5 492.0,909.9 494.0,909.9 496.0,910.0 498.0,909.3 500.0,909.4 502.0,909.3 504.0,909.1 506.0,909.4 508.0,909.0 510.0,909.5 512.0,909.8 514.0,909.2 516.0,909.1 518.0,909.1 520.0,909.7 522.0,909.2 524.0,909.5 526.0,909.4 528.0,909.8 530.0,910.0 532.0,909.3 534.0,909.6 536.0,909.9 538.0,909.5 540.0,909.9 542.0,909.7 544.0,909.3 546.0,909.9 548.0,909.6 550.0,909.1 552.0,909.6 554.0,909.8 556.0,909.5 558.0,909.5 560.0,909.4 562.0,909.9 564.0,909.7 566.0,909.2 568.0,909.4 570.0,909.4 572.0,910.0 574.0,909.5 577.6,915.0 580.0,917.9 582.3,920.1 584.6,923.7 587.0,926.0 589.2,926.2 591.3,927.4 593.5,927.9 595.7,928.9 597.8,929.3 600.0,930.0 602.2,930.4 604.4,931.6 606.5,932.7 608.7,933.4 610.9,933.8 613.0,934.4 615.2,935.8 617.4,936.3 619.5,936.5 621.6,935.8 623.7,936.4 625.8,936.4 627.9,935.8 630.0,935.6 632.1,935.9 634.2,936.0 636.3,935.2 638.4,935.2 640.5,935.1 642.6,935.4 644.7,934.8 646.8,935.0 648.9,934.9 651.0,934.8 653.1,935.1 655.1,934.8 657.2,935.8 659.2,936.0 661.3,935.7 663.4,936.2 665.4,935.7 667.5,936.6 669.5,936.4 671.6,936.8 673.6,937.1 675.7,936.8 677.8,937.5 679.8,937.0 681.9,937.0 683.9,937.6 686.0,937.8 688.0,938.2 690.0,938.2 692.0,938.2 694.0,937.7 696.0,938.1 698.0,937.7 700.0,937.3 702.0,937.7 704.0,937.9 706.0,937.5 708.0,937.6 710.0,937.3 712.0,937.3 714.0,937.4 716.0,937.4 718.0,937.4 720.0,937.0 722.0,936.9 724.0,937.2 726.0,937.5 728.0,937.5 730.0,937.0 732.0,937.0 734.0,937.2 736.0,936.9 738.0,937.3 740.0,937.5 742.0,936.8 744.0,937.2 746.0,937.3 748.0,937.3 750.0,937.2 752.0,937.0 755.0,975.0 757.3,954.2 759.7,932.8 762.0,912.0 764.3,914.2 766.6,915.7 768.9,919.2 771.2,921.4 773.5,925.4 775.8,928.0 777.9,929.0 780.0,929.7 782.1,930.7 784.1,932.4 786.2,933.4 788.3,933.9 790.4,935.2 792.5,936.3 794.6,936.4 796.7,936.8 798.8,936.1 800.9,936.6 803.0,936.3 805.1,934.9 807.1,933.7 809.2,932.5 811.3,931.6 813.3,930.7 815.4,929.4 817.5,927.9 819.6,926.5 821.7,925.2 823.7,923.8 825.8,922.6 827.9,921.4 830.0,920.3 832.1,919.9 834.2,919.2 836.3,919.1 838.4,918.7 840.5,918.9 842.6,918.0 844.7,918.1 846.9,918.8 849.0,918.5 851.2,918.3 853.3,918.8 855.3,919.8 857.4,920.2 859.4,921.1 861.4,921.9 863.5,923.4 865.5,924.1 867.6,925.0 869.7,924.9 871.9,925.3 874.0,925.9 876.1,926.4 878.1,926.7 880.2,927.5 882.2,927.7 884.2,927.9 886.3,929.0 888.3,929.2 890.3,929.1 892.4,930.4 894.4,930.7 896.4,930.8 898.5,931.5 900.5,932.3 902.5,932.2 904.6,932.7 906.6,933.2 908.8,933.3 910.9,933.8 913.1,934.1 915.2,934.5 917.4,934.9 919.5,934.4 921.7,934.9 923.9,935.6 926.0,935.8 928.2,935.9 930.3,936.2 932.5,936.3 934.5,936.2 936.5,936.8 938.5,936.5 940.5,936.4 942.5,936.2 944.5,936.2 946.5,937.0 948.5,936.9 950.5,936.2 952.5,936.5 954.5,936.7 956.5,936.8 958.5,936.7 960.5,937.3 962.5,936.8 964.5,937.0 966.5,937.4 968.5,937.2 970.5,937.1 972.5,937.0 974.5,937.1 976.5,937.3 978.5,937.5 980.5,937.1 982.5,937.2 984.5,937.3 986.5,937.3 988.5,937.9 990.5,937.5 992.5,937.3 994.5,937.4 996.5,938.0 998.5,937.3 1000.5,937.9 1002.5,937.3 1004.5,937.8 1005.5,975.0 1009.0,930.0 1011.0,911.0 1013.5,910.7 1015.5,910.3 1017.5,910.0 1019.5,910.7 1021.5,909.9 1023.5,909.9 1025.6,909.6 1027.6,909.7 1029.6,910.1 1031.6,909.9 1033.6,910.0 1035.6,909.9 1037.6,909.4 1039.6,909.7 1041.6,908.7 1043.7,909.5 1045.7,908.9 1047.7,908.5 1049.7,909.0 1051.7,909.0 1053.7,908.4 1055.7,908.0 1057.7,908.7 1059.7,908.4 1061.7,908.2 1063.8,908.4 1065.8,907.4 1067.8,907.3 1069.8,907.2 1071.8,907.0 1073.8,907.4 1075.8,907.6 1077.8,907.6 1079.8,907.1 1081.8,907.2 1083.8,907.2 1085.8,907.7 1087.8,907.7 1089.8,908.1 1091.8,907.5 1093.8,908.1 1095.8,907.6 1097.8,907.6 1099.8,907.5 1101.8,907.5 1103.8,908.2 1105.8,908.3 1107.8,908.0 1109.8,907.5 1111.8,907.5 1113.8,907.5 1115.8,907.8 1117.8,908.2 1119.8,907.5 1121.8,908.0 1123.8,908.2 1125.8,907.6 1127.8,908.0 1129.8,908.4 1131.8,908.2 1133.8,908.1 1135.8,908.5 1137.8,908.3 1139.8,908.0 1141.9,908.1 1143.9,908.7 1145.9,908.6 1147.9,908.7 1149.9,908.4 1151.9,908.0 1153.9,908.0 1155.9,908.3 1157.9,908.6 1159.9,907.9 1161.9,908.8 1163.9,908.8 1165.9,908.5 1167.9,908.0 1169.9,908.8 1171.9,908.5 1173.9,908.8 1175.9,908.7 1177.9,908.9 1179.9,908.6 1181.9,909.1 1183.9,909.2 1185.9,909.2 1187.9,908.9 1189.9,908.6 1191.9,908.7 1193.9,908.6 1195.9,909.3 1197.9,909.2 1199.9,909.2 1201.9,909.2 1203.9,909.4 1205.9,909.2 1207.9,909.0 1210.4,912.2 1212.9,915.7" stroke="#636363"/>
<polyline points="379.0,972.8 380.5,973.2 382.0,972.5 383.5,973.0 385.0,972.4 386.5,973.4 388.0,972.9 389.5,972.6 391.0,973.5 392.5,972.3 394.0,973.5 395.5,973.3 397.0,972.5 398.5,973.4 400.0,973.0 401.5,973.1 403.0,973.6 404.5,973.2 406.0,973.0 407.5,973.7 409.0,972.6 410.5,973.6 412.0,972.6 413.5,972.9 415.0,972.7 416.5,973.8 418.0,973.2 419.5,973.6 421.0,973.0 422.5,973.7 424.0,973.6 425.5,972.9 427.0,973.4 428.5,973.8 430.0,973.1 431.5,973.7 433.0,973.2 434.5,973.4 436.0,974.2 437.5,974.2 439.0,974.3 440.5,973.6 442.0,973.8 443.5,974.1 445.0,974.1 446.5,973.7 448.0,974.3 449.5,973.7 451.0,974.5 452.5,973.8 454.0,973.3 455.5,974.3 457.0,973.4 458.5,974.2 460.0,973.4 461.5,974.0 463.0,966.0 464.5,964.7 466.0,962.0 467.7,962.5 469.4,963.1 471.1,962.7 472.8,963.8 474.5,964.0 476.1,963.6 477.6,963.1 479.2,963.6 480.7,962.2 482.3,962.6 483.9,961.8 485.4,962.6 487.0,962.4 488.5,960.9 490.1,961.2 491.7,960.9 493.2,961.0 494.8,960.7 496.3,959.9 497.9,960.5 499.5,959.2 501.0,958.8 502.6,959.5 504.1,958.2 505.7,958.5 507.2,957.8 508.7,958.1 510.2,957.6 511.7,957.1 513.2,958.0 514.7,957.1 516.2,957.3 517.7,956.4 519.2,957.1 520.8,955.9 522.3,956.6 523.8,956.0 525.3,956.3 526.8,955.8 528.3,955.3 529.8,955.0 531.3,955.2 532.8,954.5 534.4,954.4 535.9,953.9 537.5,955.1 539.1,954.9 540.7,954.8 542.2,954.8 543.8,954.1 545.4,954.4 547.0,955.0 548.5,955.1 550.1,955.1 551.7,954.0 553.3,954.8 554.8,954.6 556.4,954.4 558.0,954.0 559.6,954.0 561.1,954.5 562.7,954.5 564.2,954.6 565.8,954.3 567.3,954.5 568.9,954.9 570.4,955.2 572.0,955.1 573.5,955.0 576.0,967.0 577.6,966.6 579.1,967.7 580.7,967.0 582.2,967.9 583.8,968.0 585.3,966.8 586.9,967.5 588.4,968.1 590.0,967.5 591.5,967.5 593.0,967.8 594.5,967.6 596.1,967.3 597.6,967.7 599.1,967.7 600.6,968.1 602.1,968.7 603.6,968.7 605.2,969.4 606.7,969.1 608.2,968.8 609.7,969.8 611.2,969.4 612.8,969.4 614.3,970.0 615.8,969.9 617.3,969.6 618.8,970.0 620.3,969.7 621.9,970.8 623.4,969.9 624.9,971.0 626.4,969.9 627.9,969.9 629.4,970.8 631.0,970.5 632.5,971.0 634.0,970.6 635.5,971.7 637.0,971.6 638.5,971.8 640.0,972.2 641.6,972.4 643.1,972.1 644.6,972.3 646.1,971.4 647.6,971.6 649.1,972.3 650.7,973.2 652.2,972.4 653.7,972.8 655.2,972.2 656.7,972.9 658.2,973.7 659.8,973.4 661.3,973.8 662.8,972.8 664.3,973.2 665.8,973.3 667.4,974.3 668.9,973.4 670.4,974.7 671.9,973.9 673.4,974.9 674.9,974.5 676.5,974.4 678.0,975.4 679.5,974.7 681.0,975.0 682.5,975.3 684.1,974.5 685.6,975.7 687.1,975.9 688.7,974.8 690.2,975.7 691.7,975.1 693.2,975.0 694.8,975.4 696.3,975.9 697.8,976.4 699.4,976.5 700.9,976.5 702.4,976.1 704.0,976.2 705.5,975.6 707.0,976.4 708.5,976.2 710.1,976.0 711.6,976.9 713.1,976.0 714.7,975.9 716.2,976.0 717.7,976.1 719.3,976.8 720.8,977.1 722.3,976.3 723.9,976.8 725.4,977.0 726.9,977.0 728.4,976.9 730.0,977.1 731.5,976.5 733.0,976.6 734.6,977.2 736.1,977.0 737.6,977.8 739.2,977.1 740.7,978.0 742.2,977.2 743.7,977.1 745.3,977.7 746.8,977.6 748.3,977.6 749.9,978.3 751.4,978.0 753.3,976.3 755.1,975.6 757.0,974.0 758.5,973.5 760.0,971.9 761.5,971.0 763.0,970.0 764.6,971.8 766.2,972.6 767.9,973.3 769.5,974.3 771.1,975.6 772.7,977.4 774.2,977.0 775.8,976.5 777.3,977.1 778.8,976.7 780.3,976.3 781.9,976.5 783.4,976.9 784.9,975.8 786.4,975.5 788.0,975.5 789.5,975.4 791.0,976.1 792.5,975.6 794.1,975.1 795.6,975.0 797.1,973.0 798.6,971.3 800.1,969.9 801.7,969.4 803.2,967.6 804.7,965.4 806.2,964.6 807.7,962.2 809.2,961.4 810.8,959.6 812.3,957.8 813.8,956.8 815.3,956.4 816.8,955.6 818.3,954.6 819.8,953.3 821.3,953.3 822.8,952.3 824.3,951.6 825.9,951.3 827.4,949.9 829.0,950.4 830.5,949.2 832.0,948.7 833.5,949.3 835.1,949.7 836.6,949.7 838.1,949.8 839.6,950.8 841.2,951.5 842.7,950.8 844.2,950.9 845.8,951.7 847.3,951.3 848.8,951.8 850.3,952.5 851.9,952.3 853.4,952.2 854.9,952.3 856.4,953.2 858.0,954.0 859.5,954.2 861.0,953.8 862.5,954.2 864.0,955.7 865.5,956.6 867.0,957.2 868.5,958.8 870.0,959.5 871.5,960.9 873.0,961.4 874.5,961.6 876.1,963.0 877.6,963.3 879.1,963.3 880.6,963.3 882.2,964.3 883.7,964.3 885.2,965.5 886.7,966.0 888.3,966.3 889.8,967.4 891.3,966.5 892.9,968.0 894.4,968.6 895.9,968.1 897.4,968.9 899.0,969.0 900.5,970.2 902.0,970.9 903.5,970.8 905.1,971.8 906.6,972.0 908.1,972.2 909.6,973.1 911.2,972.8 912.7,974.2 914.2,973.8 915.7,973.6 917.2,974.1 918.8,975.4 920.3,976.0 921.8,976.0 923.3,975.8 924.8,977.1 926.4,977.3 927.9,976.9 929.4,977.6 930.9,978.4 932.4,977.9 934.0,978.3 935.5,979.1 937.0,979.7 938.5,980.5 940.0,980.8 941.6,980.1 943.1,981.2 944.6,981.2 946.1,981.6 947.7,981.4 949.2,982.2 950.7,981.9 952.2,982.6 953.8,982.3 955.3,982.0 956.8,982.7 958.3,982.8 959.9,982.9 961.4,983.1 962.9,983.6 964.4,983.9 965.9,983.6 967.5,983.9 969.0,984.5 970.5,984.7 972.0,984.8 973.6,985.4 975.1,984.9 976.6,985.6 978.1,985.5 979.7,986.4 981.2,986.6 982.7,986.5 984.3,987.0 985.9,986.6 987.5,986.3 989.0,987.3 990.6,986.8 992.2,986.7 993.8,986.6 995.4,986.9 997.0,987.3 998.5,987.6 1000.1,987.2 1001.7,987.6 1003.3,987.3 1005.0,977.1 1006.8,967.7 1008.4,968.3 1010.1,968.8 1011.7,969.4 1013.4,970.1 1015.0,971.0 1016.5,971.4 1018.1,971.5 1019.6,970.8 1021.2,971.0 1022.7,971.8 1024.3,971.7 1025.8,971.8 1027.4,971.8 1028.9,972.0 1030.5,971.5 1032.0,971.9 1033.6,969.9 1035.1,968.9 1036.7,967.0 1038.2,966.9 1039.8,964.9 1041.4,963.7 1042.9,962.7 1044.5,961.0 1046.1,958.8 1047.6,957.5 1049.2,955.8 1050.8,955.4 1052.3,953.9 1053.9,952.1 1055.4,950.5 1057.0,949.3 1058.5,948.4 1060.1,948.1 1061.6,947.8 1063.1,947.4 1064.6,946.7 1066.2,946.2 1067.7,945.0 1069.2,944.3 1070.7,943.6 1072.3,943.9 1073.8,942.2 1075.3,941.5 1076.9,941.1 1078.4,941.4 1079.9,940.7 1081.4,939.3 1083.0,939.4 1084.5,938.9 1086.0,937.6 1087.5,936.7 1089.1,936.9 1090.6,935.9 1092.1,935.5 1093.6,934.9 1095.2,935.8 1096.7,934.9 1098.2,934.6 1099.7,934.6 1101.2,933.9 1102.7,933.3 1104.3,933.6 1105.8,933.4 1107.3,933.3 1108.9,932.8 1110.5,933.5 1112.0,934.3 1113.6,933.9 1115.2,934.6 1116.8,934.7 1118.3,934.4 1119.9,934.3 1121.5,935.5 1123.0,935.6 1124.6,935.3 1126.2,935.4 1127.8,936.6 1129.3,936.8 1130.9,936.1 1132.5,936.7 1134.0,937.2 1135.5,937.6 1137.1,937.6 1138.6,937.6 1140.1,938.4 1141.6,939.2 1143.1,939.5 1144.6,939.8 1146.2,939.6 1147.7,940.1 1149.2,940.9 1150.7,941.7 1152.3,942.9 1153.8,943.9 1155.3,945.7 1156.8,945.7 1158.4,948.0 1159.9,948.0 1161.4,949.9 1162.9,950.1 1164.5,951.7 1166.0,952.6 1167.6,952.8 1169.1,952.8 1170.7,954.3 1172.2,954.7 1173.8,954.4 1175.4,955.5 1176.9,955.5 1178.5,956.6 1180.1,955.7 1181.6,956.6 1183.2,956.8 1184.8,957.8 1186.3,958.4 1187.9,958.9 1189.4,958.9 1191.0,959.3 1192.5,959.4 1194.1,960.2 1195.6,959.4 1197.1,959.9 1198.7,960.8 1200.2,960.6 1201.8,961.6 1203.3,960.5 1204.8,961.3 1206.4,961.2 1207.9,961.8 1209.6,965.6 1211.2,970.2 1212.9,975.2" stroke="#997300"/>
<polyline points="379.2,829.2 380.9,829.0 382.6,829.4 384.2,829.6 385.9,829.8 387.6,829.9 389.1,829.7 390.6,829.9 392.1,829.7 393.6,830.0 395.1,829.3 396.6,829.5 398.1,829.4 399.6,829.2 401.1,829.6 402.6,829.2 403.9,835.3 405.0,830.0 407.3,836.0 409.3,829.2 410.8,829.0 412.3,829.6 413.8,829.3 415.3,829.3 416.8,829.6 418.3,829.7 419.8,829.5 421.3,829.4 422.8,830.2 424.3,829.9 426.3,821.8 428.0,830.0 429.9,832.9 431.7,836.0 433.3,833.9 434.9,832.5 436.5,830.6 438.3,831.1 440.1,831.4 441.9,832.0 443.5,831.6 445.1,831.8 446.6,831.2 448.2,831.0 449.8,831.2 451.4,830.6 453.2,829.4 455.0,828.3 456.8,827.2 459.6,828.5 461.2,828.5 462.8,829.2 464.5,829.5 466.1,829.6 467.7,829.9 469.4,828.5 471.1,827.0 472.8,826.1 474.5,824.5 477.2,830.6 478.8,829.6 480.4,828.9 482.1,827.6 483.7,826.9 485.3,825.8 486.8,825.7 488.3,826.0 489.8,826.9 491.3,826.9 492.9,827.1 494.4,827.2 495.9,827.4 497.4,827.4 498.9,827.9 500.4,827.9 501.9,828.6 503.4,829.0 504.9,828.9 506.5,829.5 508.0,829.4 509.5,830.1 511.0,830.0 512.5,830.6 514.0,830.3 515.6,829.9 517.1,829.7 518.7,829.1 520.2,829.1 521.8,828.9 523.3,828.5 524.9,829.6 526.6,831.1 528.2,832.7 529.9,834.0 531.5,835.3 533.0,835.4 534.5,835.5 536.1,835.4 537.6,835.1 539.1,835.3 540.7,835.6 542.2,835.4 543.7,835.3 545.0,829.9 547.7,837.4 549.2,837.2 550.8,836.4 552.3,836.1 553.8,836.1 555.3,835.5 556.9,835.0 558.4,834.1 559.9,834.0 561.5,835.3 563.1,836.1 564.7,838.0 566.3,839.3 567.9,840.3 569.5,841.4 571.5,838.5 573.5,836.0 575.5,833.6 577.6,830.6 579.2,831.6 580.8,833.3 582.4,834.3 583.9,835.1 585.5,837.1 587.1,838.0 588.7,837.7 590.3,837.8 591.9,837.4 593.5,837.0 595.2,837.0 596.8,836.3 598.4,836.6 600.0,836.0 601.6,835.4 603.2,834.7 604.7,834.6 606.3,833.9 607.9,833.5 609.5,833.5 611.1,832.6 612.7,832.2 614.2,831.9 615.8,831.5 617.4,831.2 618.9,831.5 620.5,831.4 622.0,831.3 623.5,831.3 625.0,830.8 626.6,831.0 628.1,830.5 629.6,831.0 631.1,830.8 632.7,830.7 634.2,830.2 635.7,830.1 637.3,830.7 638.8,830.3 640.3,830.3 641.8,830.4 643.4,829.8 644.9,830.1 646.4,829.9 647.9,830.1 649.5,829.7 651.0,829.7 652.5,830.2 654.0,831.6 655.5,832.0 657.0,831.3 658.5,831.2 660.0,830.7 661.5,829.8 663.0,829.6 664.5,828.9 666.0,828.2 667.5,827.7 669.0,827.4 670.5,827.5 672.1,826.7 673.6,826.5 675.2,826.2 676.8,825.5 678.3,825.8 679.9,825.5 681.4,825.0 683.0,825.3 684.5,824.9 686.1,824.8 687.7,824.9 689.3,825.2 690.8,825.1 692.4,824.9 694.0,825.0 695.6,824.7 697.1,825.3 698.7,825.0 700.3,825.0 701.9,825.2 703.4,824.8 705.0,825.0 707.0,818.0 709.0,825.0 711.8,831.0 713.6,830.3 715.4,829.1 717.2,828.5 719.0,827.4 720.5,826.7 722.1,826.5 723.6,826.4 725.2,826.0 726.7,825.5 728.2,825.3 729.8,824.7 731.3,824.5 732.8,823.8 734.4,824.1 735.9,823.3 737.5,823.4 739.0,822.8 740.6,822.9 742.2,823.1 743.9,823.2 745.5,822.9 747.1,823.5 748.8,823.2 750.4,823.8 752.0,823.6 753.5,823.5 755.0,823.0 756.7,822.8 758.3,822.6 760.0,821.9 761.6,821.8 763.3,821.6 764.9,820.7 766.6,820.6 768.1,820.8 769.7,821.6 771.2,822.3 772.7,822.8 774.2,822.6 775.7,822.8 777.2,823.4 778.8,823.2 780.3,823.1 781.8,823.2 783.3,823.6 784.8,823.4 786.3,823.8 787.9,823.9 789.4,824.0 790.9,824.1 792.4,824.5 793.9,824.0 795.4,824.8 796.9,824.3 798.5,824.3 800.0,825.0 801.5,824.9 803.0,825.0 804.5,825.8 806.1,826.3 807.6,827.5 809.2,827.9 810.8,829.1 812.3,829.4 813.9,830.5 815.4,831.2 817.6,832.5 819.8,833.5 821.3,839.5 822.8,845.7 824.3,847.8 825.9,849.6 827.4,852.2 829.0,854.3 830.5,856.3 832.0,856.6 833.5,857.6 835.1,858.3 836.6,858.4 838.1,859.6 839.6,860.3 841.1,860.2 842.7,861.0 844.2,861.5 845.7,862.4 847.2,863.1 848.7,863.9 850.3,865.2 851.8,865.9 853.3,867.0 854.8,867.1 856.3,867.5 857.8,867.6 859.4,868.2 860.9,868.4 862.4,868.5 863.9,867.6 865.4,867.1 867.0,866.3 868.5,866.0 870.0,865.5 871.5,857.6 873.1,850.4 874.6,842.6 876.1,840.3 877.7,837.9 879.2,835.0 880.7,834.1 882.2,833.3 883.8,833.2 885.3,832.3 886.8,832.0 888.4,830.9 889.9,830.2 891.4,829.7 892.9,829.2 894.4,829.7 896.0,829.2 897.5,828.9 899.0,828.8 900.5,828.9 902.0,828.7 903.6,828.3 905.1,827.9 906.6,827.9 908.1,828.1 909.6,827.5 911.2,827.5 912.7,827.3 914.2,827.0 915.7,826.9 917.2,826.5 918.8,826.6 920.3,826.6 921.8,825.8 923.3,825.9 924.8,826.1 926.4,826.0 927.9,825.1 929.4,825.4 930.9,825.2 932.4,825.2 934.0,824.7 935.5,824.3 937.0,824.4 938.5,823.9 940.1,824.0 941.6,823.7 943.1,823.0 944.6,823.0 946.2,822.7 947.7,822.4 949.2,821.6 950.8,821.7 952.3,821.3 953.8,821.2 955.3,820.7 956.9,820.2 958.4,820.3 959.9,819.7 961.4,819.8 963.0,819.1 964.5,819.0 966.1,819.0 967.7,819.2 969.2,818.7 970.8,819.2 972.4,818.7 974.0,819.3 975.5,818.6 977.1,819.2 978.7,818.9 980.3,818.7 981.8,818.9 983.4,819.0 985.0,819.0 987.3,810.7 990.0,819.0 991.7,818.9 993.3,818.7 995.0,819.0 996.6,818.8 998.3,819.4 1000.0,818.9 1001.6,818.9 1003.3,819.0 1005.0,818.3 1006.7,818.4 1008.4,817.4 1010.1,817.1 1011.8,816.8 1013.5,816.0 1015.1,815.8 1016.6,816.0 1018.2,815.5 1019.8,815.3 1021.3,815.1 1022.9,815.4 1024.5,815.6 1026.0,815.0 1027.6,815.1 1029.2,815.2 1030.8,814.7 1032.3,814.5 1033.9,814.7 1035.5,814.5 1037.0,814.9 1038.6,814.4 1040.3,816.6 1041.9,817.9 1043.6,820.1 1045.3,821.9 1047.0,824.1 1048.7,826.0 1050.3,828.6 1052.0,831.2 1053.7,832.9 1055.4,835.3 1057.1,836.0 1058.8,836.7 1060.4,836.8 1062.1,838.1 1063.8,838.1 1065.5,838.9 1067.1,839.8 1068.8,840.3 1070.5,841.2 1072.2,842.7 1073.8,843.8 1075.5,845.3 1077.2,846.2 1078.8,847.6 1080.5,848.9 1082.2,850.4 1083.7,850.5 1085.3,851.0 1086.8,851.5 1088.3,852.2 1089.8,852.4 1091.4,853.4 1092.9,853.5 1094.4,853.8 1095.9,854.3 1097.5,855.2 1099.0,855.4 1100.6,855.3 1102.1,856.0 1103.7,855.7 1105.2,856.6 1106.8,856.4 1108.4,856.8 1109.9,857.2 1111.5,856.8 1113.1,857.0 1114.6,857.7 1116.2,857.8 1117.8,858.1 1119.3,858.0 1120.9,858.4 1122.4,858.3 1124.0,858.8 1125.5,858.0 1127.0,857.2 1128.5,856.8 1130.0,856.0 1132.5,862.1 1134.2,859.7 1135.8,857.5 1137.5,855.4 1139.0,855.3 1140.5,854.7 1142.0,855.1 1143.5,854.7 1145.0,854.3 1146.6,854.1 1148.1,854.2 1149.6,854.0 1151.1,854.0 1152.6,853.7 1154.3,850.8 1155.9,848.1 1157.6,845.4 1159.3,844.6 1160.9,843.0 1162.6,842.4 1164.3,841.2 1165.9,840.2 1167.6,838.7 1169.1,838.9 1170.7,838.2 1172.2,838.5 1173.7,838.2 1175.2,837.7 1176.8,838.2 1178.3,837.7 1179.8,837.7 1181.3,837.4 1182.9,836.8 1184.4,837.0 1186.1,836.2 1187.8,834.5 1189.5,833.5 1191.1,832.6 1192.8,831.2 1194.5,830.3 1196.2,830.3 1197.8,830.5 1199.5,830.0 1201.2,830.4 1202.9,830.0 1204.6,830.3 1206.2,830.4 1207.9,830.3 1209.6,829.0 1211.2,827.1 1212.9,826.1" stroke="#255E91"/>
<polyline points="379.2,847.5 380.8,847.4 382.5,848.1 384.1,847.8 385.7,847.9 387.4,848.0 389.0,848.2 390.5,848.1 392.1,847.9 393.6,847.6 395.1,847.1 396.6,847.0 398.1,846.7 399.7,846.2 401.2,846.2 402.9,847.6 404.6,848.6 406.3,849.5 408.0,850.3 409.8,849.8 411.6,848.4 413.4,847.5 415.0,847.9 416.5,847.5 418.1,848.0 419.6,848.1 421.2,848.4 422.7,848.4 424.3,848.2 426.0,846.5 427.7,844.2 429.2,846.0 430.8,848.5 432.3,850.3 433.8,852.3 435.5,851.6 437.2,851.2 438.9,851.0 440.6,850.3 442.2,850.4 443.8,850.3 445.5,850.0 447.1,849.5 448.7,849.3 450.3,849.5 451.9,849.1 453.6,849.0 455.2,848.7 456.8,848.9 459.6,846.9 461.8,850.0 462.6,975.0 464.5,960.0 466.3,926.0 468.4,913.5 470.4,901.6 472.4,899.4 474.5,896.8 476.0,896.3 477.5,896.5 479.0,895.8 480.5,895.9 482.0,895.1 483.5,894.8 485.0,894.6 486.5,894.0 488.0,894.1 489.6,894.4 491.1,894.8 492.7,894.9 494.2,895.9 495.8,895.9 497.3,896.0 498.9,896.8 500.4,897.2 501.9,896.7 503.4,896.7 504.9,896.6 506.4,896.7 507.9,897.2 509.4,897.1 510.9,897.1 512.5,896.9 514.0,897.0 515.5,897.6 517.0,897.2 518.5,897.7 520.0,897.7 521.5,897.1 523.0,897.7 524.5,897.1 526.0,897.5 527.6,897.7 529.1,897.9 530.7,897.8 532.3,897.8 533.8,898.0 535.4,897.5 537.0,897.9 538.6,897.7 540.1,897.9 541.7,897.8 543.3,898.3 544.8,898.2 546.4,898.2 548.0,898.4 549.5,898.2 551.1,898.1 552.6,898.3 554.2,898.2 555.8,897.9 557.3,897.7 558.9,898.1 560.5,897.6 562.0,897.3 563.6,897.5 565.1,897.7 566.7,897.5 568.4,897.5 570.1,896.9 571.8,896.6 573.5,896.1 575.5,876.9 577.6,857.0 579.7,854.9 581.7,852.3 583.2,852.3 584.8,852.3 586.3,852.5 587.8,852.2 589.3,852.0 590.9,852.4 592.4,852.5 593.9,852.1 595.4,852.4 597.0,852.6 598.5,852.0 600.0,852.3 602.0,854.0 603.5,853.1 605.1,852.8 606.6,852.1 608.2,852.0 609.7,851.4 611.2,850.4 612.8,850.0 614.3,849.3 615.9,848.3 617.4,848.0 618.9,848.4 620.5,847.9 622.0,847.9 623.5,848.2 625.0,848.0 626.6,848.4 628.1,848.4 629.6,848.9 631.1,848.5 632.7,849.0 634.2,849.0 635.7,848.9 637.3,848.7 638.8,848.8 640.3,849.0 641.8,849.0 643.4,849.3 644.9,849.2 646.4,849.2 647.9,849.4 649.5,849.8 651.0,849.5 652.5,849.0 654.0,848.9 655.6,848.4 657.1,848.3 658.6,848.0 660.1,848.1 661.6,848.2 663.2,847.9 664.7,847.8 666.2,847.5 667.7,847.1 669.2,846.9 670.8,846.2 672.3,846.3 673.8,845.9 675.3,846.0 676.8,845.3 678.4,845.5 679.9,845.1 681.4,845.0 682.9,844.9 684.4,844.8 686.0,844.5 687.5,845.0 689.0,845.0 690.5,844.8 692.1,844.4 693.6,844.7 695.1,844.9 696.6,844.9 698.1,844.7 699.7,844.1 701.2,844.7 702.7,844.5 704.2,844.2 705.8,844.6 707.3,844.5 708.8,844.2 710.3,844.5 711.8,843.9 713.4,844.2 714.9,844.0 716.4,843.9 717.9,844.2 719.4,844.1 721.0,843.8 722.5,844.0 724.0,844.3 725.5,843.9 727.1,844.2 728.6,843.9 730.1,844.2 731.6,843.4 733.1,843.7 734.7,843.8 736.2,843.9 737.7,844.0 739.2,843.7 740.8,843.6 742.3,843.7 743.8,843.6 745.3,843.7 746.8,843.8 748.4,843.1 749.9,843.3 751.4,843.4 754.0,975.0 755.7,950.3 757.3,924.6 759.0,900.0 760.7,898.6 762.3,896.3 764.0,895.0 766.0,880.0 767.9,861.8 769.7,843.4 771.2,843.4 772.8,842.7 774.3,842.6 775.8,842.2 777.3,842.3 778.9,841.9 780.4,841.7 781.9,841.3 783.4,841.2 785.0,841.3 786.5,840.9 788.0,840.4 789.5,841.0 791.0,840.6 792.6,841.0 794.1,841.2 795.6,841.3 797.1,841.9 798.7,841.6 800.2,842.1 801.7,842.5 803.2,842.9 804.7,842.3 806.3,842.7 807.8,843.1 809.3,843.7 810.8,843.3 812.4,844.1 813.9,843.9 815.4,844.2 817.6,846.5 819.8,848.7 821.6,845.0 823.3,840.2 825.1,836.5 826.9,840.4 828.7,844.4 830.5,848.7 832.0,849.0 833.5,849.7 835.1,850.6 836.6,851.1 838.1,851.3 839.6,852.4 841.2,852.8 842.7,853.1 844.2,854.2 845.7,854.8 847.3,854.9 848.8,856.1 850.3,856.3 851.8,856.5 853.3,856.1 854.9,855.9 856.4,856.6 857.9,856.6 859.4,856.0 861.0,856.5 862.5,856.5 864.0,856.3 864.5,848.7 865.0,891.4 866.0,856.0 868.0,855.5 870.0,854.8 871.5,867.3 873.1,879.6 874.6,891.4 876.1,884.0 877.7,877.2 879.2,870.0 880.7,862.4 882.2,861.6 883.8,861.3 885.3,860.6 886.8,860.1 888.3,859.2 889.9,858.4 891.4,857.9 892.9,857.6 894.4,857.7 896.0,857.2 897.5,857.7 899.0,857.6 900.5,856.9 902.0,857.1 903.6,857.0 905.1,856.4 906.6,856.8 908.1,856.7 909.6,856.2 911.2,855.9 912.7,855.9 914.2,856.2 915.7,855.8 917.2,855.9 918.8,855.3 920.3,855.1 921.8,855.2 923.3,855.5 924.8,854.8 926.4,854.6 927.9,855.0 929.4,854.3 930.9,854.7 932.4,854.1 934.0,854.1 935.5,854.3 937.0,854.0 938.5,854.1 940.1,853.6 941.6,853.4 943.1,852.9 944.6,853.0 946.2,852.7 947.7,853.0 949.2,852.8 950.8,852.6 952.3,852.3 953.8,852.2 955.4,851.6 956.9,851.6 958.4,851.4 959.9,851.2 961.5,851.4 963.0,851.0 964.5,850.7 966.0,850.7 967.6,850.5 969.1,850.9 970.6,850.6 972.1,850.4 973.6,850.2 975.1,850.6 976.7,850.5 978.2,850.0 979.7,850.0 981.2,850.2 982.7,849.6 984.3,849.5 985.8,849.3 987.3,849.5 988.9,849.7 990.4,850.1 992.0,849.9 993.6,850.3 995.1,850.9 996.7,850.7 998.2,850.9 999.8,851.4 1001.4,851.7 1002.9,851.5 1004.5,851.8 1005.5,975.0 1008.0,960.0 1010.0,920.0 1011.5,909.7 1013.0,900.0 1014.5,897.9 1016.0,895.6 1018.5,894.0 1020.0,894.2 1021.6,894.3 1023.1,894.1 1024.7,893.8 1026.2,894.0 1027.8,893.8 1029.3,894.0 1030.8,894.0 1032.4,894.3 1033.9,894.3 1035.5,894.3 1037.0,894.0 1038.7,894.5 1040.3,895.5 1042.0,895.4 1043.7,896.5 1045.3,896.9 1047.0,897.3 1048.6,897.7 1050.2,897.5 1051.7,898.1 1053.3,897.5 1054.9,898.3 1056.5,898.4 1058.0,898.2 1059.6,898.7 1061.2,898.4 1062.8,899.0 1064.3,898.9 1065.9,899.0 1067.5,899.0 1069.1,899.6 1070.6,899.7 1072.2,899.3 1073.8,899.8 1075.3,900.3 1076.8,899.7 1078.4,899.9 1079.9,900.0 1081.4,900.2 1082.9,900.6 1084.4,900.7 1086.0,900.5 1087.5,900.4 1089.0,900.2 1090.5,900.3 1092.1,900.7 1093.6,900.9 1095.1,900.8 1096.6,901.3 1098.1,900.9 1099.7,901.0 1101.2,901.1 1102.7,901.0 1104.2,901.7 1105.7,901.5 1107.3,901.5 1108.8,901.5 1110.3,901.4 1111.8,901.5 1113.4,901.8 1114.9,901.8 1116.4,902.3 1117.9,902.0 1119.4,901.8 1121.0,901.8 1122.5,902.0 1124.0,902.3 1125.5,902.0 1127.1,902.2 1128.6,902.2 1130.1,901.5 1131.6,901.8 1133.2,901.4 1134.7,901.3 1136.2,901.1 1137.7,900.6 1139.3,900.5 1140.8,900.8 1142.3,900.7 1143.9,900.3 1145.4,900.5 1146.9,900.3 1148.4,899.7 1150.0,899.4 1151.5,899.6 1153.0,899.6 1154.5,899.1 1156.1,898.8 1157.6,899.0 1159.1,898.8 1160.6,898.3 1162.2,898.7 1163.7,898.5 1165.2,898.1 1166.7,898.0 1168.2,897.7 1169.7,897.5 1171.3,897.4 1172.8,897.7 1174.3,897.3 1175.8,897.3 1177.3,896.9 1178.9,897.1 1180.4,896.8 1181.9,896.7 1183.4,896.3 1184.9,896.3 1186.4,895.8 1188.0,896.3 1189.5,895.9 1191.0,895.6 1192.5,895.6 1194.1,895.7 1195.6,895.3 1197.1,895.5 1198.7,895.4 1200.2,895.9 1201.8,895.2 1203.3,895.6 1204.8,895.9 1206.4,895.8 1207.9,895.6 1209.6,881.8 1211.2,867.5 1212.9,853.7" stroke="#43682B"/>
<polyline points="466.0,693.8 467.4,693.0 468.8,694.5 470.2,693.3 471.6,694.7 473.0,694.0 474.5,678.0 476.0,692.0 477.3,691.2 478.6,692.3 479.9,691.4 481.1,691.9 482.4,692.1 483.7,689.9 485.0,690.0 486.2,691.9 487.5,689.1 488.8,692.2 490.0,689.8 491.2,691.8 492.5,691.6 493.8,693.2 495.0,692.1 496.2,692.1 497.5,694.2 498.8,693.8 500.0,694.0 501.2,694.7 502.5,693.7 503.8,692.1 505.0,694.4 506.2,692.5 507.5,693.2 508.8,691.5 510.0,692.2 511.2,693.4 512.5,693.6 513.8,693.1 515.0,692.3 516.2,693.1 517.5,692.8 518.8,691.2 520.0,692.0 521.2,692.2 522.5,692.4 523.8,692.9 525.0,691.3 526.2,691.7 527.5,691.9 528.8,691.1 530.0,692.0 531.2,693.3 532.5,692.9 533.8,691.6 535.0,693.5 536.2,691.6 537.5,693.7 538.8,691.8 540.0,693.0 541.2,691.6 542.5,692.0 543.8,692.7 545.0,691.8 546.2,693.6 547.5,693.7 548.8,691.4 550.0,692.8 551.2,692.5 552.5,691.9 553.8,690.8 555.0,692.9 556.2,692.8 557.5,689.7 558.8,690.6 560.0,691.0 561.2,691.9 562.5,693.0 563.8,695.3 565.0,697.0 567.0,691.0 568.3,692.9 569.6,690.7 570.9,693.9 572.2,692.8 573.5,694.0" stroke="#698ED0"/>
<polyline points="757.0,694.0 762.0,695.0" stroke="#698ED0"/>
<polyline points="1009.8,693.5 1011.0,692.2 1012.2,695.2 1013.5,693.5 1014.7,693.5 1015.9,693.4 1017.1,694.5 1018.3,693.9 1019.6,694.3 1020.8,694.8 1022.0,695.8 1023.2,695.9 1024.5,695.4 1025.7,694.8 1027.0,695.3 1028.2,696.0 1029.5,695.7 1030.7,694.3 1032.0,696.0 1033.2,695.5 1034.5,694.6 1035.7,694.3 1037.0,693.5 1038.2,692.4 1039.5,691.1 1040.8,692.8 1042.0,691.3 1043.3,688.9 1044.6,690.9 1045.8,690.1 1047.1,686.7 1048.4,688.2 1049.6,686.0 1050.9,686.3 1052.2,686.6 1053.4,684.3 1054.7,684.1 1056.0,684.0 1057.2,681.8 1058.5,682.1 1059.7,682.2 1060.9,681.2 1062.1,682.7 1063.3,679.8 1064.5,681.2 1065.7,678.7 1066.9,679.1 1068.1,678.3 1069.3,678.1 1070.6,679.0 1071.8,677.5 1073.0,679.2 1074.2,676.6 1075.4,678.0 1076.6,678.4 1077.8,675.8 1079.0,675.7 1080.2,677.2 1081.4,676.0 1082.7,675.8 1083.9,677.1 1085.2,675.1 1086.5,675.2 1087.7,676.8 1089.0,674.8 1090.3,676.6 1091.5,676.3 1092.8,673.9 1094.1,674.9 1095.3,676.0 1096.6,674.5 1097.8,673.3 1099.0,675.6 1100.3,675.4 1101.5,675.3 1102.7,674.8 1103.9,673.2 1105.1,676.0 1106.4,673.2 1107.6,675.4 1108.8,675.2 1110.0,673.9 1111.2,675.1 1112.5,674.2 1113.7,675.3 1114.9,673.0 1116.1,675.9 1117.3,674.1 1118.6,675.5 1119.8,674.4 1121.0,674.5 1122.3,676.7 1123.6,676.3 1124.9,678.2 1126.1,677.8 1127.4,680.5 1128.7,680.4 1130.0,682.9 1131.2,685.1 1132.4,685.6 1133.6,685.8 1134.8,688.7 1136.0,688.2 1137.3,689.4 1138.6,689.2 1139.8,686.1 1141.1,687.9 1142.4,687.7 1143.7,687.0 1145.0,684.9 1146.3,687.6 1147.6,685.8 1148.8,686.0 1150.1,686.5 1151.4,685.2 1152.6,684.8 1153.9,684.3 1155.1,687.5 1156.3,685.8 1157.6,685.4 1158.8,686.0 1160.0,689.1 1161.3,688.6 1162.5,687.2 1163.7,687.3 1165.0,690.0 1166.2,689.6 1167.4,689.7 1168.7,688.6 1169.9,689.8 1171.1,691.8 1172.4,689.1 1173.6,690.8 1174.8,689.9 1176.1,693.3 1177.3,692.0 1178.5,690.8 1179.8,693.6 1181.0,693.3 1182.2,693.0 1183.5,690.8 1184.7,693.0 1186.0,692.4 1187.2,692.5 1188.4,691.4 1189.7,692.7 1190.9,693.7 1192.2,691.6 1193.4,694.0 1194.6,692.6 1195.9,692.2 1197.1,692.2 1198.3,692.9 1199.6,693.6 1200.8,693.4 1202.0,694.5 1203.3,693.3 1204.5,693.4 1205.8,695.0 1207.0,693.5" stroke="#698ED0"/>
<polyline points="466.0,707.5 467.2,706.3 468.4,705.4 469.6,706.1 470.8,705.7 472.0,706.0 473.5,720.0 475.0,707.0 476.2,705.6 477.5,706.4 478.8,705.0 480.0,707.7 481.2,706.1 482.5,707.2 483.8,706.5 485.0,706.4 486.2,706.3 487.5,704.7 488.8,705.9 490.0,705.0 491.2,704.0 492.5,705.1 493.8,705.1 495.0,705.6 496.2,703.6 497.5,704.1 498.8,705.6 500.0,705.5 501.2,706.0 502.5,703.2 503.8,703.4 505.0,703.0 506.2,704.9 507.5,704.9 508.8,704.5 510.0,704.0 511.2,705.1 512.4,704.5 513.6,704.8 514.9,706.2 516.1,705.5 517.3,705.8 518.5,705.8 519.7,705.7 520.9,706.8 522.1,706.4 523.4,705.2 524.6,706.3 525.8,706.5 527.0,707.0 528.5,709.3 530.0,712.0 531.5,709.2 533.0,706.0 534.2,705.4 535.4,705.3 536.6,705.2 537.8,704.8 539.0,706.5 540.2,703.5 541.4,703.1 542.6,705.1 543.8,703.9 545.0,704.0 546.2,704.0 547.5,704.6 548.8,704.1 550.0,703.8 551.2,703.3 552.5,706.2 553.8,706.6 555.0,704.6 556.2,705.4 557.5,705.1 558.8,704.4 560.0,706.0 561.2,708.3 562.5,709.1 563.8,708.2 565.0,710.0 567.0,705.0 568.3,704.2 569.6,705.6 570.9,705.9 572.2,704.9 573.5,705.0" stroke="#F1975A"/>
<polyline points="757.0,710.0 762.0,706.0" stroke="#F1975A"/>
<polyline points="1009.8,711.8 1011.0,711.5 1012.2,711.1 1013.5,713.0 1014.7,713.3 1015.9,713.3 1017.1,711.0 1018.3,712.7 1019.6,714.0 1020.8,713.2 1022.0,712.6 1023.2,712.3 1024.5,711.0 1025.7,710.6 1027.0,712.5 1028.2,710.2 1029.5,712.3 1030.7,711.7 1032.0,710.8 1033.2,712.0 1034.5,711.9 1035.7,710.3 1036.9,710.2 1038.1,708.1 1039.3,709.2 1040.5,708.3 1041.7,707.3 1042.9,709.0 1044.1,707.9 1045.4,705.5 1046.6,705.4 1047.8,705.3 1049.0,705.6 1050.2,704.4 1051.4,704.3 1052.6,705.1 1053.8,702.6 1055.0,703.9 1056.2,702.2 1057.4,703.7 1058.6,703.3 1059.8,700.9 1061.0,701.3 1062.3,699.3 1063.5,699.8 1064.7,700.0 1065.9,699.6 1067.1,698.2 1068.3,696.8 1069.5,696.6 1070.7,697.4 1071.9,697.2 1073.1,695.5 1074.4,695.6 1075.6,696.2 1076.8,696.6 1078.0,695.0 1079.2,693.8 1080.5,694.4 1081.7,693.0 1082.9,694.2 1084.1,691.8 1085.3,691.8 1086.6,691.9 1087.8,693.0 1089.0,691.3 1090.2,690.2 1091.5,690.3 1092.7,690.1 1094.0,690.4 1095.2,690.8 1096.4,691.0 1097.7,692.1 1098.9,691.0 1100.2,691.2 1101.4,691.0 1102.6,692.2 1103.9,692.6 1105.1,691.1 1106.4,692.6 1107.6,690.5 1108.9,692.8 1110.1,691.4 1111.3,691.9 1112.6,690.9 1113.8,690.6 1115.1,690.1 1116.3,692.5 1117.5,690.9 1118.8,691.9 1120.0,691.2 1121.3,691.4 1122.5,691.3 1123.7,692.5 1124.9,694.5 1126.2,697.2 1127.4,700.4 1128.6,702.0 1129.8,702.6 1131.1,701.4 1132.3,704.2 1133.5,703.8 1134.8,703.1 1136.0,705.0 1137.3,704.1 1138.6,703.8 1139.8,705.6 1141.1,704.6 1142.4,703.8 1143.7,703.4 1145.0,703.4 1146.3,703.2 1147.6,703.3 1148.8,704.6 1150.1,704.5 1151.4,703.4 1152.7,704.2 1153.9,705.0 1155.2,704.4 1156.4,702.9 1157.7,702.9 1158.9,703.4 1160.2,703.9 1161.4,704.9 1162.7,706.1 1163.9,705.5 1165.2,705.2 1166.4,704.8 1167.7,707.3 1168.9,706.8 1170.2,705.6 1171.4,704.9 1172.7,706.5 1174.0,708.5 1175.3,706.6 1176.6,708.9 1178.0,707.0 1179.3,709.1 1180.6,708.6 1181.9,709.5 1183.2,710.9 1184.4,709.1 1185.7,708.6 1186.9,709.0 1188.2,711.1 1189.4,711.7 1190.7,710.8 1191.9,711.0 1193.2,709.8 1194.5,709.9 1195.7,709.4 1197.0,712.4 1198.2,709.5 1199.5,711.5 1200.7,710.7 1202.0,710.3 1203.2,711.3 1204.5,712.9 1205.7,710.9 1207.0,711.8" stroke="#F1975A"/>
<polyline points="379.0,982.2 1212.0,982.2" stroke="#B7B7B7"/>
<polyline points="757.8,982.2 757.8,620.5" stroke="#B7B7B7"/>
<polyline points="817.5,982.2 817.5,620.5" stroke="#B7B7B7"/>
<polyline points="871.9,982.2 871.9,620.5" stroke="#B7B7B7"/>
<polyline points="1006.2,982.2 1006.2,620.5" stroke="#B7B7B7"/>
<polyline points="379.0,620.5 1213.0,620.5" stroke="#FFCD33"/>
<polyline points="379.0,982.2 465.0,982.2 465.0,620.5 574.2,620.5 574.2,982.2 754.0,982.2 754.0,620.5 765.0,620.5 765.0,982.2 1005.8,982.2 1005.8,620.5 1008.5,620.5 1210.5,620.5 1210.5,982.2 1212.0,982.2" stroke="#8CC168"/>
<polyline points="379.0,892.0 381.0,892.0 383.0,892.0 385.0,892.0 387.0,892.0 389.0,892.0 391.0,892.0 393.0,892.0 395.0,892.0 397.0,892.0 399.0,892.0 401.0,892.0 403.0,892.0 405.0,892.0 407.0,892.0 409.0,892.0 411.0,892.0 413.0,892.0 415.0,892.0 417.0,892.0 419.0,892.0 421.0,892.0 423.0,892.0 425.0,892.0 427.0,892.0 429.0,892.0 431.0,892.0 433.0,892.0 435.0,892.0 437.0,892.0 439.0,892.0 441.0,892.0 443.0,892.0 445.0,892.0 447.0,892.0 449.0,892.0 451.0,892.0 453.0,892.0 455.0,892.0 457.0,892.0 459.0,892.0 461.0,892.0 462.0,620.0 463.5,982.2 466.0,982.2 468.0,900.0 469.7,783.8 472.1,768.2 474.5,752.6 477.9,743.7 480.4,743.3 482.8,742.8 485.3,742.4 487.4,748.1 489.4,753.9 492.1,767.5 494.5,771.5 496.9,775.6 499.1,777.1 501.3,778.7 503.5,780.2 505.7,781.7 507.7,781.9 509.8,782.0 511.8,782.2 513.8,782.4 516.1,784.0 518.3,785.6 520.6,787.2 523.1,787.6 525.6,788.1 528.1,788.5 530.1,787.4 532.2,786.4 534.2,785.3 536.2,784.3 538.2,783.2 540.3,782.2 542.3,781.1 545.0,775.7 547.7,770.2 550.1,768.7 552.5,767.2 554.8,765.6 557.2,764.1 559.2,762.9 561.3,761.7 563.4,760.5 565.4,759.3 567.6,759.1 569.8,759.0 572.0,758.9 574.2,758.7 574.5,892.0 576.5,892.0 578.5,892.0 580.5,892.0 582.5,892.0 584.5,892.0 586.5,892.0 588.5,892.0 590.5,892.0 592.6,892.0 594.6,892.0 596.6,892.0 598.6,892.0 600.6,892.0 602.6,892.0 604.6,892.0 606.6,892.0 608.6,892.0 610.6,892.0 612.6,892.0 614.6,892.0 616.6,892.0 618.6,892.0 620.6,892.0 622.6,892.0 624.6,892.0 626.6,892.0 628.7,892.0 630.7,892.0 632.7,892.0 634.7,892.0 636.7,892.0 638.7,892.0 640.7,892.0 642.7,892.0 644.7,892.0 646.7,892.0 648.7,892.0 650.7,892.0 652.7,892.0 654.7,892.0 656.7,892.0 658.7,892.0 660.7,892.0 662.7,892.0 664.8,892.0 666.8,892.0 668.8,892.0 670.8,892.0 672.8,892.0 674.8,892.0 676.8,892.0 678.8,892.0 680.8,892.0 682.8,892.0 684.8,892.0 686.8,892.0 688.8,892.0 690.8,892.0 692.8,892.0 694.8,892.0 696.8,892.0 698.8,892.0 700.9,892.0 702.9,892.0 704.9,892.0 706.9,892.0 708.9,892.0 710.9,892.0 712.9,892.0 714.9,892.0 716.9,892.0 718.9,892.0 720.9,892.0 722.9,892.0 724.9,892.0 726.9,892.0 728.9,892.0 730.9,892.0 732.9,892.0 734.9,892.0 737.0,892.0 739.0,892.0 741.0,892.0 743.0,892.0 745.0,892.0 747.0,892.0 749.0,892.0 751.0,892.0 753.0,892.0 753.5,620.0 755.0,982.2 757.0,982.2 760.0,860.0 762.0,808.5 764.0,757.0 765.0,760.0 765.5,892.0 767.6,892.0 769.6,892.0 771.7,892.0 773.8,892.0 775.9,892.0 777.9,892.0 780.0,892.0 782.1,892.0 784.1,892.0 786.2,892.0 788.3,892.0 790.4,892.0 792.4,892.0 794.5,892.0 796.6,892.0 798.6,892.0 800.7,892.0 802.8,892.0 804.8,892.0 806.9,892.0 809.0,892.0 811.1,892.0 813.1,892.0 815.2,892.0 815.5,982.2 818.0,982.2 820.5,982.2 823.0,982.2 824.0,952.0 825.0,982.2 827.0,982.2 829.1,982.2 831.1,982.2 833.1,982.2 835.1,982.2 837.2,982.2 839.2,982.2 841.2,982.2 843.2,982.2 845.3,982.2 847.3,982.2 849.3,982.2 851.3,982.2 853.4,982.2 855.4,982.2 857.4,982.2 859.4,982.2 861.5,982.2 863.5,982.2 865.5,982.2 867.5,982.2 869.6,982.2 871.6,982.2 872.0,892.0 874.0,892.0 876.0,892.0 878.0,892.0 880.0,892.0 882.0,892.0 884.0,892.0 886.1,892.0 888.1,892.0 890.1,892.0 892.1,892.0 894.1,892.0 896.1,892.0 898.1,892.0 900.1,892.0 902.1,892.0 904.1,892.0 906.1,892.0 908.1,892.0 910.1,892.0 912.2,892.0 914.2,892.0 916.2,892.0 918.2,892.0 920.2,892.0 922.2,892.0 924.2,892.0 926.2,892.0 928.2,892.0 930.2,892.0 932.2,892.0 934.2,892.0 936.2,892.0 938.2,892.0 940.3,892.0 942.3,892.0 944.3,892.0 946.3,892.0 948.3,892.0 950.3,892.0 952.3,892.0 954.3,892.0 956.3,892.0 958.3,892.0 960.3,892.0 962.3,892.0 964.3,892.0 966.4,892.0 968.4,892.0 970.4,892.0 972.4,892.0 974.4,892.0 976.4,892.0 978.4,892.0 980.4,892.0 982.4,892.0 984.4,892.0 986.4,892.0 988.4,892.0 990.4,892.0 992.5,892.0 994.5,892.0 996.5,892.0 998.5,892.0 1000.5,892.0 1002.5,892.0 1004.5,892.0 1005.5,620.0 1007.0,982.2 1008.0,982.2 1010.0,790.0 1013.0,751.4 1015.5,749.6 1018.0,747.8 1020.5,746.0 1022.8,746.6 1025.0,747.2 1027.3,747.8 1029.6,748.4 1031.8,750.7 1034.0,753.0 1036.0,759.6 1038.0,766.1 1040.0,772.7 1042.4,777.7 1044.8,782.6 1046.8,782.7 1048.9,782.9 1050.9,783.0 1052.9,783.1 1055.0,783.3 1057.0,783.4 1059.4,785.7 1061.7,788.0 1064.1,790.4 1066.4,792.7 1068.8,795.0 1070.8,798.0 1072.9,800.9 1075.0,803.8 1077.0,806.8 1079.3,809.0 1081.5,811.3 1083.8,813.5 1086.1,815.7 1088.3,818.0 1090.6,820.2 1092.8,821.3 1095.1,822.5 1097.3,823.6 1099.5,824.7 1101.8,825.9 1104.0,827.0 1106.0,827.0 1108.0,827.0 1110.0,827.0 1112.0,827.0 1114.0,827.0 1116.0,824.3 1118.0,821.6 1120.0,818.9 1122.0,816.2 1124.0,813.5 1126.1,808.5 1128.2,803.5 1130.4,798.4 1132.5,793.4 1134.7,791.2 1137.0,788.9 1139.2,786.7 1141.4,784.5 1143.7,782.2 1145.9,780.0 1147.9,776.6 1149.9,773.1 1152.0,769.7 1154.0,766.2 1156.0,762.8 1158.2,761.9 1160.3,761.1 1162.5,760.2 1164.7,759.3 1166.9,758.4 1169.0,757.6 1171.2,756.7 1173.3,756.7 1175.5,756.7 1177.6,756.7 1179.8,756.7 1181.9,756.7 1184.2,752.2 1186.4,747.6 1188.4,747.9 1190.5,748.1 1192.5,748.4 1194.8,749.7 1197.1,751.0 1199.4,752.4 1201.7,753.7 1204.2,754.0 1206.8,754.2 1209.3,754.5 1209.5,892.0 1212.0,892.0" stroke="#335AA1"/>
</g>
<g fill="#fff" stroke="#5f5f5f" stroke-width="2.2"><circle cx="200.5" cy="478" r="5.5"/><circle cx="830.5" cy="478" r="5.5"/><circle cx="1460.5" cy="478" r="5.5"/><circle cx="200.5" cy="850" r="5.5"/><circle cx="1460.5" cy="850" r="5.5"/><circle cx="200.5" cy="1222" r="5.5"/><circle cx="830.5" cy="1222" r="5.5"/><circle cx="1460.5" cy="1222" r="5.5"/></g>
</svg>
<div class="t" style="left:200px;width:1261px;top:498px;text-align:center;font-size:24.5px;color:#595959">MZH Bächelacker Lüftung Turnhalle Monoblock Nebenräume März'2025</div>
<div class="t ax" style="right:1452px;top:539.3px">120</div>
<div class="t ax" style="right:1452px;top:611.7px">100</div>
<div class="t ax" style="right:1452px;top:684.1px">80</div>
<div class="t ax" style="right:1452px;top:756.5px">60</div>
<div class="t ax" style="right:1452px;top:828.9px">40</div>
<div class="t ax" style="right:1452px;top:901.3px">20</div>
<div class="t ax" style="right:1452px;top:973.7px">0</div>
<div class="t ax" style="right:1452px;top:1046.1px">-20</div>
<div class="t ax" style="right:1452px;top:1118.5px">-40</div>
<div class="t ax" style="left:221.5px;width:74px;text-align:center;top:998px">1.741E+09</div>
<div class="t ax" style="left:383.9px;width:74px;text-align:center;top:998px">1.741E+09</div>
<div class="t ax" style="left:546.4px;width:74px;text-align:center;top:998px">1.741E+09</div>
<div class="t ax" style="left:708.8px;width:74px;text-align:center;top:998px">1.741E+09</div>
<div class="t ax" style="left:871.3px;width:74px;text-align:center;top:998px">1.741E+09</div>
<div class="t ax" style="left:1033.7px;width:74px;text-align:center;top:998px">1.741E+09</div>
<div class="t ax" style="left:1196.1px;width:74px;text-align:center;top:998px">1.741E+09</div>
<div class="t ax" style="left:1358.6px;width:74px;text-align:center;top:998px">1.741E+09</div>
<div class="t ax" style="left:399.0px;top:1155.7px">232F1</div>
<div class="t ax" style="left:494.7px;top:1155.7px">231F1</div>
<div class="t ax" style="left:590.4px;top:1155.7px">230F1</div>
<div class="t ax" style="left:686.1px;top:1155.7px">285B2</div>
<div class="t ax" style="left:781.8px;top:1155.7px">285B3</div>
<div class="t ax" style="left:877.5px;top:1155.7px">99B2</div>
<div class="t ax" style="left:973.2px;top:1155.7px">280B2</div>
<div class="t ax" style="left:1068.9px;top:1155.7px">280B3</div>
<div class="t ax" style="left:1164.6px;top:1155.7px">280B5</div>
<div class="t ax" style="left:1260.3px;top:1155.7px">280B7</div>
<div class="t ax" style="left:399.0px;top:1188.5px">260Y1</div>
<div class="t ax" style="left:494.7px;top:1188.5px">260Y1</div>
<div class="t ax" style="left:590.4px;top:1188.5px">201M1</div>
<div class="t ax" style="left:686.1px;top:1188.5px">202M1</div>
<div class="t ax" style="left:781.8px;top:1188.5px">205M1</div>
<div class="t ax" style="left:877.5px;top:1188.5px">240Y5</div>
<div class="t ax" style="left:973.2px;top:1188.5px">240Y1</div>
<div class="t ax" style="left:1068.9px;top:1188.5px">240Y3</div>
<div class="t ax" style="left:1164.6px;top:1188.5px">260Y1</div>
<svg class="a" style="left:0;top:0" width="1695" height="1313"><g stroke-width="3"><path d="M357.0 1164.2h38.5" stroke="#4472C4"/><path d="M452.7 1164.2h38.5" stroke="#ED7D31"/><path d="M548.4 1164.2h38.5" stroke="#A5A5A5"/><path d="M644.1 1164.2h38.5" stroke="#FFC000"/><path d="M739.8 1164.2h38.5" stroke="#5B9BD5"/><path d="M835.5 1164.2h38.5" stroke="#70AD47"/><path d="M931.2 1164.2h38.5" stroke="#264478"/><path d="M1026.9 1164.2h38.5" stroke="#9E480E"/><path d="M1122.6 1164.2h38.5" stroke="#636363"/><path d="M1218.3 1164.2h38.5" stroke="#997300"/><path d="M357.0 1197h38.5" stroke="#255E91"/><path d="M452.7 1197h38.5" stroke="#43682B"/><path d="M548.4 1197h38.5" stroke="#698ED0"/><path d="M644.1 1197h38.5" stroke="#F1975A"/><path d="M739.8 1197h38.5" stroke="#B7B7B7"/><path d="M835.5 1197h38.5" stroke="#FFCD33"/><path d="M931.2 1197h38.5" stroke="#7CAFDD"/><path d="M1026.9 1197h38.5" stroke="#8CC168"/><path d="M1122.6 1197h38.5" stroke="#335AA1"/></g></svg>
</body></html>
